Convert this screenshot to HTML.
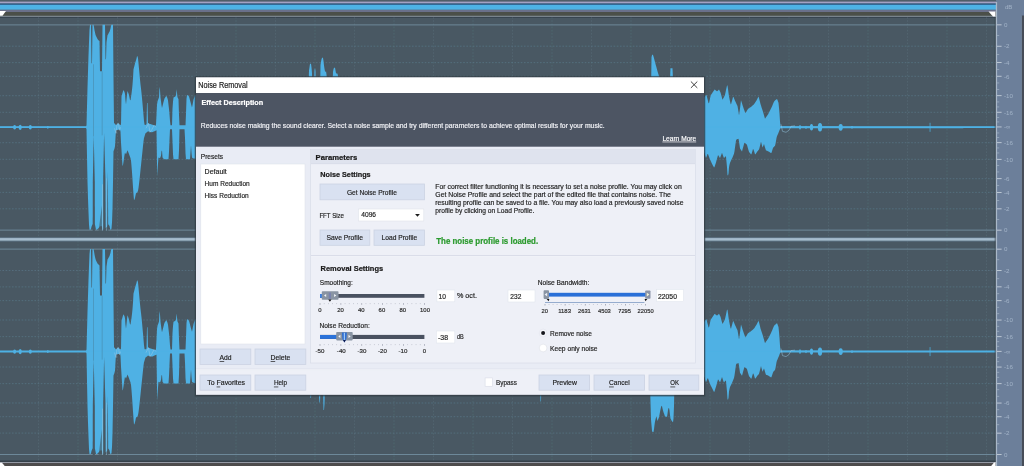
<!DOCTYPE html>
<html lang="en"><head><meta charset="utf-8"><title>Noise Removal</title>
<style>html,body{margin:0;padding:0;background:#485963;overflow:hidden}body{width:1024px;height:466px;position:relative;font-family:"Liberation Sans",sans-serif}svg{position:absolute;left:0;top:0;display:block}text{font-family:"Liberation Sans",sans-serif}</style>
</head><body>
<svg width="1024" height="466" viewBox="0 0 1024 466">
<defs><filter id="soft" x="-6" y="-6" width="1036" height="478" filterUnits="userSpaceOnUse"><feGaussianBlur stdDeviation="0.4"/></filter></defs>
<g filter="url(#soft)">
<rect x="-4" y="-4" width="1032" height="474" fill="#485963"/>
<rect x="-4" y="-4" width="1032" height="6" fill="#4f5d68"/>
<rect x="-4" y="1.6" width="1000" height="1.9" fill="#a3a1c4"/>
<rect x="-4" y="3.5" width="1000" height="1.5" fill="#30608c"/>
<rect x="-4" y="4.9" width="1000" height="4.9" fill="#4db2e5"/>
<rect x="-4" y="9.8" width="1000" height="2.3" fill="#6a6f8a"/>
<rect x="-4" y="12.0" width="1000" height="3.9" fill="#4b4f49"/>
<rect x="-4" y="15.8" width="1000" height="1.1" fill="#879298"/>
<rect x="-4" y="16.9" width="1000" height="1.0" fill="#36424f"/>
<polygon points="-4,11 6,11 2.5,15.8 -4,15.8" fill="#ffffff"/>
<polygon points="988.5,11.4 995.5,11.4 995.5,16.6 993,16.6" fill="#ffffff"/>
<rect x="-4" y="460.7" width="1000" height="1.2" fill="#29313b"/>
<rect x="-4" y="461.9" width="1000" height="1.2" fill="#9499a4"/>
<rect x="-4" y="463.1" width="1000" height="8" fill="#4e4b4b"/>
<polygon points="-4,462.8 2,462.8 8,470 -4,470" fill="#ffffff"/>
<polygon points="994,462.4 995.6,462.4 995.6,470 988,470" fill="#ffffff"/>
<g stroke="#6a8ea6" stroke-width="0.8" stroke-dasharray="1.6 1.6" opacity="0.46" fill="none">
<path d="M-4 46.2 H996"/>
<path d="M-4 208.8 H996"/>
<path d="M-4 62.6 H996"/>
<path d="M-4 192.4 H996"/>
<path d="M-4 76.3 H996"/>
<path d="M-4 178.7 H996"/>
<path d="M-4 95.7 H996"/>
<path d="M-4 159.3 H996"/>
<path d="M-4 112.3 H996"/>
<path d="M-4 142.7 H996"/>
<path d="M-4 270.5 H996"/>
<path d="M-4 433.1 H996"/>
<path d="M-4 286.9 H996"/>
<path d="M-4 416.7 H996"/>
<path d="M-4 300.6 H996"/>
<path d="M-4 403.0 H996"/>
<path d="M-4 320.0 H996"/>
<path d="M-4 383.6 H996"/>
<path d="M-4 336.6 H996"/>
<path d="M-4 367.0 H996"/>
</g>
<g stroke="#6d8593" stroke-width="0.8" stroke-dasharray="1.6 1.6" opacity="0.3" fill="none">
<path d="M38.5 17 V461"/>
<path d="M78.0 17 V461"/>
<path d="M117.5 17 V461"/>
<path d="M157.0 17 V461"/>
<path d="M196.5 17 V461"/>
<path d="M236.0 17 V461"/>
<path d="M275.5 17 V461"/>
<path d="M315.0 17 V461"/>
<path d="M354.5 17 V461"/>
<path d="M394.0 17 V461"/>
<path d="M433.5 17 V461"/>
<path d="M473.0 17 V461"/>
<path d="M512.5 17 V461"/>
<path d="M552.0 17 V461"/>
<path d="M591.5 17 V461"/>
<path d="M631.0 17 V461"/>
<path d="M670.5 17 V461"/>
<path d="M710.0 17 V461"/>
<path d="M749.5 17 V461"/>
<path d="M789.0 17 V461"/>
<path d="M828.5 17 V461"/>
<path d="M868.0 17 V461"/>
<path d="M907.5 17 V461"/>
<path d="M947.0 17 V461"/>
<path d="M986.5 17 V461"/>
</g>
<rect x="-4" y="24.4" width="1000" height="1" fill="#7490a2" opacity="0.85"/>
<rect x="-4" y="229.6" width="1000" height="1" fill="#7490a2" opacity="0.85"/>
<rect x="-4" y="248.6" width="1000" height="1" fill="#7490a2" opacity="0.85"/>
<rect x="-4" y="454.0" width="1000" height="1" fill="#7490a2" opacity="0.85"/>
<rect x="-4" y="237.9" width="1000" height="3" fill="#a5bccd"/>
<rect x="-4" y="237.3" width="1000" height="0.8" fill="#5f7486"/>
<rect x="-4" y="240.7" width="1000" height="0.8" fill="#5f7486"/>
<path d="M0.0 126.5 L0.5 126.5 L1.0 126.5 L1.5 126.5 L2.0 126.5 L2.5 126.5 L3.0 126.5 L3.5 126.5 L4.0 126.5 L4.5 126.5 L5.0 126.5 L5.5 126.5 L6.0 126.5 L6.5 126.5 L7.0 126.5 L7.5 126.5 L8.0 126.5 L8.5 126.5 L9.0 126.5 L9.5 126.5 L10.0 126.5 L10.5 126.5 L11.0 126.5 L11.5 126.5 L12.0 126.5 L12.5 126.5 L13.0 126.5 L13.5 126.5 L14.0 126.5 L14.5 126.5 L15.0 126.5 L15.5 126.5 L16.0 126.5 L16.5 126.5 L17.0 126.5 L17.5 126.5 L18.0 126.5 L18.5 126.5 L19.0 126.5 L19.5 126.5 L20.0 126.5 L20.5 126.5 L21.0 126.5 L21.5 126.5 L22.0 126.5 L22.5 126.5 L23.0 126.5 L23.5 126.5 L24.0 126.5 L24.5 126.5 L25.0 126.5 L25.5 126.5 L26.0 126.5 L26.5 126.5 L27.0 126.5 L27.5 126.5 L28.0 126.5 L28.5 126.5 L29.0 126.5 L29.5 126.5 L30.0 126.5 L30.5 126.5 L31.0 126.5 L31.5 126.5 L32.0 126.5 L32.5 126.5 L33.0 126.5 L33.5 126.5 L34.0 126.5 L34.5 126.5 L35.0 126.5 L35.5 126.5 L36.0 126.5 L36.5 126.5 L37.0 126.5 L37.5 126.5 L38.0 126.5 L38.5 126.5 L39.0 126.5 L39.5 126.5 L40.0 126.5 L40.5 126.5 L41.0 126.5 L41.5 126.5 L42.0 126.5 L42.5 126.5 L43.0 126.5 L43.5 126.5 L44.0 126.5 L44.5 126.5 L45.0 126.5 L45.5 126.5 L46.0 126.5 L46.5 126.5 L47.0 126.5 L47.5 126.5 L48.0 126.5 L48.5 126.5 L49.0 126.5 L49.5 126.5 L50.0 126.5 L50.5 126.5 L51.0 126.5 L51.5 126.5 L52.0 126.5 L52.5 126.5 L53.0 126.5 L53.5 126.5 L54.0 126.5 L54.5 126.5 L55.0 126.5 L55.5 126.5 L56.0 126.5 L56.5 126.5 L57.0 126.5 L57.5 126.5 L58.0 126.5 L58.5 126.5 L59.0 126.5 L59.5 126.5 L60.0 126.5 L60.5 126.5 L61.0 126.5 L61.5 126.5 L62.0 126.5 L62.5 126.5 L63.0 126.5 L63.5 126.5 L64.0 126.5 L64.5 126.5 L65.0 126.5 L65.5 126.5 L66.0 126.5 L66.5 126.5 L67.0 126.5 L67.5 126.5 L68.0 126.5 L68.5 126.5 L69.0 126.5 L69.5 126.5 L70.0 126.5 L70.5 126.5 L71.0 126.5 L71.5 126.5 L72.0 126.5 L72.5 126.5 L73.0 126.5 L73.5 126.5 L74.0 126.5 L74.5 126.5 L75.0 126.5 L75.5 126.5 L76.0 126.5 L76.5 126.5 L77.0 126.5 L77.5 126.5 L78.0 126.5 L78.5 126.5 L79.0 126.5 L79.5 126.5 L80.0 126.5 L80.5 126.5 L81.0 126.5 L81.5 126.5 L82.0 126.5 L82.5 126.5 L83.0 126.5 L83.5 126.5 L84.0 126.5 L84.5 126.5 L85.0 126.5 L85.5 126.5 L86.0 126.5 L86.5 125.3 L87.0 106.3 L87.5 87.3 L88.0 71.4 L88.5 55.5 L89.0 42.3 L89.5 29.8 L90.0 24.9 L90.5 24.8 L91.0 24.8 L91.5 63.3 L92.0 63.3 L92.5 24.8 L93.0 24.8 L93.5 24.8 L94.0 27.0 L94.5 30.3 L95.0 32.6 L95.5 34.8 L96.0 36.1 L96.5 37.1 L97.0 38.1 L97.5 39.1 L98.0 39.7 L98.5 40.2 L99.0 40.7 L99.5 41.1 L100.0 71.3 L100.5 71.3 L101.0 71.3 L101.5 71.3 L102.0 71.3 L102.5 24.8 L103.0 24.8 L103.5 24.8 L104.0 24.8 L104.5 24.8 L105.0 24.8 L105.5 59.3 L106.0 59.3 L106.5 42.3 L107.0 38.8 L107.5 35.3 L108.0 34.4 L108.5 33.5 L109.0 32.6 L109.5 31.7 L110.0 30.2 L110.5 28.4 L111.0 25.8 L111.5 24.8 L112.0 24.8 L112.5 24.8 L113.0 24.8 L113.5 78.5 L114.0 123.3 L114.5 123.3 L115.0 123.9 L115.5 124.6 L116.0 125.3 L116.5 124.8 L117.0 124.3 L117.5 123.8 L118.0 123.3 L118.5 123.7 L119.0 124.1 L119.5 124.5 L120.0 124.8 L120.5 125.2 L121.0 124.2 L121.5 96.6 L122.0 94.8 L122.5 93.0 L123.0 91.2 L123.5 89.9 L124.0 90.9 L124.5 91.9 L125.0 94.0 L125.5 100.4 L126.0 104.5 L126.5 99.6 L127.0 94.6 L127.5 91.0 L128.0 92.3 L128.5 93.6 L129.0 95.1 L129.5 97.6 L130.0 100.0 L130.5 100.2 L131.0 96.9 L131.5 93.7 L132.0 89.7 L132.5 84.8 L133.0 78.2 L133.5 69.3 L134.0 67.4 L134.5 65.4 L135.0 63.5 L135.5 61.8 L136.0 60.2 L136.5 58.4 L137.0 56.2 L137.5 56.2 L138.0 58.3 L138.5 63.3 L139.0 68.7 L139.5 74.1 L140.0 79.6 L140.5 84.4 L141.0 88.6 L141.5 92.9 L142.0 98.0 L142.5 103.6 L143.0 109.2 L143.5 115.0 L144.0 120.9 L144.5 124.5 L145.0 125.1 L145.5 124.9 L146.0 124.6 L146.5 124.3 L147.0 103.0 L147.5 103.0 L148.0 123.4 L148.5 123.5 L149.0 123.7 L149.5 123.8 L150.0 124.0 L150.5 124.1 L151.0 124.3 L151.5 124.5 L152.0 124.6 L152.5 124.8 L153.0 125.0 L153.5 125.1 L154.0 125.3 L154.5 125.5 L155.0 125.6 L155.5 125.8 L156.0 124.4 L156.5 115.3 L157.0 104.7 L157.5 101.5 L158.0 100.1 L158.5 98.7 L159.0 97.3 L159.5 86.7 L160.0 90.0 L160.5 97.4 L161.0 101.3 L161.5 105.3 L162.0 108.0 L162.5 106.0 L163.0 104.1 L163.5 102.1 L164.0 100.2 L164.5 98.5 L165.0 97.7 L165.5 97.0 L166.0 96.2 L166.5 95.9 L167.0 97.2 L167.5 98.5 L168.0 100.4 L168.5 104.7 L169.0 108.9 L169.5 114.2 L170.0 121.1 L170.5 125.3 L171.0 125.3 L171.5 125.3 L172.0 125.3 L172.5 108.6 L173.0 101.7 L173.5 97.5 L174.0 97.2 L174.5 97.0 L175.0 96.8 L175.5 96.3 L176.0 95.5 L176.5 89.2 L177.0 92.9 L177.5 97.2 L178.0 98.2 L178.5 99.2 L179.0 115.0 L179.5 125.3 L180.0 125.3 L180.5 125.3 L181.0 125.3 L181.5 125.3 L182.0 125.3 L182.5 125.3 L183.0 125.3 L183.5 125.3 L184.0 125.3 L184.5 125.3 L185.0 125.3 L185.5 125.3 L186.0 113.4 L186.5 98.7 L187.0 95.3 L187.5 95.0 L188.0 95.5 L188.5 96.0 L189.0 96.5 L189.5 98.2 L190.0 100.2 L190.5 102.1 L191.0 104.1 L191.5 105.8 L192.0 107.5 L192.5 104.9 L193.0 102.2 L193.5 99.6 L194.0 98.3 L194.5 96.9 L195.0 95.6 L195.5 95.1 L196.0 94.6 L196.5 95.3 L197.0 95.9 L197.5 96.6 L198.0 97.3 L198.5 98.8 L199.0 100.3 L199.5 102.3 L200.0 102.7 L200.5 102.0 L201.0 104.8 L201.5 104.1 L202.0 98.3 L202.5 97.5 L203.0 101.1 L203.5 100.4 L204.0 99.4 L204.5 101.5 L205.0 102.8 L205.5 105.0 L206.0 107.3 L206.5 109.5 L207.0 110.4 L207.5 112.7 L208.0 114.4 L208.5 112.3 L209.0 114.4 L209.5 112.8 L210.0 111.0 L210.5 109.4 L211.0 108.0 L211.5 106.4 L212.0 101.6 L212.5 100.9 L213.0 102.6 L213.5 102.0 L214.0 99.8 L214.5 99.1 L215.0 94.5 L215.5 93.8 L216.0 93.8 L216.5 95.8 L217.0 97.8 L217.5 99.8 L218.0 99.2 L218.5 101.4 L219.0 106.8 L219.5 108.7 L220.0 108.3 L220.5 107.2 L221.0 106.3 L221.5 105.3 L222.0 103.4 L222.5 102.3 L223.0 102.1 L223.5 101.0 L224.0 102.8 L224.5 101.9 L225.0 98.9 L225.5 97.8 L226.0 97.9 L226.5 99.7 L227.0 101.0 L227.5 102.8 L228.0 107.4 L228.5 109.0 L229.0 107.5 L229.5 109.4 L230.0 112.7 L230.5 114.5 L231.0 115.4 L231.5 117.3 L232.0 119.4 L232.5 119.9 L233.0 120.7 L233.5 121.1 L234.0 121.0 L234.5 121.8 L235.0 122.3 L235.5 122.8 L236.0 123.3 L236.5 123.8 L237.0 124.3 L237.5 124.8 L238.0 125.3 L238.5 125.3 L239.0 125.3 L239.5 125.3 L240.0 125.3 L240.5 125.3 L241.0 125.3 L241.5 125.3 L242.0 125.3 L242.5 125.3 L243.0 125.3 L243.5 125.3 L244.0 125.3 L244.5 125.3 L245.0 125.3 L245.5 125.3 L246.0 125.3 L246.5 123.0 L247.0 120.5 L247.5 118.2 L248.0 116.8 L248.5 114.7 L249.0 114.5 L249.5 112.7 L250.0 108.2 L250.5 107.0 L251.0 106.7 L251.5 105.6 L252.0 102.6 L252.5 101.4 L253.0 101.7 L253.5 100.6 L254.0 98.1 L254.5 97.0 L255.0 96.1 L255.5 95.0 L256.0 96.3 L256.5 96.8 L257.0 95.1 L257.5 95.6 L258.0 92.5 L258.5 93.1 L259.0 95.9 L259.5 96.4 L260.0 98.9 L260.5 99.4 L261.0 98.6 L261.5 99.1 L262.0 98.3 L262.5 97.3 L263.0 97.8 L263.5 96.8 L264.0 97.3 L264.5 96.4 L265.0 91.8 L265.5 90.8 L266.0 90.6 L266.5 89.6 L267.0 90.8 L267.5 89.9 L268.0 87.1 L268.5 88.6 L269.0 91.5 L269.5 93.0 L270.0 93.7 L270.5 95.2 L271.0 102.0 L271.5 103.2 L272.0 101.4 L272.5 102.8 L273.0 103.3 L273.5 104.7 L274.0 106.2 L274.5 105.1 L275.0 103.0 L275.5 101.9 L276.0 99.3 L276.5 98.0 L277.0 100.0 L277.5 98.9 L278.0 98.6 L278.5 97.5 L279.0 93.2 L279.5 92.0 L280.0 90.5 L280.5 92.4 L281.0 92.1 L281.5 94.1 L282.0 98.9 L282.5 100.7 L283.0 104.2 L283.5 105.9 L284.0 108.3 L284.5 109.9 L285.0 110.8 L285.5 112.5 L286.0 112.3 L286.5 110.8 L287.0 110.4 L287.5 109.0 L288.0 108.7 L288.5 107.4 L289.0 106.0 L289.5 104.7 L290.0 102.0 L290.5 100.6 L291.0 98.1 L291.5 96.7 L292.0 96.8 L292.5 97.6 L293.0 100.4 L293.5 101.1 L294.0 101.9 L294.5 102.7 L295.0 102.5 L295.5 103.3 L296.0 103.8 L296.5 104.7 L297.0 109.2 L297.5 109.9 L298.0 108.9 L298.5 107.8 L299.0 106.1 L299.5 105.0 L300.0 102.4 L300.5 101.2 L301.0 101.4 L301.5 100.3 L302.0 96.8 L302.5 95.6 L303.0 95.4 L303.5 94.3 L304.0 97.8 L304.5 98.2 L305.0 92.2 L305.5 92.7 L306.0 94.1 L306.5 94.6 L307.0 98.4 L307.5 98.8 L308.0 94.6 L308.5 85.5 L309.0 70.6 L309.5 67.2 L310.0 63.8 L310.5 63.8 L311.0 63.8 L311.5 67.4 L312.0 73.3 L312.5 95.2 L313.0 95.6 L313.5 95.6 L314.0 86.3 L314.5 70.0 L315.0 67.9 L315.5 70.7 L316.0 90.5 L316.5 94.7 L317.0 94.3 L317.5 94.3 L318.0 91.5 L318.5 91.5 L319.0 90.6 L319.5 90.6 L320.0 95.2 L320.5 64.8 L321.0 62.0 L321.5 59.3 L322.0 57.9 L322.5 57.6 L323.0 58.1 L323.5 61.0 L324.0 65.5 L324.5 68.8 L325.0 71.3 L325.5 71.9 L326.0 71.3 L326.5 74.6 L327.0 81.8 L327.5 92.8 L328.0 93.7 L328.5 93.7 L329.0 92.6 L329.5 92.6 L330.0 96.7 L330.5 96.7 L331.0 94.3 L331.5 94.3 L332.0 95.5 L332.5 87.9 L333.0 71.8 L333.5 69.2 L334.0 67.7 L334.5 67.7 L335.0 67.7 L335.5 70.5 L336.0 73.3 L336.5 73.5 L337.0 73.6 L337.5 73.8 L338.0 76.1 L338.5 97.5 L339.0 100.2 L339.5 100.8 L340.0 98.5 L340.5 99.2 L341.0 99.4 L341.5 100.2 L342.0 103.3 L342.5 104.0 L343.0 102.1 L343.5 102.9 L344.0 106.1 L344.5 105.4 L345.0 105.4 L345.5 104.8 L346.0 103.5 L346.5 102.8 L347.0 102.8 L347.5 102.2 L348.0 101.7 L348.5 101.1 L349.0 101.0 L349.5 100.4 L350.0 96.8 L350.5 98.5 L351.0 99.8 L351.5 101.5 L352.0 104.0 L352.5 105.7 L353.0 106.4 L353.5 108.1 L354.0 109.8 L354.5 111.6 L355.0 114.3 L355.5 115.9 L356.0 117.6 L356.5 118.2 L357.0 119.1 L357.5 119.7 L358.0 120.0 L358.5 120.7 L359.0 122.2 L359.5 122.0 L360.0 122.6 L360.5 123.3 L361.0 124.0 L361.5 124.6 L362.0 125.3 L362.5 125.3 L363.0 125.3 L363.5 125.3 L364.0 125.3 L364.5 125.3 L365.0 125.3 L365.5 125.3 L366.0 125.3 L366.5 125.3 L367.0 125.3 L367.5 125.3 L368.0 125.3 L368.5 125.3 L369.0 125.3 L369.5 125.3 L370.0 125.3 L370.5 125.3 L371.0 125.3 L371.5 125.3 L372.0 125.3 L372.5 125.3 L373.0 125.3 L373.5 125.3 L374.0 125.3 L374.5 125.3 L375.0 125.3 L375.5 125.3 L376.0 125.3 L376.5 125.3 L377.0 125.3 L377.5 125.3 L378.0 125.3 L378.5 125.3 L379.0 125.3 L379.5 125.3 L380.0 125.3 L380.5 123.8 L381.0 122.3 L381.5 121.0 L382.0 119.5 L382.5 118.0 L383.0 115.7 L383.5 114.2 L384.0 112.9 L384.5 111.4 L385.0 112.6 L385.5 111.3 L386.0 106.1 L386.5 105.0 L387.0 106.7 L387.5 105.8 L388.0 107.0 L388.5 106.2 L389.0 101.7 L389.5 100.7 L390.0 100.6 L390.5 99.7 L391.0 99.1 L391.5 98.2 L392.0 94.3 L392.5 95.5 L393.0 101.0 L393.5 102.1 L394.0 97.7 L394.5 98.9 L395.0 103.6 L395.5 104.7 L396.0 103.7 L396.5 104.9 L397.0 106.4 L397.5 107.6 L398.0 108.7 L398.5 107.6 L399.0 109.9 L399.5 109.0 L400.0 104.5 L400.5 103.4 L401.0 106.7 L401.5 105.8 L402.0 100.2 L402.5 99.2 L403.0 100.3 L403.5 99.4 L404.0 99.7 L404.5 101.4 L405.0 102.6 L405.5 104.3 L406.0 102.7 L406.5 104.7 L407.0 108.1 L407.5 109.9 L408.0 112.4 L408.5 114.2 L409.0 115.0 L409.5 117.0 L410.0 119.5 L410.5 119.8 L411.0 119.5 L411.5 119.8 L412.0 121.0 L412.5 121.3 L413.0 120.7 L413.5 121.4 L414.0 121.7 L414.5 122.0 L415.0 122.3 L415.5 122.6 L416.0 122.9 L416.5 123.2 L417.0 123.5 L417.5 123.8 L418.0 124.1 L418.5 124.4 L419.0 124.7 L419.5 125.0 L420.0 125.3 L420.5 125.3 L421.0 125.3 L421.5 125.3 L422.0 125.3 L422.5 125.3 L423.0 125.3 L423.5 125.3 L424.0 125.3 L424.5 125.3 L425.0 125.3 L425.5 125.3 L426.0 125.3 L426.5 125.3 L427.0 125.3 L427.5 125.3 L428.0 125.3 L428.5 125.3 L429.0 125.3 L429.5 125.3 L430.0 125.3 L430.5 125.3 L431.0 125.3 L431.5 125.3 L432.0 125.3 L432.5 125.3 L433.0 125.3 L433.5 125.3 L434.0 125.3 L434.5 125.3 L435.0 125.3 L435.5 125.3 L436.0 125.3 L436.5 125.3 L437.0 125.3 L437.5 125.3 L438.0 125.3 L438.5 125.3 L439.0 125.3 L439.5 125.3 L440.0 125.3 L440.5 123.5 L441.0 121.6 L441.5 120.4 L442.0 117.3 L442.5 115.3 L443.0 113.4 L443.5 111.4 L444.0 111.6 L444.5 109.9 L445.0 109.7 L445.5 108.1 L446.0 106.6 L446.5 105.9 L447.0 101.6 L447.5 100.7 L448.0 98.1 L448.5 97.3 L449.0 97.7 L449.5 96.9 L450.0 95.9 L450.5 95.1 L451.0 96.6 L451.5 95.8 L452.0 95.3 L452.5 96.4 L453.0 95.1 L453.5 96.3 L454.0 98.2 L454.5 99.4 L455.0 101.9 L455.5 103.0 L456.0 103.1 L456.5 104.2 L457.0 105.8 L457.5 106.9 L458.0 107.8 L458.5 106.5 L459.0 105.7 L459.5 104.4 L460.0 102.6 L460.5 101.3 L461.0 101.4 L461.5 100.2 L462.0 95.9 L462.5 94.5 L463.0 96.2 L463.5 95.0 L464.0 93.7 L464.5 95.3 L465.0 96.9 L465.5 98.4 L466.0 100.3 L466.5 101.8 L467.0 99.0 L467.5 100.8 L468.0 102.9 L468.5 104.7 L469.0 111.0 L469.5 112.4 L470.0 112.6 L470.5 111.7 L471.0 109.1 L471.5 108.1 L472.0 105.9 L472.5 104.8 L473.0 105.6 L473.5 104.6 L474.0 104.7 L474.5 103.7 L475.0 101.3 L475.5 100.3 L476.0 100.8 L476.5 102.5 L477.0 103.7 L477.5 105.5 L478.0 106.3 L478.5 108.2 L479.0 109.0 L479.5 110.9 L480.0 115.3 L480.5 116.9 L481.0 118.5 L481.5 120.1 L482.0 120.8 L482.5 121.5 L483.0 121.8 L483.5 122.0 L484.0 122.3 L484.5 122.5 L485.0 122.8 L485.5 123.0 L486.0 123.3 L486.5 123.5 L487.0 123.8 L487.5 124.0 L488.0 124.3 L488.5 124.5 L489.0 124.8 L489.5 125.0 L490.0 125.3 L490.5 125.3 L491.0 125.3 L491.5 125.3 L492.0 125.3 L492.5 125.3 L493.0 125.3 L493.5 125.3 L494.0 125.3 L494.5 125.3 L495.0 125.3 L495.5 125.3 L496.0 125.3 L496.5 125.3 L497.0 125.3 L497.5 125.3 L498.0 125.3 L498.5 125.3 L499.0 125.3 L499.5 125.3 L500.0 125.3 L500.5 125.3 L501.0 125.3 L501.5 125.3 L502.0 125.3 L502.5 125.3 L503.0 125.3 L503.5 125.3 L504.0 125.3 L504.5 125.3 L505.0 125.3 L505.5 125.3 L506.0 125.3 L506.5 125.3 L507.0 125.3 L507.5 125.3 L508.0 125.3 L508.5 125.3 L509.0 125.3 L509.5 125.3 L510.0 125.3 L510.5 125.3 L511.0 125.3 L511.5 125.3 L512.0 125.3 L512.5 125.3 L513.0 125.3 L513.5 125.3 L514.0 125.3 L514.5 125.3 L515.0 125.3 L515.5 125.3 L516.0 125.3 L516.5 125.3 L517.0 125.3 L517.5 125.3 L518.0 125.3 L518.5 125.3 L519.0 125.3 L519.5 125.3 L520.0 125.3 L520.5 123.8 L521.0 122.3 L521.5 121.0 L522.0 118.8 L522.5 117.2 L523.0 116.1 L523.5 114.6 L524.0 113.6 L524.5 112.1 L525.0 110.6 L525.5 109.2 L526.0 108.4 L526.5 107.6 L527.0 105.7 L527.5 104.8 L528.0 108.7 L528.5 108.1 L529.0 103.8 L529.5 103.0 L530.0 105.0 L530.5 104.3 L531.0 98.1 L531.5 97.2 L532.0 99.5 L532.5 99.1 L533.0 94.0 L533.5 93.5 L534.0 95.9 L534.5 95.4 L535.0 91.3 L535.5 90.8 L536.0 93.8 L536.5 93.3 L537.0 95.4 L537.5 95.0 L538.0 93.7 L538.5 94.9 L539.0 91.7 L539.5 93.1 L540.0 95.8 L540.5 97.2 L541.0 100.6 L541.5 101.9 L542.0 106.2 L542.5 107.3 L543.0 106.4 L543.5 107.6 L544.0 106.2 L544.5 105.3 L545.0 108.1 L545.5 107.3 L546.0 104.0 L546.5 103.2 L547.0 106.8 L547.5 106.1 L548.0 98.5 L548.5 97.6 L549.0 102.2 L549.5 101.5 L550.0 96.8 L550.5 98.7 L551.0 99.9 L551.5 101.8 L552.0 108.5 L552.5 110.0 L553.0 109.3 L553.5 111.1 L554.0 111.5 L554.5 113.4 L555.0 115.8 L555.5 117.6 L556.0 120.7 L556.5 121.1 L557.0 120.6 L557.5 121.0 L558.0 120.8 L558.5 121.8 L559.0 122.3 L559.5 122.8 L560.0 123.3 L560.5 123.8 L561.0 124.3 L561.5 124.8 L562.0 125.3 L562.5 125.3 L563.0 125.3 L563.5 125.3 L564.0 125.3 L564.5 125.3 L565.0 125.3 L565.5 125.3 L566.0 125.3 L566.5 125.3 L567.0 125.3 L567.5 125.3 L568.0 125.3 L568.5 125.3 L569.0 125.3 L569.5 125.3 L570.0 125.3 L570.5 125.3 L571.0 125.3 L571.5 125.3 L572.0 125.3 L572.5 125.3 L573.0 125.3 L573.5 125.3 L574.0 125.3 L574.5 125.3 L575.0 125.3 L575.5 125.3 L576.0 125.3 L576.5 125.3 L577.0 125.3 L577.5 125.3 L578.0 125.3 L578.5 125.3 L579.0 125.3 L579.5 125.3 L580.0 125.3 L580.5 125.3 L581.0 125.3 L581.5 125.3 L582.0 125.3 L582.5 125.3 L583.0 125.3 L583.5 125.3 L584.0 125.3 L584.5 125.3 L585.0 125.3 L585.5 125.3 L586.0 125.3 L586.5 125.3 L587.0 125.3 L587.5 125.3 L588.0 125.3 L588.5 125.3 L589.0 125.3 L589.5 125.3 L590.0 125.3 L590.5 125.3 L591.0 125.3 L591.5 125.3 L592.0 125.3 L592.5 125.3 L593.0 125.3 L593.5 125.3 L594.0 125.3 L594.5 125.3 L595.0 125.3 L595.5 125.3 L596.0 125.3 L596.5 125.3 L597.0 125.3 L597.5 125.3 L598.0 125.3 L598.5 125.3 L599.0 125.3 L599.5 125.3 L600.0 125.3 L600.5 124.0 L601.0 122.6 L601.5 121.1 L602.0 119.5 L602.5 118.1 L603.0 117.7 L603.5 116.5 L604.0 113.5 L604.5 112.1 L605.0 113.2 L605.5 111.9 L606.0 107.9 L606.5 106.8 L607.0 108.9 L607.5 107.9 L608.0 106.6 L608.5 105.7 L609.0 102.3 L609.5 101.3 L610.0 102.0 L610.5 101.0 L611.0 99.9 L611.5 98.9 L612.0 99.2 L612.5 100.6 L613.0 101.7 L613.5 103.1 L614.0 106.1 L614.5 107.4 L615.0 107.4 L615.5 108.8 L616.0 110.9 L616.5 112.3 L617.0 112.2 L617.5 113.7 L618.0 114.5 L618.5 113.1 L619.0 113.7 L619.5 112.5 L620.0 110.5 L620.5 109.2 L621.0 108.1 L621.5 106.8 L622.0 107.3 L622.5 106.2 L623.0 103.5 L623.5 102.3 L624.0 97.4 L624.5 96.9 L625.0 100.7 L625.5 100.2 L626.0 96.5 L626.5 96.0 L627.0 94.6 L627.5 94.1 L628.0 95.4 L628.5 94.9 L629.0 96.3 L629.5 95.9 L630.0 91.2 L630.5 92.4 L631.0 97.9 L631.5 99.0 L632.0 98.7 L632.5 99.8 L633.0 98.0 L633.5 99.2 L634.0 104.6 L634.5 105.7 L635.0 106.0 L635.5 107.1 L636.0 110.8 L636.5 110.0 L637.0 103.7 L637.5 102.6 L638.0 105.4 L638.5 104.4 L639.0 99.1 L639.5 98.1 L640.0 101.6 L640.5 100.7 L641.0 99.1 L641.5 98.1 L642.0 94.9 L642.5 95.1 L643.0 95.7 L643.5 95.9 L644.0 94.1 L644.5 94.3 L645.0 96.5 L645.5 96.7 L646.0 97.7 L646.5 97.9 L647.0 99.1 L647.5 99.2 L648.0 96.7 L648.5 96.1 L649.0 97.1 L649.5 96.4 L650.0 92.8 L650.5 92.1 L651.0 93.6 L651.5 57.3 L652.0 55.2 L652.5 54.6 L653.0 55.1 L653.5 56.4 L654.0 58.3 L654.5 60.2 L655.0 62.0 L655.5 63.9 L656.0 65.8 L656.5 67.6 L657.0 69.5 L657.5 71.3 L658.0 73.0 L658.5 74.6 L659.0 76.3 L659.5 78.0 L660.0 79.9 L660.5 81.7 L661.0 86.3 L661.5 88.0 L662.0 92.1 L662.5 92.5 L663.0 89.6 L663.5 90.1 L664.0 91.8 L664.5 92.3 L665.0 93.2 L665.5 93.6 L666.0 89.2 L666.5 89.2 L667.0 92.8 L667.5 92.8 L668.0 90.9 L668.5 90.9 L669.0 96.1 L669.5 96.1 L670.0 79.8 L670.5 68.3 L671.0 68.3 L671.5 68.3 L672.0 68.3 L672.5 68.3 L673.0 79.8 L673.5 89.0 L674.0 95.4 L674.5 96.4 L675.0 98.4 L675.5 99.4 L676.0 95.8 L676.5 95.3 L677.0 96.0 L677.5 95.5 L678.0 96.4 L678.5 95.9 L679.0 93.4 L679.5 92.9 L680.0 90.8 L680.5 91.5 L681.0 96.8 L681.5 97.4 L682.0 95.1 L682.5 95.8 L683.0 103.4 L683.5 104.0 L684.0 99.9 L684.5 100.5 L685.0 102.0 L685.5 102.6 L686.0 99.8 L686.5 99.1 L687.0 98.0 L687.5 97.2 L688.0 97.1 L688.5 96.4 L689.0 99.4 L689.5 98.7 L690.0 98.5 L690.5 97.9 L691.0 96.1 L691.5 95.5 L692.0 98.5 L692.5 98.9 L693.0 94.2 L693.5 94.7 L694.0 96.7 L694.5 97.2 L695.0 97.9 L695.5 98.4 L696.0 95.9 L696.5 96.4 L697.0 97.0 L697.5 97.6 L698.0 97.4 L698.5 97.3 L699.0 97.4 L699.5 97.2 L700.0 96.3 L700.5 96.1 L701.0 96.0 L701.5 95.8 L702.0 98.2 L702.5 98.0 L703.0 97.7 L703.5 97.6 L704.0 97.4 L704.5 97.1 L705.0 96.4 L705.5 95.6 L706.0 94.9 L706.5 95.2 L707.0 97.1 L707.5 99.1 L708.0 101.0 L708.5 102.9 L709.0 103.2 L709.5 100.9 L710.0 98.5 L710.5 96.2 L711.0 94.9 L711.5 94.1 L712.0 93.4 L712.5 92.6 L713.0 91.9 L713.5 91.1 L714.0 90.4 L714.5 89.6 L715.0 89.8 L715.5 90.2 L716.0 90.6 L716.5 90.9 L717.0 91.3 L717.5 91.0 L718.0 90.5 L718.5 90.0 L719.0 89.5 L719.5 90.5 L720.0 91.4 L720.5 92.4 L721.0 94.2 L721.5 96.0 L722.0 97.9 L722.5 99.7 L723.0 98.8 L723.5 97.9 L724.0 96.9 L724.5 96.0 L725.0 94.8 L725.5 92.5 L726.0 90.1 L726.5 87.7 L727.0 85.4 L727.5 85.4 L728.0 88.9 L728.5 92.9 L729.0 96.3 L729.5 98.7 L730.0 101.2 L730.5 103.6 L731.0 104.4 L731.5 102.5 L732.0 100.7 L732.5 98.9 L733.0 97.0 L733.5 97.0 L734.0 98.3 L734.5 99.5 L735.0 100.7 L735.5 101.8 L736.0 102.8 L736.5 103.9 L737.0 104.9 L737.5 105.9 L738.0 108.7 L738.5 111.9 L739.0 115.2 L739.5 112.5 L740.0 108.4 L740.5 104.3 L741.0 100.2 L741.5 101.8 L742.0 103.3 L742.5 104.9 L743.0 106.4 L743.5 108.0 L744.0 109.4 L744.5 110.8 L745.0 112.3 L745.5 113.2 L746.0 112.3 L746.5 111.5 L747.0 110.6 L747.5 109.7 L748.0 108.9 L748.5 108.6 L749.0 108.3 L749.5 108.0 L750.0 107.6 L750.5 107.3 L751.0 106.9 L751.5 106.5 L752.0 106.0 L752.5 105.6 L753.0 105.2 L753.5 104.7 L754.0 104.3 L754.5 103.6 L755.0 102.8 L755.5 102.0 L756.0 101.2 L756.5 100.4 L757.0 99.4 L757.5 98.4 L758.0 97.5 L758.5 96.5 L759.0 97.9 L759.5 100.0 L760.0 102.0 L760.5 104.1 L761.0 105.6 L761.5 107.2 L762.0 108.7 L762.5 110.3 L763.0 111.8 L763.5 113.5 L764.0 115.3 L764.5 117.0 L765.0 118.8 L765.5 118.1 L766.0 117.3 L766.5 116.6 L767.0 115.9 L767.5 115.1 L768.0 114.4 L768.5 113.6 L769.0 112.6 L769.5 111.6 L770.0 110.6 L770.5 109.6 L771.0 108.6 L771.5 107.5 L772.0 106.4 L772.5 105.2 L773.0 104.0 L773.5 102.8 L774.0 101.7 L774.5 101.0 L775.0 100.5 L775.5 100.1 L776.0 99.7 L776.5 99.3 L777.0 98.9 L777.5 99.9 L778.0 101.4 L778.5 102.8 L779.0 107.8 L779.5 113.6 L780.0 121.4 L780.5 126.3 L781.0 126.3 L781.5 126.3 L782.0 126.3 L782.5 126.3 L783.0 126.3 L783.5 126.3 L784.0 126.3 L784.5 126.3 L785.0 126.3 L785.5 126.3 L786.0 126.3 L786.5 126.3 L787.0 126.3 L787.5 126.3 L788.0 126.3 L788.5 126.3 L789.0 126.3 L789.5 126.3 L790.0 126.3 L790.5 126.3 L791.0 126.3 L791.5 126.3 L792.0 126.3 L792.5 126.3 L793.0 126.3 L793.5 126.3 L794.0 126.3 L794.5 126.3 L795.0 126.3 L795.5 126.3 L796.0 126.3 L796.5 126.3 L797.0 126.3 L797.5 126.3 L798.0 126.3 L798.5 126.3 L799.0 126.3 L799.5 126.3 L800.0 126.3 L800.5 126.3 L801.0 126.3 L801.5 126.3 L802.0 126.3 L802.5 126.3 L803.0 126.3 L803.5 126.3 L804.0 126.3 L804.5 126.3 L805.0 126.3 L805.5 126.3 L806.0 126.3 L806.5 126.3 L807.0 126.3 L807.5 126.3 L808.0 126.3 L808.5 126.3 L809.0 126.3 L809.5 126.3 L810.0 126.3 L810.5 126.3 L811.0 126.3 L811.5 126.3 L812.0 126.3 L812.5 126.3 L813.0 126.3 L813.5 126.3 L814.0 126.3 L814.5 126.3 L815.0 126.3 L815.5 126.3 L816.0 126.3 L816.5 126.3 L817.0 126.3 L817.5 126.3 L818.0 126.3 L818.5 126.3 L819.0 126.3 L819.5 126.3 L820.0 126.3 L820.5 126.3 L821.0 126.3 L821.5 126.3 L822.0 126.3 L822.5 126.3 L823.0 126.3 L823.5 126.3 L824.0 126.3 L824.5 126.3 L825.0 126.3 L825.5 126.3 L826.0 126.3 L826.5 126.3 L827.0 126.3 L827.5 126.3 L828.0 126.3 L828.5 126.3 L829.0 126.3 L829.5 126.3 L830.0 126.3 L830.5 126.3 L831.0 126.3 L831.5 126.3 L832.0 126.3 L832.5 126.3 L833.0 126.3 L833.5 126.3 L834.0 126.3 L834.5 126.3 L835.0 126.3 L835.5 126.3 L836.0 126.3 L836.5 126.3 L837.0 126.3 L837.5 126.3 L838.0 126.3 L838.5 126.3 L839.0 126.3 L839.5 126.3 L840.0 126.3 L840.5 126.3 L841.0 126.3 L841.5 126.4 L842.0 126.4 L842.5 126.4 L843.0 126.4 L843.5 126.4 L844.0 126.4 L844.5 126.4 L845.0 126.4 L845.5 126.4 L846.0 126.4 L846.5 126.4 L847.0 126.4 L847.5 126.4 L848.0 126.4 L848.5 126.4 L849.0 126.4 L849.5 126.4 L850.0 126.4 L850.5 126.4 L851.0 126.4 L851.5 126.4 L852.0 126.4 L852.5 126.4 L853.0 126.4 L853.5 126.4 L854.0 126.4 L854.5 126.4 L855.0 126.4 L855.5 126.4 L856.0 126.4 L856.5 126.4 L857.0 126.4 L857.5 126.4 L858.0 126.4 L858.5 126.4 L859.0 126.4 L859.5 126.4 L860.0 126.4 L860.5 126.4 L861.0 126.4 L861.5 126.4 L862.0 126.4 L862.5 126.4 L863.0 126.4 L863.5 126.4 L864.0 126.4 L864.5 126.4 L865.0 126.4 L865.5 126.4 L866.0 126.4 L866.5 126.4 L867.0 126.4 L867.5 126.4 L868.0 126.4 L868.5 126.4 L869.0 126.4 L869.5 126.4 L870.0 126.4 L870.5 126.4 L871.0 126.4 L871.5 126.4 L872.0 126.4 L872.5 126.4 L873.0 126.4 L873.5 126.4 L874.0 126.4 L874.5 126.4 L875.0 126.4 L875.5 126.4 L876.0 126.4 L876.5 126.4 L877.0 126.4 L877.5 126.4 L878.0 126.4 L878.5 126.4 L879.0 126.4 L879.5 126.4 L880.0 126.4 L880.5 126.4 L881.0 126.4 L881.5 126.4 L882.0 126.4 L882.5 126.4 L883.0 126.4 L883.5 126.4 L884.0 126.4 L884.5 126.4 L885.0 126.4 L885.5 126.4 L886.0 126.4 L886.5 126.4 L887.0 126.4 L887.5 126.4 L888.0 126.4 L888.5 126.4 L889.0 126.4 L889.5 126.4 L890.0 126.4 L890.5 126.4 L891.0 126.4 L891.5 126.4 L892.0 126.4 L892.5 126.4 L893.0 126.4 L893.5 126.4 L894.0 126.4 L894.5 126.4 L895.0 126.4 L895.5 126.4 L896.0 126.4 L896.5 126.4 L897.0 126.4 L897.5 126.4 L898.0 126.4 L898.5 126.4 L899.0 126.4 L899.5 126.4 L900.0 126.4 L900.5 126.4 L901.0 126.4 L901.5 126.4 L902.0 126.4 L902.5 126.4 L903.0 126.4 L903.5 126.4 L904.0 126.4 L904.5 126.4 L905.0 126.4 L905.5 126.4 L906.0 126.4 L906.5 126.4 L907.0 126.4 L907.5 126.4 L908.0 126.4 L908.5 126.4 L909.0 126.4 L909.5 126.4 L910.0 126.4 L910.5 126.4 L911.0 126.4 L911.5 126.4 L912.0 126.4 L912.5 126.4 L913.0 126.4 L913.5 126.4 L914.0 126.4 L914.5 126.4 L915.0 126.4 L915.5 126.4 L916.0 126.4 L916.5 126.4 L917.0 126.4 L917.5 126.4 L918.0 126.4 L918.5 126.4 L919.0 126.4 L919.5 126.4 L920.0 126.4 L920.5 126.4 L921.0 126.4 L921.5 126.4 L922.0 126.4 L922.5 126.4 L923.0 126.4 L923.5 126.4 L924.0 126.4 L924.5 126.4 L925.0 126.4 L925.5 126.4 L926.0 126.4 L926.5 126.4 L927.0 126.4 L927.5 126.4 L928.0 126.4 L928.5 126.4 L929.0 126.4 L929.5 126.4 L930.0 126.4 L930.5 126.4 L931.0 126.4 L931.5 126.4 L932.0 126.4 L932.5 126.4 L933.0 126.4 L933.5 126.4 L934.0 126.4 L934.5 126.4 L935.0 126.4 L935.5 126.4 L936.0 126.4 L936.5 126.4 L937.0 126.4 L937.5 126.4 L938.0 126.4 L938.5 126.4 L939.0 126.4 L939.5 126.4 L940.0 126.4 L940.5 126.4 L941.0 126.4 L941.5 126.4 L942.0 126.4 L942.5 126.4 L943.0 126.4 L943.5 126.4 L944.0 126.4 L944.5 126.4 L945.0 126.4 L945.5 126.4 L946.0 126.4 L946.5 126.4 L947.0 126.4 L947.5 126.4 L948.0 126.4 L948.5 126.4 L949.0 126.4 L949.5 126.4 L950.0 126.4 L950.5 126.4 L951.0 126.4 L951.5 126.4 L952.0 126.4 L952.5 126.4 L953.0 126.4 L953.5 126.4 L954.0 126.4 L954.5 126.4 L955.0 126.4 L955.5 126.4 L956.0 126.4 L956.5 126.4 L957.0 126.4 L957.5 126.4 L958.0 126.4 L958.5 126.4 L959.0 126.4 L959.5 126.4 L960.0 126.4 L960.5 126.4 L961.0 126.4 L961.5 126.4 L962.0 126.4 L962.5 126.4 L963.0 126.4 L963.5 126.5 L964.0 126.5 L964.5 126.5 L965.0 126.5 L965.5 126.5 L966.0 126.5 L966.5 126.5 L967.0 126.5 L967.5 126.5 L968.0 126.5 L968.5 126.5 L969.0 126.5 L969.5 126.5 L970.0 126.5 L970.5 126.5 L971.0 126.5 L971.5 126.5 L972.0 126.5 L972.5 126.5 L973.0 126.5 L973.5 126.5 L974.0 126.5 L974.5 126.5 L975.0 126.5 L975.5 126.5 L976.0 126.5 L976.5 126.5 L977.0 126.5 L977.5 126.5 L978.0 126.5 L978.5 126.5 L979.0 126.5 L979.5 126.5 L980.0 126.5 L980.5 126.5 L981.0 126.5 L981.5 126.5 L982.0 126.5 L982.5 126.5 L983.0 126.5 L983.5 126.5 L984.0 126.5 L984.5 126.5 L985.0 126.5 L985.5 126.5 L986.0 126.5 L986.5 126.5 L987.0 126.5 L987.5 126.5 L988.0 126.5 L988.5 126.5 L989.0 126.5 L989.5 126.5 L990.0 126.5 L990.5 126.5 L991.0 126.5 L991.5 126.5 L992.0 126.5 L992.5 126.5 L993.0 126.5 L993.5 126.5 L994.0 126.5 L994.5 126.5 L995.0 126.5 L995.5 126.5 L996.0 126.5 L996.5 126.5 L997.0 126.5 L997.5 126.5 L998.0 126.5 L998.5 126.5 L999.0 126.5 L999.5 126.5 L1000.0 126.5 L1000.5 126.5 L1001.0 126.5 L1001.5 126.5 L1002.0 126.5 L1002.5 126.5 L1003.0 126.5 L1003.5 126.5 L1004.0 126.5 L1004.5 126.5 L1005.0 126.5 L1005.5 126.5 L1006.0 126.5 L1006.5 126.5 L1007.0 126.5 L1007.5 126.5 L1008.0 126.5 L1008.5 126.5 L1009.0 126.5 L1009.5 126.5 L1010.0 126.5 L1010.5 126.5 L1011.0 126.5 L1011.5 126.5 L1012.0 126.5 L1012.5 126.5 L1013.0 126.5 L1013.5 126.5 L1014.0 126.5 L1014.5 126.5 L1015.0 126.5 L1015.5 126.5 L1016.0 126.5 L1016.5 126.5 L1017.0 126.5 L1017.5 126.5 L1018.0 126.5 L1018.5 126.5 L1019.0 126.5 L1019.5 126.5 L1020.0 126.5 L1020.5 126.5 L1021.0 126.5 L1021.5 126.5 L1022.0 126.5 L1022.5 126.5 L1023.0 126.5 L1023.5 126.5 L1024.0 126.5 L1024.0 128.1 L1023.5 128.1 L1023.0 128.1 L1022.5 128.1 L1022.0 128.1 L1021.5 128.1 L1021.0 128.1 L1020.5 128.1 L1020.0 128.1 L1019.5 128.1 L1019.0 128.1 L1018.5 128.1 L1018.0 128.1 L1017.5 128.1 L1017.0 128.1 L1016.5 128.1 L1016.0 128.1 L1015.5 128.1 L1015.0 128.1 L1014.5 128.1 L1014.0 128.1 L1013.5 128.1 L1013.0 128.1 L1012.5 128.1 L1012.0 128.1 L1011.5 128.1 L1011.0 128.1 L1010.5 128.1 L1010.0 128.1 L1009.5 128.1 L1009.0 128.1 L1008.5 128.1 L1008.0 128.1 L1007.5 128.1 L1007.0 128.1 L1006.5 128.1 L1006.0 128.1 L1005.5 128.1 L1005.0 128.1 L1004.5 128.1 L1004.0 128.1 L1003.5 128.1 L1003.0 128.1 L1002.5 128.1 L1002.0 128.1 L1001.5 128.1 L1001.0 128.1 L1000.5 128.1 L1000.0 128.1 L999.5 128.1 L999.0 128.1 L998.5 128.1 L998.0 128.1 L997.5 128.1 L997.0 128.1 L996.5 128.1 L996.0 128.1 L995.5 128.1 L995.0 128.1 L994.5 128.1 L994.0 128.1 L993.5 128.1 L993.0 128.1 L992.5 128.1 L992.0 128.1 L991.5 128.1 L991.0 128.1 L990.5 128.1 L990.0 128.1 L989.5 128.1 L989.0 128.1 L988.5 128.1 L988.0 128.1 L987.5 128.1 L987.0 128.1 L986.5 128.1 L986.0 128.1 L985.5 128.1 L985.0 128.1 L984.5 128.1 L984.0 128.1 L983.5 128.1 L983.0 128.1 L982.5 128.1 L982.0 128.1 L981.5 128.1 L981.0 128.1 L980.5 128.1 L980.0 128.1 L979.5 128.1 L979.0 128.1 L978.5 128.1 L978.0 128.1 L977.5 128.1 L977.0 128.1 L976.5 128.1 L976.0 128.1 L975.5 128.1 L975.0 128.1 L974.5 128.1 L974.0 128.1 L973.5 128.1 L973.0 128.1 L972.5 128.1 L972.0 128.1 L971.5 128.1 L971.0 128.1 L970.5 128.1 L970.0 128.1 L969.5 128.1 L969.0 128.1 L968.5 128.1 L968.0 128.1 L967.5 128.1 L967.0 128.1 L966.5 128.1 L966.0 128.1 L965.5 128.1 L965.0 128.1 L964.5 128.1 L964.0 128.1 L963.5 128.1 L963.0 128.2 L962.5 128.2 L962.0 128.2 L961.5 128.2 L961.0 128.2 L960.5 128.2 L960.0 128.2 L959.5 128.2 L959.0 128.2 L958.5 128.2 L958.0 128.2 L957.5 128.2 L957.0 128.2 L956.5 128.2 L956.0 128.2 L955.5 128.2 L955.0 128.2 L954.5 128.2 L954.0 128.2 L953.5 128.2 L953.0 128.2 L952.5 128.2 L952.0 128.2 L951.5 128.2 L951.0 128.2 L950.5 128.2 L950.0 128.2 L949.5 128.2 L949.0 128.2 L948.5 128.2 L948.0 128.2 L947.5 128.2 L947.0 128.2 L946.5 128.2 L946.0 128.2 L945.5 128.2 L945.0 128.2 L944.5 128.2 L944.0 128.2 L943.5 128.2 L943.0 128.2 L942.5 128.2 L942.0 128.2 L941.5 128.2 L941.0 128.2 L940.5 128.2 L940.0 128.2 L939.5 128.2 L939.0 128.2 L938.5 128.2 L938.0 128.2 L937.5 128.2 L937.0 128.2 L936.5 128.2 L936.0 128.2 L935.5 128.2 L935.0 128.2 L934.5 128.2 L934.0 128.2 L933.5 128.2 L933.0 128.2 L932.5 128.2 L932.0 128.2 L931.5 128.2 L931.0 128.2 L930.5 128.2 L930.0 128.2 L929.5 128.2 L929.0 128.2 L928.5 128.2 L928.0 128.2 L927.5 128.2 L927.0 128.2 L926.5 128.2 L926.0 128.2 L925.5 128.2 L925.0 128.2 L924.5 128.2 L924.0 128.2 L923.5 128.2 L923.0 128.2 L922.5 128.2 L922.0 128.2 L921.5 128.2 L921.0 128.2 L920.5 128.2 L920.0 128.2 L919.5 128.2 L919.0 128.2 L918.5 128.2 L918.0 128.2 L917.5 128.2 L917.0 128.2 L916.5 128.2 L916.0 128.2 L915.5 128.2 L915.0 128.2 L914.5 128.2 L914.0 128.2 L913.5 128.2 L913.0 128.2 L912.5 128.2 L912.0 128.2 L911.5 128.2 L911.0 128.2 L910.5 128.2 L910.0 128.2 L909.5 128.2 L909.0 128.2 L908.5 128.2 L908.0 128.2 L907.5 128.2 L907.0 128.2 L906.5 128.2 L906.0 128.2 L905.5 128.2 L905.0 128.2 L904.5 128.2 L904.0 128.2 L903.5 128.2 L903.0 128.2 L902.5 128.2 L902.0 128.2 L901.5 128.2 L901.0 128.2 L900.5 128.2 L900.0 128.2 L899.5 128.2 L899.0 128.2 L898.5 128.2 L898.0 128.2 L897.5 128.2 L897.0 128.2 L896.5 128.2 L896.0 128.2 L895.5 128.2 L895.0 128.2 L894.5 128.2 L894.0 128.2 L893.5 128.2 L893.0 128.2 L892.5 128.2 L892.0 128.2 L891.5 128.2 L891.0 128.2 L890.5 128.2 L890.0 128.2 L889.5 128.2 L889.0 128.2 L888.5 128.2 L888.0 128.2 L887.5 128.2 L887.0 128.2 L886.5 128.2 L886.0 128.2 L885.5 128.2 L885.0 128.2 L884.5 128.2 L884.0 128.2 L883.5 128.2 L883.0 128.2 L882.5 128.2 L882.0 128.2 L881.5 128.2 L881.0 128.2 L880.5 128.2 L880.0 128.2 L879.5 128.2 L879.0 128.2 L878.5 128.2 L878.0 128.2 L877.5 128.2 L877.0 128.2 L876.5 128.2 L876.0 128.2 L875.5 128.2 L875.0 128.2 L874.5 128.2 L874.0 128.2 L873.5 128.2 L873.0 128.2 L872.5 128.2 L872.0 128.2 L871.5 128.2 L871.0 128.2 L870.5 128.2 L870.0 128.2 L869.5 128.2 L869.0 128.2 L868.5 128.2 L868.0 128.2 L867.5 128.2 L867.0 128.2 L866.5 128.2 L866.0 128.2 L865.5 128.2 L865.0 128.2 L864.5 128.2 L864.0 128.2 L863.5 128.2 L863.0 128.2 L862.5 128.2 L862.0 128.2 L861.5 128.2 L861.0 128.2 L860.5 128.2 L860.0 128.2 L859.5 128.2 L859.0 128.2 L858.5 128.2 L858.0 128.2 L857.5 128.2 L857.0 128.2 L856.5 128.2 L856.0 128.2 L855.5 128.2 L855.0 128.2 L854.5 128.2 L854.0 128.2 L853.5 128.2 L853.0 128.2 L852.5 128.2 L852.0 128.2 L851.5 128.2 L851.0 128.2 L850.5 128.2 L850.0 128.2 L849.5 128.2 L849.0 128.2 L848.5 128.2 L848.0 128.2 L847.5 128.2 L847.0 128.2 L846.5 128.2 L846.0 128.2 L845.5 128.2 L845.0 128.2 L844.5 128.2 L844.0 128.2 L843.5 128.2 L843.0 128.2 L842.5 128.2 L842.0 128.2 L841.5 128.2 L841.0 128.3 L840.5 128.3 L840.0 128.3 L839.5 128.3 L839.0 128.3 L838.5 128.3 L838.0 128.3 L837.5 128.3 L837.0 128.3 L836.5 128.3 L836.0 128.3 L835.5 128.3 L835.0 128.3 L834.5 128.3 L834.0 128.3 L833.5 128.3 L833.0 128.3 L832.5 128.3 L832.0 128.3 L831.5 128.3 L831.0 128.3 L830.5 128.3 L830.0 128.3 L829.5 128.3 L829.0 128.3 L828.5 128.3 L828.0 128.3 L827.5 128.3 L827.0 128.3 L826.5 128.3 L826.0 128.3 L825.5 128.3 L825.0 128.3 L824.5 128.3 L824.0 128.3 L823.5 128.3 L823.0 128.3 L822.5 128.3 L822.0 128.3 L821.5 128.3 L821.0 128.3 L820.5 128.3 L820.0 128.3 L819.5 128.3 L819.0 128.3 L818.5 128.3 L818.0 128.3 L817.5 128.3 L817.0 128.3 L816.5 128.3 L816.0 128.3 L815.5 128.3 L815.0 128.3 L814.5 128.3 L814.0 128.3 L813.5 128.3 L813.0 128.3 L812.5 128.3 L812.0 128.3 L811.5 128.3 L811.0 128.3 L810.5 128.3 L810.0 128.3 L809.5 128.3 L809.0 128.3 L808.5 128.3 L808.0 128.3 L807.5 128.3 L807.0 128.3 L806.5 128.3 L806.0 128.3 L805.5 128.3 L805.0 128.3 L804.5 128.3 L804.0 128.3 L803.5 128.3 L803.0 128.3 L802.5 128.3 L802.0 128.3 L801.5 128.3 L801.0 128.3 L800.5 128.3 L800.0 128.3 L799.5 128.3 L799.0 128.3 L798.5 128.3 L798.0 128.3 L797.5 128.3 L797.0 128.3 L796.5 128.3 L796.0 128.3 L795.5 128.3 L795.0 128.3 L794.5 128.3 L794.0 128.3 L793.5 128.3 L793.0 128.3 L792.5 128.3 L792.0 128.3 L791.5 128.3 L791.0 128.3 L790.5 128.3 L790.0 128.3 L789.5 128.3 L789.0 128.3 L788.5 128.3 L788.0 128.3 L787.5 128.3 L787.0 128.3 L786.5 128.3 L786.0 128.3 L785.5 128.3 L785.0 128.3 L784.5 128.3 L784.0 128.3 L783.5 128.3 L783.0 128.3 L782.5 128.3 L782.0 128.3 L781.5 128.3 L781.0 128.3 L780.5 128.3 L780.0 129.0 L779.5 130.3 L779.0 131.5 L778.5 132.8 L778.0 134.0 L777.5 135.1 L777.0 136.2 L776.5 138.0 L776.0 140.9 L775.5 143.8 L775.0 145.7 L774.5 146.2 L774.0 146.7 L773.5 147.2 L773.0 148.1 L772.5 149.6 L772.0 151.2 L771.5 152.7 L771.0 153.1 L770.5 152.8 L770.0 152.4 L769.5 152.1 L769.0 151.8 L768.5 151.5 L768.0 151.2 L767.5 151.0 L767.0 150.8 L766.5 150.6 L766.0 150.4 L765.5 149.1 L765.0 147.4 L764.5 145.8 L764.0 144.1 L763.5 145.2 L763.0 146.4 L762.5 147.5 L762.0 145.5 L761.5 143.6 L761.0 141.6 L760.5 143.7 L760.0 145.7 L759.5 147.8 L759.0 149.5 L758.5 150.1 L758.0 150.7 L757.5 151.3 L757.0 152.0 L756.5 152.7 L756.0 153.5 L755.5 154.3 L755.0 154.2 L754.5 152.6 L754.0 151.0 L753.5 149.4 L753.0 149.1 L752.5 150.8 L752.0 152.4 L751.5 154.1 L751.0 154.4 L750.5 153.7 L750.0 153.0 L749.5 152.4 L749.0 151.7 L748.5 150.3 L748.0 148.5 L747.5 146.7 L747.0 144.9 L746.5 144.2 L746.0 143.8 L745.5 143.4 L745.0 143.1 L744.5 142.7 L744.0 144.1 L743.5 145.9 L743.0 147.7 L742.5 149.6 L742.0 151.4 L741.5 150.7 L741.0 149.9 L740.5 149.2 L740.0 148.4 L739.5 144.9 L739.0 141.5 L738.5 138.7 L738.0 138.9 L737.5 139.1 L737.0 139.3 L736.5 139.5 L736.0 140.4 L735.5 144.0 L735.0 147.6 L734.5 151.2 L734.0 153.8 L733.5 155.0 L733.0 156.2 L732.5 157.5 L732.0 158.6 L731.5 159.6 L731.0 160.6 L730.5 161.7 L730.0 162.7 L729.5 164.7 L729.0 167.3 L728.5 173.4 L728.0 175.5 L727.5 175.0 L727.0 167.3 L726.5 162.1 L726.0 156.8 L725.5 156.3 L725.0 156.9 L724.5 157.5 L724.0 158.1 L723.5 157.1 L723.0 155.6 L722.5 154.2 L722.0 152.8 L721.5 154.2 L721.0 155.5 L720.5 156.8 L720.0 158.2 L719.5 157.3 L719.0 156.4 L718.5 155.5 L718.0 155.2 L717.5 157.0 L717.0 158.8 L716.5 160.6 L716.0 162.4 L715.5 164.0 L715.0 165.5 L714.5 167.1 L714.0 167.6 L713.5 166.6 L713.0 165.7 L712.5 164.7 L712.0 163.7 L711.5 162.7 L711.0 161.6 L710.5 160.6 L710.0 159.6 L709.5 158.3 L709.0 156.8 L708.5 155.4 L708.0 153.9 L707.5 154.1 L707.0 155.4 L706.5 156.7 L706.0 157.9 L705.5 156.7 L705.0 154.7 L704.5 152.8 L704.0 152.6 L703.5 152.8 L703.0 153.0 L702.5 150.6 L702.0 150.8 L701.5 148.7 L701.0 148.9 L700.5 152.3 L700.0 152.5 L699.5 152.2 L699.0 152.4 L698.5 154.0 L698.0 154.3 L697.5 157.7 L697.0 158.2 L696.5 156.4 L696.0 156.9 L695.5 156.6 L695.0 157.1 L694.5 156.4 L694.0 156.9 L693.5 159.8 L693.0 160.3 L692.5 157.9 L692.0 158.4 L691.5 153.7 L691.0 153.1 L690.5 160.9 L690.0 160.2 L689.5 156.5 L689.0 155.8 L688.5 156.1 L688.0 155.4 L687.5 157.5 L687.0 156.8 L686.5 154.6 L686.0 153.9 L685.5 153.1 L685.0 153.7 L684.5 154.8 L684.0 155.5 L683.5 151.7 L683.0 152.2 L682.5 157.3 L682.0 157.9 L681.5 159.6 L681.0 160.3 L680.5 158.0 L680.0 158.6 L679.5 158.6 L679.0 158.1 L678.5 161.0 L678.0 160.5 L677.5 157.6 L677.0 157.1 L676.5 155.8 L676.0 155.3 L675.5 160.4 L675.0 162.1 L674.5 155.1 L674.0 182.0 L673.5 194.3 L673.0 198.0 L672.5 197.5 L672.0 197.0 L671.5 196.1 L671.0 195.1 L670.5 194.1 L670.0 190.9 L669.5 186.3 L669.0 183.6 L668.5 183.9 L668.0 185.6 L667.5 189.5 L667.0 192.6 L666.5 192.5 L666.0 192.3 L665.5 192.2 L665.0 192.1 L664.5 190.7 L664.0 189.3 L663.5 187.9 L663.0 186.1 L662.5 184.1 L662.0 182.0 L661.5 181.4 L661.0 183.0 L660.5 185.1 L660.0 187.8 L659.5 190.5 L659.0 192.9 L658.5 194.1 L658.0 195.4 L657.5 196.6 L657.0 194.7 L656.5 192.0 L656.0 193.1 L655.5 195.2 L655.0 197.2 L654.5 200.6 L654.0 205.0 L653.5 207.6 L653.0 207.6 L652.5 207.6 L652.0 206.5 L651.5 200.9 L651.0 195.3 L650.5 178.6 L650.0 160.8 L649.5 157.9 L649.0 157.0 L648.5 158.9 L648.0 158.0 L647.5 156.5 L647.0 156.7 L646.5 159.1 L646.0 159.3 L645.5 155.6 L645.0 155.7 L644.5 155.7 L644.0 155.8 L643.5 156.7 L643.0 156.8 L642.5 154.4 L642.0 154.5 L641.5 157.9 L641.0 156.9 L640.5 157.8 L640.0 156.7 L639.5 155.5 L639.0 154.5 L638.5 149.6 L638.0 148.8 L637.5 150.7 L637.0 149.6 L636.5 149.9 L636.0 148.9 L635.5 149.7 L635.0 150.9 L634.5 151.9 L634.0 153.1 L633.5 151.9 L633.0 153.0 L632.5 155.1 L632.0 156.2 L631.5 156.4 L631.0 157.5 L630.5 157.5 L630.0 158.5 L629.5 160.7 L629.0 160.2 L628.5 159.3 L628.0 158.8 L627.5 159.9 L627.0 159.3 L626.5 160.2 L626.0 159.7 L625.5 157.8 L625.0 157.3 L624.5 157.8 L624.0 157.3 L623.5 154.3 L623.0 153.0 L622.5 151.8 L622.0 150.5 L621.5 147.4 L621.0 146.1 L620.5 144.7 L620.0 143.4 L619.5 142.7 L619.0 141.4 L618.5 141.2 L618.0 139.8 L617.5 139.7 L617.0 141.1 L616.5 144.3 L616.0 145.9 L615.5 148.2 L615.0 149.8 L614.5 151.7 L614.0 153.4 L613.5 155.1 L613.0 156.7 L612.5 155.7 L612.0 157.2 L611.5 155.3 L611.0 154.3 L610.5 156.6 L610.0 155.5 L609.5 150.7 L609.0 149.8 L608.5 150.5 L608.0 149.5 L607.5 147.7 L607.0 146.7 L606.5 145.2 L606.0 144.2 L605.5 141.3 L605.0 140.1 L604.5 142.0 L604.0 140.6 L603.5 137.9 L603.0 136.6 L602.5 135.7 L602.0 134.4 L601.5 133.0 L601.0 132.0 L600.5 130.6 L600.0 129.3 L599.5 129.3 L599.0 129.3 L598.5 129.3 L598.0 129.3 L597.5 129.3 L597.0 129.3 L596.5 129.3 L596.0 129.3 L595.5 129.3 L595.0 129.3 L594.5 129.3 L594.0 129.3 L593.5 129.3 L593.0 129.3 L592.5 129.3 L592.0 129.3 L591.5 129.3 L591.0 129.3 L590.5 129.3 L590.0 129.3 L589.5 129.3 L589.0 129.3 L588.5 129.3 L588.0 129.3 L587.5 129.3 L587.0 129.3 L586.5 129.3 L586.0 129.3 L585.5 129.3 L585.0 129.3 L584.5 129.3 L584.0 129.3 L583.5 129.3 L583.0 129.3 L582.5 129.3 L582.0 129.3 L581.5 129.3 L581.0 129.3 L580.5 129.3 L580.0 129.3 L579.5 129.3 L579.0 129.3 L578.5 129.3 L578.0 129.3 L577.5 129.3 L577.0 129.3 L576.5 129.3 L576.0 129.3 L575.5 129.3 L575.0 129.3 L574.5 129.3 L574.0 129.3 L573.5 129.3 L573.0 129.3 L572.5 129.3 L572.0 129.3 L571.5 129.3 L571.0 129.3 L570.5 129.3 L570.0 129.3 L569.5 129.3 L569.0 129.3 L568.5 129.3 L568.0 129.3 L567.5 129.3 L567.0 129.3 L566.5 129.3 L566.0 129.3 L565.5 129.3 L565.0 129.3 L564.5 129.3 L564.0 129.3 L563.5 129.3 L563.0 129.3 L562.5 129.3 L562.0 129.3 L561.5 129.8 L561.0 130.3 L560.5 130.8 L560.0 131.3 L559.5 131.8 L559.0 132.3 L558.5 132.8 L558.0 132.7 L557.5 133.5 L557.0 134.0 L556.5 134.4 L556.0 134.9 L555.5 137.3 L555.0 139.2 L554.5 139.7 L554.0 141.4 L553.5 145.0 L553.0 146.9 L552.5 146.8 L552.0 148.5 L551.5 151.2 L551.0 153.0 L550.5 153.9 L550.0 155.6 L549.5 158.4 L549.0 157.6 L548.5 153.9 L548.0 153.1 L547.5 150.1 L547.0 149.4 L546.5 149.8 L546.0 149.0 L545.5 149.6 L545.0 148.7 L544.5 145.7 L544.0 144.9 L543.5 150.1 L543.0 152.2 L542.5 153.4 L542.0 155.4 L541.5 156.4 L541.0 177.3 L540.5 177.3 L540.0 164.9 L539.5 161.3 L539.0 161.3 L538.5 163.0 L538.0 163.0 L537.5 160.2 L537.0 159.7 L536.5 162.3 L536.0 161.8 L535.5 155.1 L535.0 154.6 L534.5 157.5 L534.0 157.0 L533.5 158.8 L533.0 158.3 L532.5 156.8 L532.0 156.3 L531.5 155.8 L531.0 155.0 L530.5 156.5 L530.0 155.6 L529.5 153.7 L529.0 152.9 L528.5 147.1 L528.0 146.5 L527.5 151.5 L527.0 150.6 L526.5 146.6 L526.0 145.8 L525.5 146.2 L525.0 144.7 L524.5 141.9 L524.0 140.5 L523.5 139.0 L523.0 137.6 L522.5 136.8 L522.0 135.3 L521.5 132.9 L521.0 132.3 L520.5 130.8 L520.0 129.3 L519.5 129.3 L519.0 129.3 L518.5 129.3 L518.0 129.3 L517.5 129.3 L517.0 129.3 L516.5 129.3 L516.0 129.3 L515.5 129.3 L515.0 129.3 L514.5 129.3 L514.0 129.3 L513.5 129.3 L513.0 129.3 L512.5 129.3 L512.0 129.3 L511.5 129.3 L511.0 129.3 L510.5 129.3 L510.0 129.3 L509.5 129.3 L509.0 129.3 L508.5 129.3 L508.0 129.3 L507.5 129.3 L507.0 129.3 L506.5 129.3 L506.0 129.3 L505.5 129.3 L505.0 129.3 L504.5 129.3 L504.0 129.3 L503.5 129.3 L503.0 129.3 L502.5 129.3 L502.0 129.3 L501.5 129.3 L501.0 129.3 L500.5 129.3 L500.0 129.3 L499.5 129.3 L499.0 129.3 L498.5 129.3 L498.0 129.3 L497.5 129.3 L497.0 129.3 L496.5 129.3 L496.0 129.3 L495.5 129.3 L495.0 129.3 L494.5 129.3 L494.0 129.3 L493.5 129.3 L493.0 129.3 L492.5 129.3 L492.0 129.3 L491.5 129.3 L491.0 129.3 L490.5 129.3 L490.0 129.3 L489.5 129.6 L489.0 129.8 L488.5 130.1 L488.0 130.3 L487.5 130.6 L487.0 130.8 L486.5 131.1 L486.0 131.3 L485.5 131.6 L485.0 131.8 L484.5 132.1 L484.0 132.3 L483.5 132.6 L483.0 132.8 L482.5 133.1 L482.0 133.1 L481.5 135.2 L481.0 137.1 L480.5 138.9 L480.0 140.7 L479.5 142.3 L479.0 144.2 L478.5 146.8 L478.0 148.7 L477.5 145.8 L477.0 147.3 L476.5 154.2 L476.0 156.1 L475.5 155.6 L475.0 154.6 L474.5 151.7 L474.0 150.7 L473.5 151.1 L473.0 150.1 L472.5 149.7 L472.0 148.6 L471.5 145.3 L471.0 144.4 L470.5 140.9 L470.0 140.1 L469.5 144.0 L469.0 145.5 L468.5 148.9 L468.0 150.7 L467.5 150.7 L467.0 152.3 L466.5 153.8 L466.0 155.4 L465.5 160.5 L465.0 162.3 L464.5 162.3 L464.0 164.0 L463.5 163.7 L463.0 162.3 L462.5 157.1 L462.0 155.8 L461.5 155.8 L461.0 154.6 L460.5 152.3 L460.0 151.0 L459.5 150.9 L459.0 149.5 L458.5 148.7 L458.0 147.4 L457.5 149.4 L457.0 150.6 L456.5 149.9 L456.0 151.1 L455.5 151.1 L455.0 152.1 L454.5 156.7 L454.0 158.0 L453.5 157.5 L453.0 158.7 L452.5 157.9 L452.0 159.0 L451.5 162.6 L451.0 161.7 L450.5 157.5 L450.0 156.7 L449.5 151.6 L449.0 150.9 L448.5 156.3 L448.0 155.4 L447.5 152.4 L447.0 151.6 L446.5 153.5 L446.0 152.6 L445.5 147.7 L445.0 146.0 L444.5 147.4 L444.0 145.5 L443.5 143.2 L443.0 141.3 L442.5 138.3 L442.0 136.5 L441.5 134.4 L441.0 133.0 L440.5 131.1 L440.0 129.3 L439.5 129.3 L439.0 129.3 L438.5 129.3 L438.0 129.3 L437.5 129.3 L437.0 129.3 L436.5 129.3 L436.0 129.3 L435.5 129.3 L435.0 129.3 L434.5 129.3 L434.0 129.3 L433.5 129.3 L433.0 129.3 L432.5 129.3 L432.0 129.3 L431.5 129.3 L431.0 129.3 L430.5 129.3 L430.0 129.3 L429.5 129.3 L429.0 129.3 L428.5 129.3 L428.0 129.3 L427.5 129.3 L427.0 129.3 L426.5 129.3 L426.0 129.3 L425.5 129.3 L425.0 129.3 L424.5 129.3 L424.0 129.3 L423.5 129.3 L423.0 129.3 L422.5 129.3 L422.0 129.3 L421.5 129.3 L421.0 129.3 L420.5 129.3 L420.0 129.3 L419.5 129.6 L419.0 129.9 L418.5 130.2 L418.0 130.5 L417.5 130.8 L417.0 131.1 L416.5 131.4 L416.0 131.7 L415.5 132.0 L415.0 132.3 L414.5 132.6 L414.0 132.9 L413.5 133.2 L413.0 133.7 L412.5 133.6 L412.0 133.9 L411.5 134.8 L411.0 135.2 L410.5 135.6 L410.0 135.9 L409.5 136.3 L409.0 138.0 L408.5 141.8 L408.0 143.8 L407.5 142.2 L407.0 143.8 L406.5 149.5 L406.0 151.5 L405.5 150.4 L405.0 152.1 L404.5 157.2 L404.0 159.1 L403.5 157.3 L403.0 156.2 L402.5 153.8 L402.0 152.8 L401.5 150.5 L401.0 149.5 L400.5 149.2 L400.0 148.2 L399.5 147.9 L399.0 146.9 L398.5 143.0 L398.0 142.2 L397.5 146.2 L397.0 147.4 L396.5 148.1 L396.0 149.2 L395.5 152.1 L395.0 153.3 L394.5 149.6 L394.0 150.6 L393.5 153.6 L393.0 154.7 L392.5 155.5 L392.0 156.5 L391.5 158.1 L391.0 157.2 L390.5 156.8 L390.0 155.8 L389.5 154.7 L389.0 153.7 L388.5 153.6 L388.0 152.5 L387.5 150.9 L387.0 149.9 L386.5 145.6 L386.0 144.7 L385.5 146.1 L385.0 144.5 L384.5 141.7 L384.0 140.3 L383.5 139.0 L383.0 137.6 L382.5 136.2 L382.0 134.8 L381.5 133.2 L381.0 132.3 L380.5 130.8 L380.0 129.3 L379.5 129.3 L379.0 129.3 L378.5 129.3 L378.0 129.3 L377.5 129.3 L377.0 129.3 L376.5 129.3 L376.0 129.3 L375.5 129.3 L375.0 129.3 L374.5 129.3 L374.0 129.3 L373.5 129.3 L373.0 129.3 L372.5 129.3 L372.0 129.3 L371.5 129.3 L371.0 129.3 L370.5 129.3 L370.0 129.3 L369.5 129.3 L369.0 129.3 L368.5 129.3 L368.0 129.3 L367.5 129.3 L367.0 129.3 L366.5 129.3 L366.0 129.3 L365.5 129.3 L365.0 129.3 L364.5 129.3 L364.0 129.3 L363.5 129.3 L363.0 129.3 L362.5 129.3 L362.0 129.3 L361.5 130.0 L361.0 130.6 L360.5 131.3 L360.0 132.0 L359.5 132.6 L359.0 132.6 L358.5 133.9 L358.0 134.6 L357.5 135.4 L357.0 136.1 L356.5 136.4 L356.0 137.0 L355.5 138.0 L355.0 139.5 L354.5 143.5 L354.0 145.3 L353.5 145.1 L353.0 146.7 L352.5 148.4 L352.0 150.0 L351.5 152.9 L351.0 154.6 L350.5 153.7 L350.0 155.3 L349.5 158.6 L349.0 157.9 L348.5 152.9 L348.0 152.3 L347.5 148.9 L347.0 148.4 L346.5 153.8 L346.0 153.1 L345.5 149.6 L345.0 148.9 L344.5 150.2 L344.0 149.5 L343.5 152.4 L343.0 153.7 L342.5 153.4 L342.0 154.6 L341.5 153.6 L341.0 154.7 L340.5 156.1 L340.0 157.3 L339.5 159.6 L339.0 160.7 L338.5 154.9 L338.0 155.9 L337.5 162.2 L337.0 161.7 L336.5 159.9 L336.0 159.4 L335.5 161.9 L335.0 161.4 L334.5 161.3 L334.0 160.8 L333.5 161.6 L333.0 161.1 L332.5 155.3 L332.0 154.8 L331.5 159.2 L331.0 159.5 L330.5 155.6 L330.0 155.8 L329.5 156.2 L329.0 156.4 L328.5 157.8 L328.0 158.0 L327.5 160.5 L327.0 160.8 L326.5 159.6 L326.0 159.9 L325.5 160.2 L325.0 160.4 L324.5 179.7 L324.0 185.8 L323.5 185.8 L323.0 162.2 L322.5 162.4 L322.0 162.4 L321.5 162.8 L321.0 162.8 L320.5 163.4 L320.0 178.3 L319.5 178.3 L319.0 172.6 L318.5 160.5 L318.0 160.5 L317.5 159.8 L317.0 159.8 L316.5 163.5 L316.0 163.5 L315.5 163.7 L315.0 163.7 L314.5 159.8 L314.0 159.8 L313.5 159.1 L313.0 159.1 L312.5 162.2 L312.0 162.2 L311.5 167.1 L311.0 173.8 L310.5 173.8 L310.0 168.6 L309.5 160.9 L309.0 160.9 L308.5 162.0 L308.0 162.0 L307.5 162.4 L307.0 162.4 L306.5 165.8 L306.0 165.8 L305.5 161.8 L305.0 161.8 L304.5 162.0 L304.0 162.0 L303.5 164.0 L303.0 162.8 L302.5 162.4 L302.0 161.2 L301.5 160.1 L301.0 158.8 L300.5 156.5 L300.0 155.3 L299.5 154.2 L299.0 152.9 L298.5 150.7 L298.0 149.5 L297.5 149.7 L297.0 150.6 L296.5 152.7 L296.0 153.5 L295.5 155.1 L295.0 156.0 L294.5 152.7 L294.0 153.4 L293.5 158.3 L293.0 159.2 L292.5 157.5 L292.0 158.3 L291.5 160.0 L291.0 158.6 L290.5 151.5 L290.0 150.3 L289.5 152.5 L289.0 151.2 L288.5 151.3 L288.0 149.9 L287.5 146.5 L287.0 145.2 L286.5 143.3 L286.0 142.1 L285.5 145.2 L285.0 147.1 L284.5 149.5 L284.0 151.4 L283.5 148.9 L283.0 150.5 L282.5 151.2 L282.0 152.7 L281.5 158.8 L281.0 160.6 L280.5 164.7 L280.0 166.6 L279.5 166.3 L279.0 165.1 L278.5 163.9 L278.0 162.7 L277.5 154.7 L277.0 153.7 L276.5 157.7 L276.0 156.5 L275.5 155.7 L275.0 154.5 L274.5 152.8 L274.0 151.6 L273.5 154.2 L273.0 155.8 L272.5 154.9 L272.0 156.3 L271.5 157.6 L271.0 159.1 L270.5 158.6 L270.0 159.9 L269.5 158.3 L269.0 159.6 L268.5 167.8 L268.0 169.3 L267.5 168.3 L267.0 167.3 L266.5 166.9 L266.0 165.9 L265.5 163.8 L265.0 162.8 L264.5 155.7 L264.0 154.9 L263.5 156.0 L263.0 155.2 L262.5 155.5 L262.0 154.6 L261.5 156.0 L261.0 156.5 L260.5 160.7 L260.0 161.2 L259.5 162.2 L259.0 162.7 L258.5 153.8 L258.0 154.2 L257.5 159.5 L257.0 159.9 L256.5 157.0 L256.0 157.4 L255.5 156.0 L255.0 155.1 L254.5 162.4 L254.0 161.1 L253.5 156.2 L253.0 155.1 L252.5 156.5 L252.0 155.3 L251.5 152.6 L251.0 151.4 L250.5 150.3 L250.0 149.1 L249.5 144.5 L249.0 142.3 L248.5 141.0 L248.0 138.6 L247.5 136.3 L247.0 133.9 L246.5 131.8 L246.0 129.3 L245.5 129.3 L245.0 129.3 L244.5 129.3 L244.0 129.3 L243.5 129.3 L243.0 129.3 L242.5 129.3 L242.0 129.3 L241.5 129.3 L241.0 129.3 L240.5 129.3 L240.0 129.3 L239.5 129.3 L239.0 129.3 L238.5 129.3 L238.0 129.3 L237.5 130.0 L237.0 130.6 L236.5 131.3 L236.0 132.0 L235.5 132.6 L235.0 133.1 L234.5 134.2 L234.0 134.9 L233.5 135.0 L233.0 135.6 L232.5 135.9 L232.0 136.6 L231.5 138.7 L231.0 140.4 L230.5 144.0 L230.0 145.9 L229.5 148.1 L229.0 150.1 L228.5 150.4 L228.0 152.2 L227.5 154.0 L227.0 155.8 L226.5 158.9 L226.0 160.8 L225.5 158.7 L225.0 157.7 L224.5 150.7 L224.0 149.9 L223.5 152.9 L223.0 151.9 L222.5 151.8 L222.0 150.8 L221.5 151.3 L221.0 150.3 L220.5 148.0 L220.0 147.0 L219.5 149.7 L219.0 151.7 L218.5 155.6 L218.0 157.8 L217.5 156.3 L217.0 158.2 L216.5 159.7 L216.0 161.6 L215.5 160.0 L215.0 159.3 L214.5 163.9 L214.0 163.1 L213.5 162.4 L213.0 161.6 L212.5 154.8 L212.0 154.1 L211.5 153.8 L211.0 151.9 L210.5 146.6 L210.0 145.0 L209.5 146.4 L209.0 144.5 L208.5 143.5 L208.0 141.4 L207.5 144.2 L207.0 146.8 L206.5 150.1 L206.0 152.8 L205.5 153.5 L205.0 156.0 L204.5 157.0 L204.0 159.4 L203.5 157.9 L203.0 157.2 L202.5 157.4 L202.0 156.7 L201.5 160.2 L201.0 159.3 L200.5 157.4 L200.0 156.6 L199.5 158.0 L199.0 157.3 L198.5 158.3 L198.0 159.3 L197.5 159.2 L197.0 159.1 L196.5 159.0 L196.0 158.9 L195.5 158.8 L195.0 158.7 L194.5 158.6 L194.0 158.5 L193.5 158.4 L193.0 158.3 L192.5 157.9 L192.0 157.5 L191.5 152.8 L191.0 145.3 L190.5 152.3 L190.0 159.3 L189.5 159.3 L189.0 159.3 L188.5 159.3 L188.0 159.3 L187.5 159.3 L187.0 159.3 L186.5 159.3 L186.0 159.3 L185.5 153.6 L185.0 138.1 L184.5 129.3 L184.0 129.3 L183.5 129.3 L183.0 129.3 L182.5 129.3 L182.0 129.3 L181.5 129.3 L181.0 129.3 L180.5 129.3 L180.0 129.3 L179.5 129.3 L179.0 150.7 L178.5 159.3 L178.0 159.3 L177.5 159.3 L177.0 159.3 L176.5 159.3 L176.0 159.3 L175.5 159.3 L175.0 159.3 L174.5 159.3 L174.0 159.3 L173.5 159.3 L173.0 154.3 L172.5 141.3 L172.0 129.3 L171.5 129.3 L171.0 129.3 L170.5 129.3 L170.0 129.3 L169.5 140.1 L169.0 151.8 L168.5 159.3 L168.0 159.3 L167.5 159.3 L167.0 159.3 L166.5 159.3 L166.0 159.3 L165.5 159.3 L165.0 159.3 L164.5 159.3 L164.0 159.3 L163.5 158.7 L163.0 158.0 L162.5 157.4 L162.0 150.6 L161.5 151.3 L161.0 155.8 L160.5 157.0 L160.0 158.3 L159.5 158.0 L159.0 157.8 L158.5 157.5 L158.0 163.6 L157.5 176.3 L157.0 163.6 L156.5 130.3 L156.0 130.6 L155.5 130.8 L155.0 131.0 L154.5 131.2 L154.0 131.4 L153.5 131.6 L153.0 131.9 L152.5 132.1 L152.0 132.3 L151.5 132.2 L151.0 132.1 L150.5 131.9 L150.0 131.8 L149.5 131.7 L149.0 131.6 L148.5 131.4 L148.0 131.3 L147.5 131.7 L147.0 132.1 L146.5 132.5 L146.0 132.9 L145.5 133.3 L145.0 134.8 L144.5 136.4 L144.0 137.9 L143.5 141.4 L143.0 146.1 L142.5 150.9 L142.0 155.7 L141.5 160.5 L141.0 165.3 L140.5 170.1 L140.0 174.9 L139.5 179.7 L139.0 183.9 L138.5 187.9 L138.0 190.7 L137.5 192.1 L137.0 192.5 L136.5 192.9 L136.0 193.3 L135.5 195.6 L135.0 197.9 L134.5 199.6 L134.0 200.3 L133.5 194.5 L133.0 187.3 L132.5 179.8 L132.0 172.3 L131.5 166.0 L131.0 160.4 L130.5 158.2 L130.0 156.8 L129.5 155.4 L129.0 154.0 L128.5 152.8 L128.0 151.5 L127.5 150.3 L127.0 151.6 L126.5 153.0 L126.0 154.3 L125.5 153.4 L125.0 152.5 L124.5 155.1 L124.0 158.5 L123.5 161.9 L123.0 165.1 L122.5 166.1 L122.0 158.2 L121.5 150.3 L121.0 142.5 L120.5 131.8 L120.0 129.4 L119.5 129.5 L119.0 129.6 L118.5 129.7 L118.0 129.8 L117.5 129.9 L117.0 130.0 L116.5 130.1 L116.0 130.3 L115.5 137.8 L115.0 146.2 L114.5 148.4 L114.0 149.9 L113.5 151.3 L113.0 182.3 L112.5 208.7 L112.0 222.8 L111.5 228.6 L111.0 229.8 L110.5 229.8 L110.0 228.6 L109.5 226.1 L109.0 225.2 L108.5 224.3 L108.0 225.3 L107.5 226.3 L107.0 226.8 L106.5 227.2 L106.0 227.6 L105.5 228.0 L105.0 228.3 L104.5 228.7 L104.0 229.1 L103.5 229.4 L103.0 229.8 L102.5 229.2 L102.0 226.3 L101.5 226.3 L101.0 226.3 L100.5 226.3 L100.0 226.3 L99.5 226.9 L99.0 227.6 L98.5 228.2 L98.0 228.7 L97.5 229.1 L97.0 229.6 L96.5 229.8 L96.0 229.8 L95.5 227.3 L95.0 224.8 L94.5 224.3 L94.0 224.3 L93.5 224.3 L93.0 224.3 L92.5 224.5 L92.0 225.5 L91.5 226.7 L91.0 228.9 L90.5 229.8 L90.0 229.8 L89.5 229.8 L89.0 224.8 L88.5 212.3 L88.0 198.4 L87.5 182.3 L87.0 157.3 L86.5 129.3 L86.0 128.1 L85.5 128.1 L85.0 128.1 L84.5 128.1 L84.0 128.1 L83.5 128.1 L83.0 128.1 L82.5 128.1 L82.0 128.1 L81.5 128.1 L81.0 128.1 L80.5 128.1 L80.0 128.1 L79.5 128.1 L79.0 128.1 L78.5 128.1 L78.0 128.1 L77.5 128.1 L77.0 128.1 L76.5 128.1 L76.0 128.1 L75.5 128.1 L75.0 128.1 L74.5 128.1 L74.0 128.1 L73.5 128.1 L73.0 128.1 L72.5 128.1 L72.0 128.1 L71.5 128.1 L71.0 128.1 L70.5 128.1 L70.0 128.1 L69.5 128.1 L69.0 128.1 L68.5 128.1 L68.0 128.1 L67.5 128.1 L67.0 128.1 L66.5 128.1 L66.0 128.1 L65.5 128.1 L65.0 128.1 L64.5 128.1 L64.0 128.1 L63.5 128.1 L63.0 128.1 L62.5 128.1 L62.0 128.1 L61.5 128.1 L61.0 128.1 L60.5 128.1 L60.0 128.1 L59.5 128.1 L59.0 128.1 L58.5 128.1 L58.0 128.1 L57.5 128.1 L57.0 128.1 L56.5 128.1 L56.0 128.1 L55.5 128.1 L55.0 128.1 L54.5 128.1 L54.0 128.1 L53.5 128.1 L53.0 128.1 L52.5 128.1 L52.0 128.1 L51.5 128.1 L51.0 128.1 L50.5 128.1 L50.0 128.1 L49.5 128.1 L49.0 128.1 L48.5 128.1 L48.0 128.1 L47.5 128.1 L47.0 128.1 L46.5 128.1 L46.0 128.1 L45.5 128.1 L45.0 128.1 L44.5 128.1 L44.0 128.1 L43.5 128.1 L43.0 128.1 L42.5 128.1 L42.0 128.1 L41.5 128.1 L41.0 128.1 L40.5 128.1 L40.0 128.1 L39.5 128.1 L39.0 128.1 L38.5 128.1 L38.0 128.1 L37.5 128.1 L37.0 128.1 L36.5 128.1 L36.0 128.1 L35.5 128.1 L35.0 128.1 L34.5 128.1 L34.0 128.1 L33.5 128.1 L33.0 128.1 L32.5 128.1 L32.0 128.1 L31.5 128.1 L31.0 128.1 L30.5 128.1 L30.0 128.1 L29.5 128.1 L29.0 128.1 L28.5 128.1 L28.0 128.1 L27.5 128.1 L27.0 128.1 L26.5 128.1 L26.0 128.1 L25.5 128.1 L25.0 128.1 L24.5 128.1 L24.0 128.1 L23.5 128.1 L23.0 128.1 L22.5 128.1 L22.0 128.1 L21.5 128.1 L21.0 128.1 L20.5 128.1 L20.0 128.1 L19.5 128.1 L19.0 128.1 L18.5 128.1 L18.0 128.1 L17.5 128.1 L17.0 128.1 L16.5 128.1 L16.0 128.1 L15.5 128.1 L15.0 128.1 L14.5 128.1 L14.0 128.1 L13.5 128.1 L13.0 128.1 L12.5 128.1 L12.0 128.1 L11.5 128.1 L11.0 128.1 L10.5 128.1 L10.0 128.1 L9.5 128.1 L9.0 128.1 L8.5 128.1 L8.0 128.1 L7.5 128.1 L7.0 128.1 L6.5 128.1 L6.0 128.1 L5.5 128.1 L5.0 128.1 L4.5 128.1 L4.0 128.1 L3.5 128.1 L3.0 128.1 L2.5 128.1 L2.0 128.1 L1.5 128.1 L1.0 128.1 L0.5 128.1 L0.0 128.1 Z" fill="#4fb1e4"/>
<rect x="-4" y="126.35" width="1000" height="1.2" fill="#4fb1e4"/>
<ellipse cx="14.6" cy="127.3" rx="1.5" ry="2.2" fill="#4fb1e4"/>
<ellipse cx="20.2" cy="127.3" rx="1.6" ry="2.6" fill="#4fb1e4"/>
<ellipse cx="30.3" cy="127.3" rx="1.5" ry="2.2" fill="#4fb1e4"/>
<ellipse cx="47.8" cy="127.3" rx="1.0" ry="1.4" fill="#4fb1e4"/>
<ellipse cx="800.0" cy="127.3" rx="0.9" ry="2.4" fill="#4fb1e4"/>
<ellipse cx="806.0" cy="127.3" rx="0.8" ry="1.6" fill="#4fb1e4"/>
<ellipse cx="811.5" cy="127.3" rx="1.6" ry="3.2" fill="#4fb1e4"/>
<ellipse cx="820.0" cy="127.3" rx="2.2" ry="4.2" fill="#4fb1e4"/>
<ellipse cx="840.7" cy="127.3" rx="2.1" ry="3.4" fill="#4fb1e4"/>
<ellipse cx="852.0" cy="127.3" rx="1.2" ry="1.2" fill="#4fb1e4"/>
<rect x="929.6" y="122.8" width="0.9" height="9" fill="#4fb1e4" opacity="0.8"/>
<polygon points="93.7,135.3 92.8,182.3 92.7,231.3 94.9,231.3 94.8,182.3" fill="#485963"/>
<polygon points="104.1,133.3 103.2,177.3 103.2,231.3 105.7,231.3 105.4,177.3" fill="#485963"/>
<polygon points="101.9,205.3 98.6,231.3 101.9,231.3" fill="#485963" opacity="0.65"/>
<polygon points="107.4,172.3 107,231.3 108.3,231.3 107.9,187.3" fill="#485963" opacity="0.8"/>
<rect x="102.2" y="184.3" width="0.8" height="46" fill="#8cc0de" opacity="0.8"/>
<rect x="106.1" y="178.3" width="0.6" height="52" fill="#8cc0de" opacity="0.7"/>
<rect x="93.2" y="64.3" width="0.6" height="72" fill="#485963" opacity="0.45"/>
<rect x="101.8" y="71.3" width="0.6" height="64" fill="#485963" opacity="0.45"/>
<path d="M781 124.3 L782.5 131.3 L786 132.3 L789 130.3 L791 126.3 L795 125.8" stroke="#9ccbe8" stroke-width="0.6" opacity="0.8" fill="none"/>
<path d="M114.5 128.3 L116 133.3 L117 124.3 L118.5 123.3 L119.5 130.3 L120.5 127.3" stroke="#9ccbe8" stroke-width="0.6" opacity="0.8" fill="none"/>
<path d="M146 128.3 L148.5 123.3 L150 132.3 L152 129.3 L154 125.3 L156 127.3" stroke="#9ccbe8" stroke-width="0.6" opacity="0.8" fill="none"/>
<path d="M0.0 350.8 L0.5 350.8 L1.0 350.8 L1.5 350.8 L2.0 350.8 L2.5 350.8 L3.0 350.8 L3.5 350.8 L4.0 350.8 L4.5 350.8 L5.0 350.8 L5.5 350.8 L6.0 350.8 L6.5 350.8 L7.0 350.8 L7.5 350.8 L8.0 350.8 L8.5 350.8 L9.0 350.8 L9.5 350.8 L10.0 350.8 L10.5 350.8 L11.0 350.8 L11.5 350.8 L12.0 350.8 L12.5 350.8 L13.0 350.8 L13.5 350.8 L14.0 350.8 L14.5 350.8 L15.0 350.8 L15.5 350.8 L16.0 350.8 L16.5 350.8 L17.0 350.8 L17.5 350.8 L18.0 350.8 L18.5 350.8 L19.0 350.8 L19.5 350.8 L20.0 350.8 L20.5 350.8 L21.0 350.8 L21.5 350.8 L22.0 350.8 L22.5 350.8 L23.0 350.8 L23.5 350.8 L24.0 350.8 L24.5 350.8 L25.0 350.8 L25.5 350.8 L26.0 350.8 L26.5 350.8 L27.0 350.8 L27.5 350.8 L28.0 350.8 L28.5 350.8 L29.0 350.8 L29.5 350.8 L30.0 350.8 L30.5 350.8 L31.0 350.8 L31.5 350.8 L32.0 350.8 L32.5 350.8 L33.0 350.8 L33.5 350.8 L34.0 350.8 L34.5 350.8 L35.0 350.8 L35.5 350.8 L36.0 350.8 L36.5 350.8 L37.0 350.8 L37.5 350.8 L38.0 350.8 L38.5 350.8 L39.0 350.8 L39.5 350.8 L40.0 350.8 L40.5 350.8 L41.0 350.8 L41.5 350.8 L42.0 350.8 L42.5 350.8 L43.0 350.8 L43.5 350.8 L44.0 350.8 L44.5 350.8 L45.0 350.8 L45.5 350.8 L46.0 350.8 L46.5 350.8 L47.0 350.8 L47.5 350.8 L48.0 350.8 L48.5 350.8 L49.0 350.8 L49.5 350.8 L50.0 350.8 L50.5 350.8 L51.0 350.8 L51.5 350.8 L52.0 350.8 L52.5 350.8 L53.0 350.8 L53.5 350.8 L54.0 350.8 L54.5 350.8 L55.0 350.8 L55.5 350.8 L56.0 350.8 L56.5 350.8 L57.0 350.8 L57.5 350.8 L58.0 350.8 L58.5 350.8 L59.0 350.8 L59.5 350.8 L60.0 350.8 L60.5 350.8 L61.0 350.8 L61.5 350.8 L62.0 350.8 L62.5 350.8 L63.0 350.8 L63.5 350.8 L64.0 350.8 L64.5 350.8 L65.0 350.8 L65.5 350.8 L66.0 350.8 L66.5 350.8 L67.0 350.8 L67.5 350.8 L68.0 350.8 L68.5 350.8 L69.0 350.8 L69.5 350.8 L70.0 350.8 L70.5 350.8 L71.0 350.8 L71.5 350.8 L72.0 350.8 L72.5 350.8 L73.0 350.8 L73.5 350.8 L74.0 350.8 L74.5 350.8 L75.0 350.8 L75.5 350.8 L76.0 350.8 L76.5 350.8 L77.0 350.8 L77.5 350.8 L78.0 350.8 L78.5 350.8 L79.0 350.8 L79.5 350.8 L80.0 350.8 L80.5 350.8 L81.0 350.8 L81.5 350.8 L82.0 350.8 L82.5 350.8 L83.0 350.8 L83.5 350.8 L84.0 350.8 L84.5 350.8 L85.0 350.8 L85.5 350.8 L86.0 350.8 L86.5 349.6 L87.0 330.6 L87.5 311.6 L88.0 295.7 L88.5 279.8 L89.0 266.6 L89.5 254.1 L90.0 249.2 L90.5 249.1 L91.0 249.1 L91.5 287.6 L92.0 287.6 L92.5 249.1 L93.0 249.1 L93.5 249.1 L94.0 251.3 L94.5 254.6 L95.0 256.9 L95.5 259.1 L96.0 260.4 L96.5 261.4 L97.0 262.4 L97.5 263.4 L98.0 264.0 L98.5 264.5 L99.0 265.0 L99.5 265.4 L100.0 295.6 L100.5 295.6 L101.0 295.6 L101.5 295.6 L102.0 295.6 L102.5 249.1 L103.0 249.1 L103.5 249.1 L104.0 249.1 L104.5 249.1 L105.0 249.1 L105.5 283.6 L106.0 283.6 L106.5 266.6 L107.0 263.1 L107.5 259.6 L108.0 258.7 L108.5 257.8 L109.0 256.9 L109.5 256.0 L110.0 254.5 L110.5 252.7 L111.0 250.1 L111.5 249.1 L112.0 249.1 L112.5 249.1 L113.0 249.1 L113.5 302.8 L114.0 347.6 L114.5 347.6 L115.0 348.2 L115.5 348.9 L116.0 349.6 L116.5 349.1 L117.0 348.6 L117.5 348.1 L118.0 347.6 L118.5 348.0 L119.0 348.4 L119.5 348.8 L120.0 349.1 L120.5 349.5 L121.0 348.5 L121.5 320.9 L122.0 319.1 L122.5 317.3 L123.0 315.5 L123.5 314.2 L124.0 315.2 L124.5 316.2 L125.0 318.3 L125.5 324.7 L126.0 328.8 L126.5 323.9 L127.0 318.9 L127.5 315.3 L128.0 316.6 L128.5 317.9 L129.0 319.4 L129.5 321.9 L130.0 324.3 L130.5 324.5 L131.0 321.2 L131.5 318.0 L132.0 314.0 L132.5 309.1 L133.0 302.5 L133.5 293.6 L134.0 291.7 L134.5 289.7 L135.0 287.8 L135.5 286.1 L136.0 284.5 L136.5 282.7 L137.0 280.5 L137.5 280.5 L138.0 282.6 L138.5 287.6 L139.0 293.0 L139.5 298.4 L140.0 303.9 L140.5 308.7 L141.0 312.9 L141.5 317.2 L142.0 322.3 L142.5 327.9 L143.0 333.5 L143.5 339.3 L144.0 345.2 L144.5 348.8 L145.0 349.4 L145.5 349.2 L146.0 348.9 L146.5 348.6 L147.0 327.3 L147.5 327.3 L148.0 347.7 L148.5 347.8 L149.0 348.0 L149.5 348.1 L150.0 348.3 L150.5 348.4 L151.0 348.6 L151.5 348.8 L152.0 348.9 L152.5 349.1 L153.0 349.3 L153.5 349.4 L154.0 349.6 L154.5 349.8 L155.0 349.9 L155.5 350.1 L156.0 348.7 L156.5 339.6 L157.0 329.0 L157.5 325.8 L158.0 324.4 L158.5 323.0 L159.0 321.6 L159.5 311.0 L160.0 314.3 L160.5 321.7 L161.0 325.6 L161.5 329.6 L162.0 332.3 L162.5 330.3 L163.0 328.4 L163.5 326.4 L164.0 324.5 L164.5 322.8 L165.0 322.0 L165.5 321.3 L166.0 320.5 L166.5 320.2 L167.0 321.5 L167.5 322.8 L168.0 324.7 L168.5 329.0 L169.0 333.2 L169.5 338.5 L170.0 345.4 L170.5 349.6 L171.0 349.6 L171.5 349.6 L172.0 349.6 L172.5 332.9 L173.0 326.0 L173.5 321.8 L174.0 321.6 L174.5 321.3 L175.0 321.1 L175.5 320.6 L176.0 319.8 L176.5 313.5 L177.0 317.2 L177.5 321.5 L178.0 322.5 L178.5 323.5 L179.0 339.3 L179.5 349.6 L180.0 349.6 L180.5 349.6 L181.0 349.6 L181.5 349.6 L182.0 349.6 L182.5 349.6 L183.0 349.6 L183.5 349.6 L184.0 349.6 L184.5 349.6 L185.0 349.6 L185.5 349.6 L186.0 337.7 L186.5 323.0 L187.0 319.6 L187.5 319.3 L188.0 319.8 L188.5 320.3 L189.0 320.8 L189.5 322.5 L190.0 324.5 L190.5 326.4 L191.0 328.4 L191.5 330.1 L192.0 331.8 L192.5 329.2 L193.0 326.5 L193.5 323.9 L194.0 322.6 L194.5 321.2 L195.0 319.9 L195.5 319.4 L196.0 318.9 L196.5 319.6 L197.0 320.2 L197.5 320.9 L198.0 321.6 L198.5 323.1 L199.0 324.6 L199.5 326.6 L200.0 327.0 L200.5 326.3 L201.0 329.1 L201.5 328.4 L202.0 322.6 L202.5 321.8 L203.0 325.4 L203.5 324.7 L204.0 323.7 L204.5 325.8 L205.0 327.1 L205.5 329.3 L206.0 331.6 L206.5 333.8 L207.0 334.7 L207.5 337.0 L208.0 338.7 L208.5 336.6 L209.0 338.7 L209.5 337.1 L210.0 335.3 L210.5 333.7 L211.0 332.3 L211.5 330.7 L212.0 325.9 L212.5 325.2 L213.0 326.9 L213.5 326.3 L214.0 324.1 L214.5 323.4 L215.0 318.8 L215.5 318.1 L216.0 318.1 L216.5 320.1 L217.0 322.1 L217.5 324.1 L218.0 323.5 L218.5 325.7 L219.0 331.1 L219.5 333.0 L220.0 332.6 L220.5 331.5 L221.0 330.6 L221.5 329.6 L222.0 327.7 L222.5 326.6 L223.0 326.4 L223.5 325.3 L224.0 327.1 L224.5 326.2 L225.0 323.2 L225.5 322.1 L226.0 322.2 L226.5 324.0 L227.0 325.3 L227.5 327.1 L228.0 331.7 L228.5 333.3 L229.0 331.8 L229.5 333.7 L230.0 337.0 L230.5 338.8 L231.0 339.7 L231.5 341.6 L232.0 343.7 L232.5 344.2 L233.0 345.0 L233.5 345.4 L234.0 345.3 L234.5 346.1 L235.0 346.6 L235.5 347.1 L236.0 347.6 L236.5 348.1 L237.0 348.6 L237.5 349.1 L238.0 349.6 L238.5 349.6 L239.0 349.6 L239.5 349.6 L240.0 349.6 L240.5 349.6 L241.0 349.6 L241.5 349.6 L242.0 349.6 L242.5 349.6 L243.0 349.6 L243.5 349.6 L244.0 349.6 L244.5 349.6 L245.0 349.6 L245.5 349.6 L246.0 349.6 L246.5 347.4 L247.0 344.8 L247.5 342.5 L248.0 341.1 L248.5 339.0 L249.0 338.8 L249.5 337.0 L250.0 332.5 L250.5 331.3 L251.0 331.0 L251.5 329.9 L252.0 326.9 L252.5 325.7 L253.0 326.0 L253.5 324.9 L254.0 322.4 L254.5 321.3 L255.0 320.4 L255.5 319.3 L256.0 320.6 L256.5 321.1 L257.0 319.4 L257.5 319.9 L258.0 316.8 L258.5 317.4 L259.0 320.2 L259.5 320.7 L260.0 323.2 L260.5 323.7 L261.0 322.9 L261.5 323.4 L262.0 322.6 L262.5 321.6 L263.0 322.1 L263.5 321.1 L264.0 321.6 L264.5 320.7 L265.0 316.1 L265.5 315.1 L266.0 314.9 L266.5 313.9 L267.0 315.1 L267.5 314.2 L268.0 311.4 L268.5 312.9 L269.0 315.8 L269.5 317.3 L270.0 318.0 L270.5 319.5 L271.0 326.3 L271.5 327.5 L272.0 325.7 L272.5 327.1 L273.0 327.6 L273.5 329.0 L274.0 330.5 L274.5 329.4 L275.0 327.3 L275.5 326.2 L276.0 323.6 L276.5 322.3 L277.0 324.3 L277.5 323.2 L278.0 322.9 L278.5 321.8 L279.0 317.5 L279.5 316.3 L280.0 314.8 L280.5 316.7 L281.0 316.4 L281.5 318.4 L282.0 323.2 L282.5 325.0 L283.0 328.5 L283.5 330.2 L284.0 332.6 L284.5 334.2 L285.0 335.1 L285.5 336.8 L286.0 336.6 L286.5 335.1 L287.0 334.7 L287.5 333.3 L288.0 333.0 L288.5 331.7 L289.0 330.3 L289.5 329.0 L290.0 326.3 L290.5 324.9 L291.0 322.4 L291.5 321.0 L292.0 321.1 L292.5 321.9 L293.0 324.7 L293.5 325.4 L294.0 326.2 L294.5 327.0 L295.0 326.8 L295.5 327.6 L296.0 328.1 L296.5 329.0 L297.0 333.5 L297.5 334.2 L298.0 333.2 L298.5 332.1 L299.0 330.4 L299.5 329.3 L300.0 326.7 L300.5 325.5 L301.0 325.7 L301.5 324.6 L302.0 321.1 L302.5 319.9 L303.0 319.7 L303.5 318.6 L304.0 322.1 L304.5 322.5 L305.0 316.5 L305.5 317.0 L306.0 318.4 L306.5 318.9 L307.0 322.7 L307.5 323.1 L308.0 318.9 L308.5 309.8 L309.0 294.9 L309.5 291.5 L310.0 288.1 L310.5 288.1 L311.0 288.1 L311.5 291.7 L312.0 297.6 L312.5 319.5 L313.0 319.9 L313.5 319.9 L314.0 310.6 L314.5 294.3 L315.0 292.2 L315.5 295.0 L316.0 314.8 L316.5 319.0 L317.0 318.6 L317.5 318.6 L318.0 315.8 L318.5 315.8 L319.0 314.9 L319.5 314.9 L320.0 319.5 L320.5 289.1 L321.0 286.3 L321.5 283.6 L322.0 282.2 L322.5 281.9 L323.0 282.4 L323.5 285.3 L324.0 289.8 L324.5 293.1 L325.0 295.6 L325.5 296.2 L326.0 295.6 L326.5 298.9 L327.0 306.1 L327.5 317.1 L328.0 318.0 L328.5 318.0 L329.0 316.9 L329.5 316.9 L330.0 321.0 L330.5 321.0 L331.0 318.6 L331.5 318.6 L332.0 319.8 L332.5 312.2 L333.0 296.1 L333.5 293.5 L334.0 292.0 L334.5 292.0 L335.0 292.0 L335.5 294.8 L336.0 297.6 L336.5 297.8 L337.0 297.9 L337.5 298.1 L338.0 300.4 L338.5 321.8 L339.0 324.5 L339.5 325.1 L340.0 322.8 L340.5 323.5 L341.0 323.7 L341.5 324.5 L342.0 327.6 L342.5 328.3 L343.0 326.4 L343.5 327.2 L344.0 330.4 L344.5 329.7 L345.0 329.7 L345.5 329.1 L346.0 327.8 L346.5 327.1 L347.0 327.1 L347.5 326.5 L348.0 326.0 L348.5 325.4 L349.0 325.3 L349.5 324.7 L350.0 321.1 L350.5 322.8 L351.0 324.1 L351.5 325.8 L352.0 328.3 L352.5 330.0 L353.0 330.7 L353.5 332.4 L354.0 334.1 L354.5 335.9 L355.0 338.6 L355.5 340.2 L356.0 341.9 L356.5 342.5 L357.0 343.4 L357.5 344.0 L358.0 344.3 L358.5 345.0 L359.0 346.5 L359.5 346.3 L360.0 346.9 L360.5 347.6 L361.0 348.3 L361.5 348.9 L362.0 349.6 L362.5 349.6 L363.0 349.6 L363.5 349.6 L364.0 349.6 L364.5 349.6 L365.0 349.6 L365.5 349.6 L366.0 349.6 L366.5 349.6 L367.0 349.6 L367.5 349.6 L368.0 349.6 L368.5 349.6 L369.0 349.6 L369.5 349.6 L370.0 349.6 L370.5 349.6 L371.0 349.6 L371.5 349.6 L372.0 349.6 L372.5 349.6 L373.0 349.6 L373.5 349.6 L374.0 349.6 L374.5 349.6 L375.0 349.6 L375.5 349.6 L376.0 349.6 L376.5 349.6 L377.0 349.6 L377.5 349.6 L378.0 349.6 L378.5 349.6 L379.0 349.6 L379.5 349.6 L380.0 349.6 L380.5 348.1 L381.0 346.6 L381.5 345.3 L382.0 343.8 L382.5 342.3 L383.0 340.0 L383.5 338.5 L384.0 337.2 L384.5 335.7 L385.0 336.9 L385.5 335.6 L386.0 330.4 L386.5 329.3 L387.0 331.0 L387.5 330.1 L388.0 331.3 L388.5 330.5 L389.0 326.0 L389.5 325.0 L390.0 324.9 L390.5 324.0 L391.0 323.4 L391.5 322.5 L392.0 318.6 L392.5 319.8 L393.0 325.3 L393.5 326.4 L394.0 322.0 L394.5 323.2 L395.0 327.9 L395.5 329.0 L396.0 328.0 L396.5 329.2 L397.0 330.7 L397.5 331.9 L398.0 333.0 L398.5 331.9 L399.0 334.2 L399.5 333.3 L400.0 328.8 L400.5 327.7 L401.0 331.0 L401.5 330.1 L402.0 324.5 L402.5 323.5 L403.0 324.6 L403.5 323.7 L404.0 324.0 L404.5 325.7 L405.0 326.9 L405.5 328.6 L406.0 327.0 L406.5 329.0 L407.0 332.4 L407.5 334.2 L408.0 336.7 L408.5 338.5 L409.0 339.3 L409.5 341.3 L410.0 343.8 L410.5 344.1 L411.0 343.8 L411.5 344.1 L412.0 345.3 L412.5 345.6 L413.0 345.0 L413.5 345.7 L414.0 346.0 L414.5 346.3 L415.0 346.6 L415.5 346.9 L416.0 347.2 L416.5 347.5 L417.0 347.8 L417.5 348.1 L418.0 348.4 L418.5 348.7 L419.0 349.0 L419.5 349.3 L420.0 349.6 L420.5 349.6 L421.0 349.6 L421.5 349.6 L422.0 349.6 L422.5 349.6 L423.0 349.6 L423.5 349.6 L424.0 349.6 L424.5 349.6 L425.0 349.6 L425.5 349.6 L426.0 349.6 L426.5 349.6 L427.0 349.6 L427.5 349.6 L428.0 349.6 L428.5 349.6 L429.0 349.6 L429.5 349.6 L430.0 349.6 L430.5 349.6 L431.0 349.6 L431.5 349.6 L432.0 349.6 L432.5 349.6 L433.0 349.6 L433.5 349.6 L434.0 349.6 L434.5 349.6 L435.0 349.6 L435.5 349.6 L436.0 349.6 L436.5 349.6 L437.0 349.6 L437.5 349.6 L438.0 349.6 L438.5 349.6 L439.0 349.6 L439.5 349.6 L440.0 349.6 L440.5 347.8 L441.0 345.9 L441.5 344.7 L442.0 341.6 L442.5 339.6 L443.0 337.7 L443.5 335.7 L444.0 335.9 L444.5 334.2 L445.0 334.0 L445.5 332.4 L446.0 330.9 L446.5 330.2 L447.0 325.9 L447.5 325.0 L448.0 322.4 L448.5 321.6 L449.0 322.0 L449.5 321.2 L450.0 320.2 L450.5 319.4 L451.0 320.9 L451.5 320.1 L452.0 319.6 L452.5 320.7 L453.0 319.4 L453.5 320.6 L454.0 322.5 L454.5 323.7 L455.0 326.2 L455.5 327.3 L456.0 327.4 L456.5 328.5 L457.0 330.1 L457.5 331.2 L458.0 332.1 L458.5 330.8 L459.0 330.0 L459.5 328.7 L460.0 326.9 L460.5 325.6 L461.0 325.7 L461.5 324.5 L462.0 320.2 L462.5 318.8 L463.0 320.5 L463.5 319.3 L464.0 318.0 L464.5 319.6 L465.0 321.2 L465.5 322.7 L466.0 324.6 L466.5 326.1 L467.0 323.3 L467.5 325.1 L468.0 327.2 L468.5 329.0 L469.0 335.3 L469.5 336.7 L470.0 336.9 L470.5 336.0 L471.0 333.4 L471.5 332.4 L472.0 330.2 L472.5 329.1 L473.0 329.9 L473.5 328.9 L474.0 329.0 L474.5 328.0 L475.0 325.6 L475.5 324.6 L476.0 325.1 L476.5 326.8 L477.0 328.0 L477.5 329.8 L478.0 330.6 L478.5 332.5 L479.0 333.3 L479.5 335.2 L480.0 339.6 L480.5 341.2 L481.0 342.8 L481.5 344.4 L482.0 345.1 L482.5 345.9 L483.0 346.1 L483.5 346.4 L484.0 346.6 L484.5 346.9 L485.0 347.1 L485.5 347.4 L486.0 347.6 L486.5 347.9 L487.0 348.1 L487.5 348.4 L488.0 348.6 L488.5 348.9 L489.0 349.1 L489.5 349.4 L490.0 349.6 L490.5 349.6 L491.0 349.6 L491.5 349.6 L492.0 349.6 L492.5 349.6 L493.0 349.6 L493.5 349.6 L494.0 349.6 L494.5 349.6 L495.0 349.6 L495.5 349.6 L496.0 349.6 L496.5 349.6 L497.0 349.6 L497.5 349.6 L498.0 349.6 L498.5 349.6 L499.0 349.6 L499.5 349.6 L500.0 349.6 L500.5 349.6 L501.0 349.6 L501.5 349.6 L502.0 349.6 L502.5 349.6 L503.0 349.6 L503.5 349.6 L504.0 349.6 L504.5 349.6 L505.0 349.6 L505.5 349.6 L506.0 349.6 L506.5 349.6 L507.0 349.6 L507.5 349.6 L508.0 349.6 L508.5 349.6 L509.0 349.6 L509.5 349.6 L510.0 349.6 L510.5 349.6 L511.0 349.6 L511.5 349.6 L512.0 349.6 L512.5 349.6 L513.0 349.6 L513.5 349.6 L514.0 349.6 L514.5 349.6 L515.0 349.6 L515.5 349.6 L516.0 349.6 L516.5 349.6 L517.0 349.6 L517.5 349.6 L518.0 349.6 L518.5 349.6 L519.0 349.6 L519.5 349.6 L520.0 349.6 L520.5 348.1 L521.0 346.6 L521.5 345.3 L522.0 343.1 L522.5 341.5 L523.0 340.4 L523.5 338.9 L524.0 337.9 L524.5 336.4 L525.0 334.9 L525.5 333.5 L526.0 332.7 L526.5 331.9 L527.0 330.0 L527.5 329.1 L528.0 333.0 L528.5 332.4 L529.0 328.1 L529.5 327.3 L530.0 329.3 L530.5 328.6 L531.0 322.4 L531.5 321.5 L532.0 323.8 L532.5 323.4 L533.0 318.3 L533.5 317.8 L534.0 320.2 L534.5 319.7 L535.0 315.6 L535.5 315.1 L536.0 318.1 L536.5 317.6 L537.0 319.7 L537.5 319.3 L538.0 318.0 L538.5 319.2 L539.0 316.0 L539.5 317.4 L540.0 320.1 L540.5 321.5 L541.0 324.9 L541.5 326.2 L542.0 330.5 L542.5 331.6 L543.0 330.7 L543.5 331.9 L544.0 330.5 L544.5 329.6 L545.0 332.4 L545.5 331.6 L546.0 328.3 L546.5 327.5 L547.0 331.1 L547.5 330.4 L548.0 322.8 L548.5 321.9 L549.0 326.5 L549.5 325.8 L550.0 321.1 L550.5 323.0 L551.0 324.2 L551.5 326.1 L552.0 332.8 L552.5 334.3 L553.0 333.6 L553.5 335.4 L554.0 335.8 L554.5 337.7 L555.0 340.1 L555.5 341.9 L556.0 345.0 L556.5 345.4 L557.0 344.9 L557.5 345.3 L558.0 345.1 L558.5 346.1 L559.0 346.6 L559.5 347.1 L560.0 347.6 L560.5 348.1 L561.0 348.6 L561.5 349.1 L562.0 349.6 L562.5 349.6 L563.0 349.6 L563.5 349.6 L564.0 349.6 L564.5 349.6 L565.0 349.6 L565.5 349.6 L566.0 349.6 L566.5 349.6 L567.0 349.6 L567.5 349.6 L568.0 349.6 L568.5 349.6 L569.0 349.6 L569.5 349.6 L570.0 349.6 L570.5 349.6 L571.0 349.6 L571.5 349.6 L572.0 349.6 L572.5 349.6 L573.0 349.6 L573.5 349.6 L574.0 349.6 L574.5 349.6 L575.0 349.6 L575.5 349.6 L576.0 349.6 L576.5 349.6 L577.0 349.6 L577.5 349.6 L578.0 349.6 L578.5 349.6 L579.0 349.6 L579.5 349.6 L580.0 349.6 L580.5 349.6 L581.0 349.6 L581.5 349.6 L582.0 349.6 L582.5 349.6 L583.0 349.6 L583.5 349.6 L584.0 349.6 L584.5 349.6 L585.0 349.6 L585.5 349.6 L586.0 349.6 L586.5 349.6 L587.0 349.6 L587.5 349.6 L588.0 349.6 L588.5 349.6 L589.0 349.6 L589.5 349.6 L590.0 349.6 L590.5 349.6 L591.0 349.6 L591.5 349.6 L592.0 349.6 L592.5 349.6 L593.0 349.6 L593.5 349.6 L594.0 349.6 L594.5 349.6 L595.0 349.6 L595.5 349.6 L596.0 349.6 L596.5 349.6 L597.0 349.6 L597.5 349.6 L598.0 349.6 L598.5 349.6 L599.0 349.6 L599.5 349.6 L600.0 349.6 L600.5 348.3 L601.0 346.9 L601.5 345.4 L602.0 343.8 L602.5 342.4 L603.0 342.0 L603.5 340.8 L604.0 337.8 L604.5 336.4 L605.0 337.5 L605.5 336.2 L606.0 332.2 L606.5 331.1 L607.0 333.2 L607.5 332.2 L608.0 330.9 L608.5 330.0 L609.0 326.6 L609.5 325.6 L610.0 326.3 L610.5 325.3 L611.0 324.2 L611.5 323.2 L612.0 323.5 L612.5 324.9 L613.0 326.0 L613.5 327.4 L614.0 330.4 L614.5 331.7 L615.0 331.7 L615.5 333.1 L616.0 335.2 L616.5 336.6 L617.0 336.5 L617.5 338.0 L618.0 338.8 L618.5 337.4 L619.0 338.0 L619.5 336.8 L620.0 334.8 L620.5 333.5 L621.0 332.4 L621.5 331.1 L622.0 331.6 L622.5 330.5 L623.0 327.8 L623.5 326.6 L624.0 321.7 L624.5 321.2 L625.0 325.0 L625.5 324.5 L626.0 320.8 L626.5 320.3 L627.0 318.9 L627.5 318.4 L628.0 319.7 L628.5 319.2 L629.0 320.6 L629.5 320.2 L630.0 315.5 L630.5 316.7 L631.0 322.2 L631.5 323.3 L632.0 323.0 L632.5 324.1 L633.0 322.3 L633.5 323.5 L634.0 328.9 L634.5 330.0 L635.0 330.3 L635.5 331.4 L636.0 335.1 L636.5 334.3 L637.0 328.0 L637.5 326.9 L638.0 329.7 L638.5 328.7 L639.0 323.4 L639.5 322.4 L640.0 325.9 L640.5 325.0 L641.0 323.4 L641.5 322.4 L642.0 319.2 L642.5 319.4 L643.0 320.0 L643.5 320.2 L644.0 318.4 L644.5 318.6 L645.0 320.8 L645.5 321.0 L646.0 322.0 L646.5 322.2 L647.0 323.4 L647.5 323.5 L648.0 321.0 L648.5 320.4 L649.0 321.4 L649.5 320.7 L650.0 317.1 L650.5 316.4 L651.0 317.9 L651.5 281.6 L652.0 279.5 L652.5 278.9 L653.0 279.4 L653.5 280.7 L654.0 282.6 L654.5 284.5 L655.0 286.3 L655.5 288.2 L656.0 290.1 L656.5 291.9 L657.0 293.8 L657.5 295.6 L658.0 297.3 L658.5 298.9 L659.0 300.6 L659.5 302.3 L660.0 304.2 L660.5 306.0 L661.0 310.6 L661.5 312.3 L662.0 316.4 L662.5 316.8 L663.0 313.9 L663.5 314.4 L664.0 316.1 L664.5 316.6 L665.0 317.5 L665.5 317.9 L666.0 313.5 L666.5 313.5 L667.0 317.1 L667.5 317.1 L668.0 315.2 L668.5 315.2 L669.0 320.4 L669.5 320.4 L670.0 304.1 L670.5 292.6 L671.0 292.6 L671.5 292.6 L672.0 292.6 L672.5 292.6 L673.0 304.1 L673.5 313.3 L674.0 319.7 L674.5 320.7 L675.0 322.7 L675.5 323.7 L676.0 320.1 L676.5 319.6 L677.0 320.3 L677.5 319.8 L678.0 320.7 L678.5 320.2 L679.0 317.7 L679.5 317.2 L680.0 315.1 L680.5 315.8 L681.0 321.1 L681.5 321.7 L682.0 319.4 L682.5 320.1 L683.0 327.7 L683.5 328.3 L684.0 324.2 L684.5 324.8 L685.0 326.3 L685.5 326.9 L686.0 324.1 L686.5 323.4 L687.0 322.3 L687.5 321.5 L688.0 321.4 L688.5 320.7 L689.0 323.7 L689.5 323.0 L690.0 322.8 L690.5 322.2 L691.0 320.4 L691.5 319.8 L692.0 322.8 L692.5 323.2 L693.0 318.5 L693.5 319.0 L694.0 321.0 L694.5 321.5 L695.0 322.2 L695.5 322.7 L696.0 320.2 L696.5 320.7 L697.0 321.3 L697.5 321.9 L698.0 321.7 L698.5 321.6 L699.0 321.7 L699.5 321.5 L700.0 320.6 L700.5 320.4 L701.0 320.3 L701.5 320.1 L702.0 322.5 L702.5 322.3 L703.0 322.0 L703.5 321.9 L704.0 321.7 L704.5 321.4 L705.0 320.7 L705.5 319.9 L706.0 319.2 L706.5 319.5 L707.0 321.4 L707.5 323.4 L708.0 325.3 L708.5 327.2 L709.0 327.5 L709.5 325.2 L710.0 322.8 L710.5 320.5 L711.0 319.2 L711.5 318.4 L712.0 317.7 L712.5 316.9 L713.0 316.2 L713.5 315.4 L714.0 314.7 L714.5 313.9 L715.0 314.1 L715.5 314.5 L716.0 314.9 L716.5 315.2 L717.0 315.6 L717.5 315.3 L718.0 314.8 L718.5 314.3 L719.0 313.8 L719.5 314.8 L720.0 315.7 L720.5 316.7 L721.0 318.5 L721.5 320.4 L722.0 322.2 L722.5 324.0 L723.0 323.1 L723.5 322.2 L724.0 321.2 L724.5 320.3 L725.0 319.1 L725.5 316.8 L726.0 314.4 L726.5 312.0 L727.0 309.7 L727.5 309.7 L728.0 313.2 L728.5 317.2 L729.0 320.6 L729.5 323.0 L730.0 325.5 L730.5 327.9 L731.0 328.7 L731.5 326.8 L732.0 325.0 L732.5 323.2 L733.0 321.3 L733.5 321.3 L734.0 322.6 L734.5 323.8 L735.0 325.0 L735.5 326.1 L736.0 327.1 L736.5 328.2 L737.0 329.2 L737.5 330.2 L738.0 333.0 L738.5 336.2 L739.0 339.5 L739.5 336.8 L740.0 332.7 L740.5 328.6 L741.0 324.5 L741.5 326.1 L742.0 327.6 L742.5 329.2 L743.0 330.7 L743.5 332.3 L744.0 333.7 L744.5 335.1 L745.0 336.6 L745.5 337.5 L746.0 336.6 L746.5 335.8 L747.0 334.9 L747.5 334.0 L748.0 333.2 L748.5 332.9 L749.0 332.6 L749.5 332.3 L750.0 331.9 L750.5 331.6 L751.0 331.2 L751.5 330.8 L752.0 330.3 L752.5 329.9 L753.0 329.5 L753.5 329.0 L754.0 328.6 L754.5 327.9 L755.0 327.1 L755.5 326.3 L756.0 325.5 L756.5 324.7 L757.0 323.7 L757.5 322.7 L758.0 321.8 L758.5 320.8 L759.0 322.2 L759.5 324.3 L760.0 326.3 L760.5 328.4 L761.0 329.9 L761.5 331.5 L762.0 333.0 L762.5 334.6 L763.0 336.1 L763.5 337.9 L764.0 339.6 L764.5 341.4 L765.0 343.1 L765.5 342.4 L766.0 341.6 L766.5 340.9 L767.0 340.2 L767.5 339.4 L768.0 338.7 L768.5 337.9 L769.0 336.9 L769.5 335.9 L770.0 334.9 L770.5 333.9 L771.0 332.9 L771.5 331.8 L772.0 330.7 L772.5 329.5 L773.0 328.3 L773.5 327.1 L774.0 326.0 L774.5 325.3 L775.0 324.8 L775.5 324.4 L776.0 324.0 L776.5 323.6 L777.0 323.2 L777.5 324.2 L778.0 325.7 L778.5 327.1 L779.0 332.1 L779.5 337.9 L780.0 345.7 L780.5 350.6 L781.0 350.6 L781.5 350.6 L782.0 350.6 L782.5 350.6 L783.0 350.6 L783.5 350.6 L784.0 350.6 L784.5 350.6 L785.0 350.6 L785.5 350.6 L786.0 350.6 L786.5 350.6 L787.0 350.6 L787.5 350.6 L788.0 350.6 L788.5 350.6 L789.0 350.6 L789.5 350.6 L790.0 350.6 L790.5 350.6 L791.0 350.6 L791.5 350.6 L792.0 350.6 L792.5 350.6 L793.0 350.6 L793.5 350.6 L794.0 350.6 L794.5 350.6 L795.0 350.6 L795.5 350.6 L796.0 350.6 L796.5 350.6 L797.0 350.6 L797.5 350.6 L798.0 350.6 L798.5 350.6 L799.0 350.6 L799.5 350.6 L800.0 350.6 L800.5 350.6 L801.0 350.6 L801.5 350.6 L802.0 350.6 L802.5 350.6 L803.0 350.6 L803.5 350.6 L804.0 350.6 L804.5 350.6 L805.0 350.6 L805.5 350.6 L806.0 350.6 L806.5 350.6 L807.0 350.6 L807.5 350.6 L808.0 350.6 L808.5 350.6 L809.0 350.6 L809.5 350.6 L810.0 350.6 L810.5 350.6 L811.0 350.6 L811.5 350.6 L812.0 350.6 L812.5 350.6 L813.0 350.6 L813.5 350.6 L814.0 350.6 L814.5 350.6 L815.0 350.6 L815.5 350.6 L816.0 350.6 L816.5 350.6 L817.0 350.6 L817.5 350.6 L818.0 350.6 L818.5 350.6 L819.0 350.6 L819.5 350.6 L820.0 350.6 L820.5 350.6 L821.0 350.6 L821.5 350.6 L822.0 350.6 L822.5 350.6 L823.0 350.6 L823.5 350.6 L824.0 350.6 L824.5 350.6 L825.0 350.6 L825.5 350.6 L826.0 350.6 L826.5 350.6 L827.0 350.6 L827.5 350.6 L828.0 350.6 L828.5 350.6 L829.0 350.6 L829.5 350.6 L830.0 350.6 L830.5 350.6 L831.0 350.6 L831.5 350.6 L832.0 350.6 L832.5 350.6 L833.0 350.6 L833.5 350.6 L834.0 350.6 L834.5 350.6 L835.0 350.6 L835.5 350.6 L836.0 350.6 L836.5 350.6 L837.0 350.6 L837.5 350.6 L838.0 350.6 L838.5 350.6 L839.0 350.6 L839.5 350.6 L840.0 350.6 L840.5 350.6 L841.0 350.6 L841.5 350.7 L842.0 350.7 L842.5 350.7 L843.0 350.7 L843.5 350.7 L844.0 350.7 L844.5 350.7 L845.0 350.7 L845.5 350.7 L846.0 350.7 L846.5 350.7 L847.0 350.7 L847.5 350.7 L848.0 350.7 L848.5 350.7 L849.0 350.7 L849.5 350.7 L850.0 350.7 L850.5 350.7 L851.0 350.7 L851.5 350.7 L852.0 350.7 L852.5 350.7 L853.0 350.7 L853.5 350.7 L854.0 350.7 L854.5 350.7 L855.0 350.7 L855.5 350.7 L856.0 350.7 L856.5 350.7 L857.0 350.7 L857.5 350.7 L858.0 350.7 L858.5 350.7 L859.0 350.7 L859.5 350.7 L860.0 350.7 L860.5 350.7 L861.0 350.7 L861.5 350.7 L862.0 350.7 L862.5 350.7 L863.0 350.7 L863.5 350.7 L864.0 350.7 L864.5 350.7 L865.0 350.7 L865.5 350.7 L866.0 350.7 L866.5 350.7 L867.0 350.7 L867.5 350.7 L868.0 350.7 L868.5 350.7 L869.0 350.7 L869.5 350.7 L870.0 350.7 L870.5 350.7 L871.0 350.7 L871.5 350.7 L872.0 350.7 L872.5 350.7 L873.0 350.7 L873.5 350.7 L874.0 350.7 L874.5 350.7 L875.0 350.7 L875.5 350.7 L876.0 350.7 L876.5 350.7 L877.0 350.7 L877.5 350.7 L878.0 350.7 L878.5 350.7 L879.0 350.7 L879.5 350.7 L880.0 350.7 L880.5 350.7 L881.0 350.7 L881.5 350.7 L882.0 350.7 L882.5 350.7 L883.0 350.7 L883.5 350.7 L884.0 350.7 L884.5 350.7 L885.0 350.7 L885.5 350.7 L886.0 350.7 L886.5 350.7 L887.0 350.7 L887.5 350.7 L888.0 350.7 L888.5 350.7 L889.0 350.7 L889.5 350.7 L890.0 350.7 L890.5 350.7 L891.0 350.7 L891.5 350.7 L892.0 350.7 L892.5 350.7 L893.0 350.7 L893.5 350.7 L894.0 350.7 L894.5 350.7 L895.0 350.7 L895.5 350.7 L896.0 350.7 L896.5 350.7 L897.0 350.7 L897.5 350.7 L898.0 350.7 L898.5 350.7 L899.0 350.7 L899.5 350.7 L900.0 350.7 L900.5 350.7 L901.0 350.7 L901.5 350.7 L902.0 350.7 L902.5 350.7 L903.0 350.7 L903.5 350.7 L904.0 350.7 L904.5 350.7 L905.0 350.7 L905.5 350.7 L906.0 350.7 L906.5 350.7 L907.0 350.7 L907.5 350.7 L908.0 350.7 L908.5 350.7 L909.0 350.7 L909.5 350.7 L910.0 350.7 L910.5 350.7 L911.0 350.7 L911.5 350.7 L912.0 350.7 L912.5 350.7 L913.0 350.7 L913.5 350.7 L914.0 350.7 L914.5 350.7 L915.0 350.7 L915.5 350.7 L916.0 350.7 L916.5 350.7 L917.0 350.7 L917.5 350.7 L918.0 350.7 L918.5 350.7 L919.0 350.7 L919.5 350.7 L920.0 350.7 L920.5 350.7 L921.0 350.7 L921.5 350.7 L922.0 350.7 L922.5 350.7 L923.0 350.7 L923.5 350.7 L924.0 350.7 L924.5 350.7 L925.0 350.7 L925.5 350.7 L926.0 350.7 L926.5 350.7 L927.0 350.7 L927.5 350.7 L928.0 350.7 L928.5 350.7 L929.0 350.7 L929.5 350.7 L930.0 350.7 L930.5 350.7 L931.0 350.7 L931.5 350.7 L932.0 350.7 L932.5 350.7 L933.0 350.7 L933.5 350.7 L934.0 350.7 L934.5 350.7 L935.0 350.7 L935.5 350.7 L936.0 350.7 L936.5 350.7 L937.0 350.7 L937.5 350.7 L938.0 350.7 L938.5 350.7 L939.0 350.7 L939.5 350.7 L940.0 350.7 L940.5 350.7 L941.0 350.7 L941.5 350.7 L942.0 350.7 L942.5 350.7 L943.0 350.7 L943.5 350.7 L944.0 350.7 L944.5 350.7 L945.0 350.7 L945.5 350.7 L946.0 350.7 L946.5 350.7 L947.0 350.7 L947.5 350.7 L948.0 350.7 L948.5 350.7 L949.0 350.7 L949.5 350.7 L950.0 350.7 L950.5 350.7 L951.0 350.7 L951.5 350.7 L952.0 350.7 L952.5 350.7 L953.0 350.7 L953.5 350.7 L954.0 350.7 L954.5 350.7 L955.0 350.7 L955.5 350.7 L956.0 350.7 L956.5 350.7 L957.0 350.7 L957.5 350.7 L958.0 350.7 L958.5 350.7 L959.0 350.7 L959.5 350.7 L960.0 350.7 L960.5 350.7 L961.0 350.7 L961.5 350.7 L962.0 350.7 L962.5 350.7 L963.0 350.7 L963.5 350.8 L964.0 350.8 L964.5 350.8 L965.0 350.8 L965.5 350.8 L966.0 350.8 L966.5 350.8 L967.0 350.8 L967.5 350.8 L968.0 350.8 L968.5 350.8 L969.0 350.8 L969.5 350.8 L970.0 350.8 L970.5 350.8 L971.0 350.8 L971.5 350.8 L972.0 350.8 L972.5 350.8 L973.0 350.8 L973.5 350.8 L974.0 350.8 L974.5 350.8 L975.0 350.8 L975.5 350.8 L976.0 350.8 L976.5 350.8 L977.0 350.8 L977.5 350.8 L978.0 350.8 L978.5 350.8 L979.0 350.8 L979.5 350.8 L980.0 350.8 L980.5 350.8 L981.0 350.8 L981.5 350.8 L982.0 350.8 L982.5 350.8 L983.0 350.8 L983.5 350.8 L984.0 350.8 L984.5 350.8 L985.0 350.8 L985.5 350.8 L986.0 350.8 L986.5 350.8 L987.0 350.8 L987.5 350.8 L988.0 350.8 L988.5 350.8 L989.0 350.8 L989.5 350.8 L990.0 350.8 L990.5 350.8 L991.0 350.8 L991.5 350.8 L992.0 350.8 L992.5 350.8 L993.0 350.8 L993.5 350.8 L994.0 350.8 L994.5 350.8 L995.0 350.8 L995.5 350.8 L996.0 350.8 L996.5 350.8 L997.0 350.8 L997.5 350.8 L998.0 350.8 L998.5 350.8 L999.0 350.8 L999.5 350.8 L1000.0 350.8 L1000.5 350.8 L1001.0 350.8 L1001.5 350.8 L1002.0 350.8 L1002.5 350.8 L1003.0 350.8 L1003.5 350.8 L1004.0 350.8 L1004.5 350.8 L1005.0 350.8 L1005.5 350.8 L1006.0 350.8 L1006.5 350.8 L1007.0 350.8 L1007.5 350.8 L1008.0 350.8 L1008.5 350.8 L1009.0 350.8 L1009.5 350.8 L1010.0 350.8 L1010.5 350.8 L1011.0 350.8 L1011.5 350.8 L1012.0 350.8 L1012.5 350.8 L1013.0 350.8 L1013.5 350.8 L1014.0 350.8 L1014.5 350.8 L1015.0 350.8 L1015.5 350.8 L1016.0 350.8 L1016.5 350.8 L1017.0 350.8 L1017.5 350.8 L1018.0 350.8 L1018.5 350.8 L1019.0 350.8 L1019.5 350.8 L1020.0 350.8 L1020.5 350.8 L1021.0 350.8 L1021.5 350.8 L1022.0 350.8 L1022.5 350.8 L1023.0 350.8 L1023.5 350.8 L1024.0 350.8 L1024.0 352.4 L1023.5 352.4 L1023.0 352.4 L1022.5 352.4 L1022.0 352.4 L1021.5 352.4 L1021.0 352.4 L1020.5 352.4 L1020.0 352.4 L1019.5 352.4 L1019.0 352.4 L1018.5 352.4 L1018.0 352.4 L1017.5 352.4 L1017.0 352.4 L1016.5 352.4 L1016.0 352.4 L1015.5 352.4 L1015.0 352.4 L1014.5 352.4 L1014.0 352.4 L1013.5 352.4 L1013.0 352.4 L1012.5 352.4 L1012.0 352.4 L1011.5 352.4 L1011.0 352.4 L1010.5 352.4 L1010.0 352.4 L1009.5 352.4 L1009.0 352.4 L1008.5 352.4 L1008.0 352.4 L1007.5 352.4 L1007.0 352.4 L1006.5 352.4 L1006.0 352.4 L1005.5 352.4 L1005.0 352.4 L1004.5 352.4 L1004.0 352.4 L1003.5 352.4 L1003.0 352.4 L1002.5 352.4 L1002.0 352.4 L1001.5 352.4 L1001.0 352.4 L1000.5 352.4 L1000.0 352.4 L999.5 352.4 L999.0 352.4 L998.5 352.4 L998.0 352.4 L997.5 352.4 L997.0 352.4 L996.5 352.4 L996.0 352.4 L995.5 352.4 L995.0 352.4 L994.5 352.4 L994.0 352.4 L993.5 352.4 L993.0 352.4 L992.5 352.4 L992.0 352.4 L991.5 352.4 L991.0 352.4 L990.5 352.4 L990.0 352.4 L989.5 352.4 L989.0 352.4 L988.5 352.4 L988.0 352.4 L987.5 352.4 L987.0 352.4 L986.5 352.4 L986.0 352.4 L985.5 352.4 L985.0 352.4 L984.5 352.4 L984.0 352.4 L983.5 352.4 L983.0 352.4 L982.5 352.4 L982.0 352.4 L981.5 352.4 L981.0 352.4 L980.5 352.4 L980.0 352.4 L979.5 352.4 L979.0 352.4 L978.5 352.4 L978.0 352.4 L977.5 352.4 L977.0 352.4 L976.5 352.4 L976.0 352.4 L975.5 352.4 L975.0 352.4 L974.5 352.4 L974.0 352.4 L973.5 352.4 L973.0 352.4 L972.5 352.4 L972.0 352.4 L971.5 352.4 L971.0 352.4 L970.5 352.4 L970.0 352.4 L969.5 352.4 L969.0 352.4 L968.5 352.4 L968.0 352.4 L967.5 352.4 L967.0 352.4 L966.5 352.4 L966.0 352.4 L965.5 352.4 L965.0 352.4 L964.5 352.4 L964.0 352.4 L963.5 352.4 L963.0 352.5 L962.5 352.5 L962.0 352.5 L961.5 352.5 L961.0 352.5 L960.5 352.5 L960.0 352.5 L959.5 352.5 L959.0 352.5 L958.5 352.5 L958.0 352.5 L957.5 352.5 L957.0 352.5 L956.5 352.5 L956.0 352.5 L955.5 352.5 L955.0 352.5 L954.5 352.5 L954.0 352.5 L953.5 352.5 L953.0 352.5 L952.5 352.5 L952.0 352.5 L951.5 352.5 L951.0 352.5 L950.5 352.5 L950.0 352.5 L949.5 352.5 L949.0 352.5 L948.5 352.5 L948.0 352.5 L947.5 352.5 L947.0 352.5 L946.5 352.5 L946.0 352.5 L945.5 352.5 L945.0 352.5 L944.5 352.5 L944.0 352.5 L943.5 352.5 L943.0 352.5 L942.5 352.5 L942.0 352.5 L941.5 352.5 L941.0 352.5 L940.5 352.5 L940.0 352.5 L939.5 352.5 L939.0 352.5 L938.5 352.5 L938.0 352.5 L937.5 352.5 L937.0 352.5 L936.5 352.5 L936.0 352.5 L935.5 352.5 L935.0 352.5 L934.5 352.5 L934.0 352.5 L933.5 352.5 L933.0 352.5 L932.5 352.5 L932.0 352.5 L931.5 352.5 L931.0 352.5 L930.5 352.5 L930.0 352.5 L929.5 352.5 L929.0 352.5 L928.5 352.5 L928.0 352.5 L927.5 352.5 L927.0 352.5 L926.5 352.5 L926.0 352.5 L925.5 352.5 L925.0 352.5 L924.5 352.5 L924.0 352.5 L923.5 352.5 L923.0 352.5 L922.5 352.5 L922.0 352.5 L921.5 352.5 L921.0 352.5 L920.5 352.5 L920.0 352.5 L919.5 352.5 L919.0 352.5 L918.5 352.5 L918.0 352.5 L917.5 352.5 L917.0 352.5 L916.5 352.5 L916.0 352.5 L915.5 352.5 L915.0 352.5 L914.5 352.5 L914.0 352.5 L913.5 352.5 L913.0 352.5 L912.5 352.5 L912.0 352.5 L911.5 352.5 L911.0 352.5 L910.5 352.5 L910.0 352.5 L909.5 352.5 L909.0 352.5 L908.5 352.5 L908.0 352.5 L907.5 352.5 L907.0 352.5 L906.5 352.5 L906.0 352.5 L905.5 352.5 L905.0 352.5 L904.5 352.5 L904.0 352.5 L903.5 352.5 L903.0 352.5 L902.5 352.5 L902.0 352.5 L901.5 352.5 L901.0 352.5 L900.5 352.5 L900.0 352.5 L899.5 352.5 L899.0 352.5 L898.5 352.5 L898.0 352.5 L897.5 352.5 L897.0 352.5 L896.5 352.5 L896.0 352.5 L895.5 352.5 L895.0 352.5 L894.5 352.5 L894.0 352.5 L893.5 352.5 L893.0 352.5 L892.5 352.5 L892.0 352.5 L891.5 352.5 L891.0 352.5 L890.5 352.5 L890.0 352.5 L889.5 352.5 L889.0 352.5 L888.5 352.5 L888.0 352.5 L887.5 352.5 L887.0 352.5 L886.5 352.5 L886.0 352.5 L885.5 352.5 L885.0 352.5 L884.5 352.5 L884.0 352.5 L883.5 352.5 L883.0 352.5 L882.5 352.5 L882.0 352.5 L881.5 352.5 L881.0 352.5 L880.5 352.5 L880.0 352.5 L879.5 352.5 L879.0 352.5 L878.5 352.5 L878.0 352.5 L877.5 352.5 L877.0 352.5 L876.5 352.5 L876.0 352.5 L875.5 352.5 L875.0 352.5 L874.5 352.5 L874.0 352.5 L873.5 352.5 L873.0 352.5 L872.5 352.5 L872.0 352.5 L871.5 352.5 L871.0 352.5 L870.5 352.5 L870.0 352.5 L869.5 352.5 L869.0 352.5 L868.5 352.5 L868.0 352.5 L867.5 352.5 L867.0 352.5 L866.5 352.5 L866.0 352.5 L865.5 352.5 L865.0 352.5 L864.5 352.5 L864.0 352.5 L863.5 352.5 L863.0 352.5 L862.5 352.5 L862.0 352.5 L861.5 352.5 L861.0 352.5 L860.5 352.5 L860.0 352.5 L859.5 352.5 L859.0 352.5 L858.5 352.5 L858.0 352.5 L857.5 352.5 L857.0 352.5 L856.5 352.5 L856.0 352.5 L855.5 352.5 L855.0 352.5 L854.5 352.5 L854.0 352.5 L853.5 352.5 L853.0 352.5 L852.5 352.5 L852.0 352.5 L851.5 352.5 L851.0 352.5 L850.5 352.5 L850.0 352.5 L849.5 352.5 L849.0 352.5 L848.5 352.5 L848.0 352.5 L847.5 352.5 L847.0 352.5 L846.5 352.5 L846.0 352.5 L845.5 352.5 L845.0 352.5 L844.5 352.5 L844.0 352.5 L843.5 352.5 L843.0 352.5 L842.5 352.5 L842.0 352.5 L841.5 352.5 L841.0 352.6 L840.5 352.6 L840.0 352.6 L839.5 352.6 L839.0 352.6 L838.5 352.6 L838.0 352.6 L837.5 352.6 L837.0 352.6 L836.5 352.6 L836.0 352.6 L835.5 352.6 L835.0 352.6 L834.5 352.6 L834.0 352.6 L833.5 352.6 L833.0 352.6 L832.5 352.6 L832.0 352.6 L831.5 352.6 L831.0 352.6 L830.5 352.6 L830.0 352.6 L829.5 352.6 L829.0 352.6 L828.5 352.6 L828.0 352.6 L827.5 352.6 L827.0 352.6 L826.5 352.6 L826.0 352.6 L825.5 352.6 L825.0 352.6 L824.5 352.6 L824.0 352.6 L823.5 352.6 L823.0 352.6 L822.5 352.6 L822.0 352.6 L821.5 352.6 L821.0 352.6 L820.5 352.6 L820.0 352.6 L819.5 352.6 L819.0 352.6 L818.5 352.6 L818.0 352.6 L817.5 352.6 L817.0 352.6 L816.5 352.6 L816.0 352.6 L815.5 352.6 L815.0 352.6 L814.5 352.6 L814.0 352.6 L813.5 352.6 L813.0 352.6 L812.5 352.6 L812.0 352.6 L811.5 352.6 L811.0 352.6 L810.5 352.6 L810.0 352.6 L809.5 352.6 L809.0 352.6 L808.5 352.6 L808.0 352.6 L807.5 352.6 L807.0 352.6 L806.5 352.6 L806.0 352.6 L805.5 352.6 L805.0 352.6 L804.5 352.6 L804.0 352.6 L803.5 352.6 L803.0 352.6 L802.5 352.6 L802.0 352.6 L801.5 352.6 L801.0 352.6 L800.5 352.6 L800.0 352.6 L799.5 352.6 L799.0 352.6 L798.5 352.6 L798.0 352.6 L797.5 352.6 L797.0 352.6 L796.5 352.6 L796.0 352.6 L795.5 352.6 L795.0 352.6 L794.5 352.6 L794.0 352.6 L793.5 352.6 L793.0 352.6 L792.5 352.6 L792.0 352.6 L791.5 352.6 L791.0 352.6 L790.5 352.6 L790.0 352.6 L789.5 352.6 L789.0 352.6 L788.5 352.6 L788.0 352.6 L787.5 352.6 L787.0 352.6 L786.5 352.6 L786.0 352.6 L785.5 352.6 L785.0 352.6 L784.5 352.6 L784.0 352.6 L783.5 352.6 L783.0 352.6 L782.5 352.6 L782.0 352.6 L781.5 352.6 L781.0 352.6 L780.5 352.6 L780.0 353.3 L779.5 354.6 L779.0 355.9 L778.5 357.1 L778.0 358.3 L777.5 359.4 L777.0 360.5 L776.5 362.3 L776.0 365.2 L775.5 368.1 L775.0 370.0 L774.5 370.5 L774.0 371.0 L773.5 371.5 L773.0 372.4 L772.5 373.9 L772.0 375.5 L771.5 377.0 L771.0 377.4 L770.5 377.1 L770.0 376.7 L769.5 376.4 L769.0 376.1 L768.5 375.8 L768.0 375.5 L767.5 375.3 L767.0 375.1 L766.5 374.9 L766.0 374.7 L765.5 373.4 L765.0 371.7 L764.5 370.1 L764.0 368.4 L763.5 369.5 L763.0 370.7 L762.5 371.8 L762.0 369.8 L761.5 367.9 L761.0 365.9 L760.5 368.0 L760.0 370.0 L759.5 372.1 L759.0 373.8 L758.5 374.4 L758.0 375.0 L757.5 375.6 L757.0 376.3 L756.5 377.0 L756.0 377.8 L755.5 378.6 L755.0 378.5 L754.5 376.9 L754.0 375.3 L753.5 373.7 L753.0 373.4 L752.5 375.1 L752.0 376.7 L751.5 378.4 L751.0 378.7 L750.5 378.0 L750.0 377.3 L749.5 376.7 L749.0 376.0 L748.5 374.6 L748.0 372.8 L747.5 371.0 L747.0 369.2 L746.5 368.5 L746.0 368.1 L745.5 367.7 L745.0 367.4 L744.5 367.0 L744.0 368.4 L743.5 370.2 L743.0 372.0 L742.5 373.9 L742.0 375.7 L741.5 375.0 L741.0 374.2 L740.5 373.5 L740.0 372.7 L739.5 369.2 L739.0 365.8 L738.5 363.0 L738.0 363.2 L737.5 363.4 L737.0 363.6 L736.5 363.8 L736.0 364.7 L735.5 368.3 L735.0 371.9 L734.5 375.5 L734.0 378.1 L733.5 379.3 L733.0 380.5 L732.5 381.8 L732.0 382.9 L731.5 383.9 L731.0 385.0 L730.5 386.0 L730.0 387.0 L729.5 389.0 L729.0 391.6 L728.5 397.7 L728.0 399.8 L727.5 399.3 L727.0 391.6 L726.5 386.4 L726.0 381.1 L725.5 380.6 L725.0 381.2 L724.5 381.8 L724.0 382.4 L723.5 381.4 L723.0 379.9 L722.5 378.5 L722.0 377.1 L721.5 378.5 L721.0 379.8 L720.5 381.2 L720.0 382.5 L719.5 381.6 L719.0 380.7 L718.5 379.8 L718.0 379.5 L717.5 381.3 L717.0 383.1 L716.5 384.9 L716.0 386.7 L715.5 388.3 L715.0 389.8 L714.5 391.4 L714.0 391.9 L713.5 390.9 L713.0 390.0 L712.5 389.0 L712.0 388.0 L711.5 387.0 L711.0 386.0 L710.5 384.9 L710.0 383.9 L709.5 382.6 L709.0 381.1 L708.5 379.7 L708.0 378.2 L707.5 378.4 L707.0 379.7 L706.5 381.0 L706.0 382.2 L705.5 381.0 L705.0 379.0 L704.5 377.1 L704.0 376.9 L703.5 377.1 L703.0 377.3 L702.5 374.9 L702.0 375.1 L701.5 373.0 L701.0 373.2 L700.5 376.6 L700.0 376.8 L699.5 376.5 L699.0 376.7 L698.5 378.3 L698.0 378.6 L697.5 382.0 L697.0 382.5 L696.5 380.7 L696.0 381.2 L695.5 380.9 L695.0 381.4 L694.5 380.7 L694.0 381.2 L693.5 384.1 L693.0 384.6 L692.5 382.2 L692.0 382.7 L691.5 378.0 L691.0 377.4 L690.5 385.2 L690.0 384.5 L689.5 380.8 L689.0 380.1 L688.5 380.4 L688.0 379.7 L687.5 381.8 L687.0 381.1 L686.5 378.9 L686.0 378.2 L685.5 377.4 L685.0 378.0 L684.5 379.1 L684.0 379.8 L683.5 376.0 L683.0 376.5 L682.5 381.6 L682.0 382.2 L681.5 383.9 L681.0 384.6 L680.5 382.3 L680.0 382.9 L679.5 382.9 L679.0 382.4 L678.5 385.3 L678.0 384.8 L677.5 381.9 L677.0 381.4 L676.5 380.1 L676.0 379.6 L675.5 384.7 L675.0 386.4 L674.5 379.4 L674.0 406.3 L673.5 418.6 L673.0 422.3 L672.5 421.8 L672.0 421.3 L671.5 420.4 L671.0 419.4 L670.5 418.4 L670.0 415.2 L669.5 410.6 L669.0 407.9 L668.5 408.2 L668.0 409.9 L667.5 413.8 L667.0 416.9 L666.5 416.8 L666.0 416.6 L665.5 416.5 L665.0 416.4 L664.5 415.0 L664.0 413.6 L663.5 412.2 L663.0 410.4 L662.5 408.4 L662.0 406.3 L661.5 405.7 L661.0 407.3 L660.5 409.4 L660.0 412.1 L659.5 414.8 L659.0 417.2 L658.5 418.4 L658.0 419.7 L657.5 420.9 L657.0 419.0 L656.5 416.3 L656.0 417.4 L655.5 419.5 L655.0 421.5 L654.5 424.9 L654.0 429.3 L653.5 431.9 L653.0 431.9 L652.5 431.9 L652.0 430.8 L651.5 425.2 L651.0 419.6 L650.5 402.9 L650.0 385.1 L649.5 382.2 L649.0 381.3 L648.5 383.2 L648.0 382.3 L647.5 380.8 L647.0 381.0 L646.5 383.4 L646.0 383.6 L645.5 379.9 L645.0 380.0 L644.5 380.0 L644.0 380.1 L643.5 381.0 L643.0 381.1 L642.5 378.7 L642.0 378.8 L641.5 382.2 L641.0 381.2 L640.5 382.1 L640.0 381.0 L639.5 379.8 L639.0 378.8 L638.5 373.9 L638.0 373.1 L637.5 375.0 L637.0 373.9 L636.5 374.2 L636.0 373.2 L635.5 374.0 L635.0 375.2 L634.5 376.2 L634.0 377.4 L633.5 376.2 L633.0 377.3 L632.5 379.4 L632.0 380.5 L631.5 380.7 L631.0 381.8 L630.5 381.8 L630.0 382.8 L629.5 385.0 L629.0 384.5 L628.5 383.6 L628.0 383.1 L627.5 384.2 L627.0 383.6 L626.5 384.5 L626.0 384.0 L625.5 382.1 L625.0 381.6 L624.5 382.1 L624.0 381.6 L623.5 378.6 L623.0 377.3 L622.5 376.1 L622.0 374.8 L621.5 371.7 L621.0 370.4 L620.5 369.0 L620.0 367.7 L619.5 367.0 L619.0 365.7 L618.5 365.5 L618.0 364.1 L617.5 364.0 L617.0 365.4 L616.5 368.6 L616.0 370.2 L615.5 372.5 L615.0 374.1 L614.5 376.0 L614.0 377.7 L613.5 379.4 L613.0 381.0 L612.5 380.0 L612.0 381.5 L611.5 379.6 L611.0 378.6 L610.5 380.9 L610.0 379.8 L609.5 375.0 L609.0 374.1 L608.5 374.8 L608.0 373.8 L607.5 372.0 L607.0 371.0 L606.5 369.5 L606.0 368.5 L605.5 365.6 L605.0 364.4 L604.5 366.3 L604.0 364.9 L603.5 362.2 L603.0 360.9 L602.5 360.0 L602.0 358.7 L601.5 357.3 L601.0 356.3 L600.5 354.9 L600.0 353.6 L599.5 353.6 L599.0 353.6 L598.5 353.6 L598.0 353.6 L597.5 353.6 L597.0 353.6 L596.5 353.6 L596.0 353.6 L595.5 353.6 L595.0 353.6 L594.5 353.6 L594.0 353.6 L593.5 353.6 L593.0 353.6 L592.5 353.6 L592.0 353.6 L591.5 353.6 L591.0 353.6 L590.5 353.6 L590.0 353.6 L589.5 353.6 L589.0 353.6 L588.5 353.6 L588.0 353.6 L587.5 353.6 L587.0 353.6 L586.5 353.6 L586.0 353.6 L585.5 353.6 L585.0 353.6 L584.5 353.6 L584.0 353.6 L583.5 353.6 L583.0 353.6 L582.5 353.6 L582.0 353.6 L581.5 353.6 L581.0 353.6 L580.5 353.6 L580.0 353.6 L579.5 353.6 L579.0 353.6 L578.5 353.6 L578.0 353.6 L577.5 353.6 L577.0 353.6 L576.5 353.6 L576.0 353.6 L575.5 353.6 L575.0 353.6 L574.5 353.6 L574.0 353.6 L573.5 353.6 L573.0 353.6 L572.5 353.6 L572.0 353.6 L571.5 353.6 L571.0 353.6 L570.5 353.6 L570.0 353.6 L569.5 353.6 L569.0 353.6 L568.5 353.6 L568.0 353.6 L567.5 353.6 L567.0 353.6 L566.5 353.6 L566.0 353.6 L565.5 353.6 L565.0 353.6 L564.5 353.6 L564.0 353.6 L563.5 353.6 L563.0 353.6 L562.5 353.6 L562.0 353.6 L561.5 354.1 L561.0 354.6 L560.5 355.1 L560.0 355.6 L559.5 356.1 L559.0 356.6 L558.5 357.1 L558.0 357.0 L557.5 357.8 L557.0 358.3 L556.5 358.7 L556.0 359.2 L555.5 361.6 L555.0 363.5 L554.5 364.0 L554.0 365.7 L553.5 369.3 L553.0 371.2 L552.5 371.1 L552.0 372.8 L551.5 375.5 L551.0 377.3 L550.5 378.2 L550.0 379.9 L549.5 382.7 L549.0 381.9 L548.5 378.2 L548.0 377.4 L547.5 374.4 L547.0 373.7 L546.5 374.1 L546.0 373.3 L545.5 373.9 L545.0 373.0 L544.5 370.0 L544.0 369.2 L543.5 374.4 L543.0 376.5 L542.5 377.7 L542.0 379.7 L541.5 380.7 L541.0 401.6 L540.5 401.6 L540.0 389.2 L539.5 385.6 L539.0 385.6 L538.5 387.3 L538.0 387.3 L537.5 384.5 L537.0 384.0 L536.5 386.6 L536.0 386.1 L535.5 379.4 L535.0 378.9 L534.5 381.8 L534.0 381.3 L533.5 383.1 L533.0 382.6 L532.5 381.1 L532.0 380.6 L531.5 380.1 L531.0 379.3 L530.5 380.8 L530.0 379.9 L529.5 378.0 L529.0 377.2 L528.5 371.4 L528.0 370.8 L527.5 375.8 L527.0 374.9 L526.5 370.9 L526.0 370.1 L525.5 370.5 L525.0 369.0 L524.5 366.2 L524.0 364.8 L523.5 363.3 L523.0 361.9 L522.5 361.1 L522.0 359.6 L521.5 357.2 L521.0 356.6 L520.5 355.1 L520.0 353.6 L519.5 353.6 L519.0 353.6 L518.5 353.6 L518.0 353.6 L517.5 353.6 L517.0 353.6 L516.5 353.6 L516.0 353.6 L515.5 353.6 L515.0 353.6 L514.5 353.6 L514.0 353.6 L513.5 353.6 L513.0 353.6 L512.5 353.6 L512.0 353.6 L511.5 353.6 L511.0 353.6 L510.5 353.6 L510.0 353.6 L509.5 353.6 L509.0 353.6 L508.5 353.6 L508.0 353.6 L507.5 353.6 L507.0 353.6 L506.5 353.6 L506.0 353.6 L505.5 353.6 L505.0 353.6 L504.5 353.6 L504.0 353.6 L503.5 353.6 L503.0 353.6 L502.5 353.6 L502.0 353.6 L501.5 353.6 L501.0 353.6 L500.5 353.6 L500.0 353.6 L499.5 353.6 L499.0 353.6 L498.5 353.6 L498.0 353.6 L497.5 353.6 L497.0 353.6 L496.5 353.6 L496.0 353.6 L495.5 353.6 L495.0 353.6 L494.5 353.6 L494.0 353.6 L493.5 353.6 L493.0 353.6 L492.5 353.6 L492.0 353.6 L491.5 353.6 L491.0 353.6 L490.5 353.6 L490.0 353.6 L489.5 353.9 L489.0 354.1 L488.5 354.4 L488.0 354.6 L487.5 354.9 L487.0 355.1 L486.5 355.4 L486.0 355.6 L485.5 355.9 L485.0 356.1 L484.5 356.4 L484.0 356.6 L483.5 356.9 L483.0 357.1 L482.5 357.4 L482.0 357.4 L481.5 359.5 L481.0 361.4 L480.5 363.2 L480.0 365.0 L479.5 366.6 L479.0 368.5 L478.5 371.1 L478.0 373.0 L477.5 370.1 L477.0 371.6 L476.5 378.5 L476.0 380.4 L475.5 379.9 L475.0 378.9 L474.5 376.0 L474.0 375.0 L473.5 375.4 L473.0 374.4 L472.5 374.0 L472.0 372.9 L471.5 369.6 L471.0 368.7 L470.5 365.2 L470.0 364.4 L469.5 368.3 L469.0 369.8 L468.5 373.2 L468.0 375.0 L467.5 375.0 L467.0 376.6 L466.5 378.1 L466.0 379.7 L465.5 384.8 L465.0 386.6 L464.5 386.6 L464.0 388.3 L463.5 388.0 L463.0 386.6 L462.5 381.4 L462.0 380.1 L461.5 380.1 L461.0 378.9 L460.5 376.6 L460.0 375.3 L459.5 375.2 L459.0 373.8 L458.5 373.0 L458.0 371.7 L457.5 373.7 L457.0 374.9 L456.5 374.2 L456.0 375.4 L455.5 375.4 L455.0 376.4 L454.5 381.0 L454.0 382.3 L453.5 381.8 L453.0 383.0 L452.5 382.2 L452.0 383.3 L451.5 386.9 L451.0 386.0 L450.5 381.8 L450.0 381.0 L449.5 375.9 L449.0 375.2 L448.5 380.6 L448.0 379.7 L447.5 376.7 L447.0 375.9 L446.5 377.8 L446.0 376.9 L445.5 372.0 L445.0 370.3 L444.5 371.7 L444.0 369.8 L443.5 367.5 L443.0 365.6 L442.5 362.6 L442.0 360.8 L441.5 358.7 L441.0 357.3 L440.5 355.4 L440.0 353.6 L439.5 353.6 L439.0 353.6 L438.5 353.6 L438.0 353.6 L437.5 353.6 L437.0 353.6 L436.5 353.6 L436.0 353.6 L435.5 353.6 L435.0 353.6 L434.5 353.6 L434.0 353.6 L433.5 353.6 L433.0 353.6 L432.5 353.6 L432.0 353.6 L431.5 353.6 L431.0 353.6 L430.5 353.6 L430.0 353.6 L429.5 353.6 L429.0 353.6 L428.5 353.6 L428.0 353.6 L427.5 353.6 L427.0 353.6 L426.5 353.6 L426.0 353.6 L425.5 353.6 L425.0 353.6 L424.5 353.6 L424.0 353.6 L423.5 353.6 L423.0 353.6 L422.5 353.6 L422.0 353.6 L421.5 353.6 L421.0 353.6 L420.5 353.6 L420.0 353.6 L419.5 353.9 L419.0 354.2 L418.5 354.5 L418.0 354.8 L417.5 355.1 L417.0 355.4 L416.5 355.7 L416.0 356.0 L415.5 356.3 L415.0 356.6 L414.5 356.9 L414.0 357.2 L413.5 357.5 L413.0 358.0 L412.5 357.9 L412.0 358.2 L411.5 359.1 L411.0 359.5 L410.5 359.9 L410.0 360.2 L409.5 360.6 L409.0 362.3 L408.5 366.1 L408.0 368.1 L407.5 366.5 L407.0 368.1 L406.5 373.8 L406.0 375.8 L405.5 374.7 L405.0 376.4 L404.5 381.5 L404.0 383.4 L403.5 381.6 L403.0 380.5 L402.5 378.1 L402.0 377.1 L401.5 374.8 L401.0 373.8 L400.5 373.5 L400.0 372.5 L399.5 372.2 L399.0 371.2 L398.5 367.3 L398.0 366.5 L397.5 370.5 L397.0 371.7 L396.5 372.4 L396.0 373.5 L395.5 376.4 L395.0 377.6 L394.5 373.9 L394.0 374.9 L393.5 377.9 L393.0 379.0 L392.5 379.8 L392.0 380.8 L391.5 382.4 L391.0 381.5 L390.5 381.1 L390.0 380.1 L389.5 379.0 L389.0 378.0 L388.5 377.9 L388.0 376.8 L387.5 375.2 L387.0 374.2 L386.5 369.9 L386.0 369.0 L385.5 370.4 L385.0 368.8 L384.5 366.0 L384.0 364.6 L383.5 363.3 L383.0 361.9 L382.5 360.5 L382.0 359.1 L381.5 357.5 L381.0 356.6 L380.5 355.1 L380.0 353.6 L379.5 353.6 L379.0 353.6 L378.5 353.6 L378.0 353.6 L377.5 353.6 L377.0 353.6 L376.5 353.6 L376.0 353.6 L375.5 353.6 L375.0 353.6 L374.5 353.6 L374.0 353.6 L373.5 353.6 L373.0 353.6 L372.5 353.6 L372.0 353.6 L371.5 353.6 L371.0 353.6 L370.5 353.6 L370.0 353.6 L369.5 353.6 L369.0 353.6 L368.5 353.6 L368.0 353.6 L367.5 353.6 L367.0 353.6 L366.5 353.6 L366.0 353.6 L365.5 353.6 L365.0 353.6 L364.5 353.6 L364.0 353.6 L363.5 353.6 L363.0 353.6 L362.5 353.6 L362.0 353.6 L361.5 354.3 L361.0 354.9 L360.5 355.6 L360.0 356.3 L359.5 356.9 L359.0 356.9 L358.5 358.2 L358.0 358.9 L357.5 359.7 L357.0 360.4 L356.5 360.7 L356.0 361.3 L355.5 362.3 L355.0 363.8 L354.5 367.8 L354.0 369.6 L353.5 369.4 L353.0 371.0 L352.5 372.7 L352.0 374.3 L351.5 377.2 L351.0 378.9 L350.5 378.0 L350.0 379.6 L349.5 382.9 L349.0 382.2 L348.5 377.2 L348.0 376.6 L347.5 373.2 L347.0 372.7 L346.5 378.1 L346.0 377.4 L345.5 373.9 L345.0 373.2 L344.5 374.5 L344.0 373.8 L343.5 376.7 L343.0 378.0 L342.5 377.7 L342.0 378.9 L341.5 377.9 L341.0 379.0 L340.5 380.4 L340.0 381.6 L339.5 383.9 L339.0 385.0 L338.5 379.2 L338.0 380.2 L337.5 386.5 L337.0 386.0 L336.5 384.2 L336.0 383.7 L335.5 386.2 L335.0 385.7 L334.5 385.6 L334.0 385.1 L333.5 385.9 L333.0 385.4 L332.5 379.6 L332.0 379.1 L331.5 383.5 L331.0 383.8 L330.5 379.9 L330.0 380.1 L329.5 380.5 L329.0 380.7 L328.5 382.1 L328.0 382.3 L327.5 384.8 L327.0 385.1 L326.5 383.9 L326.0 384.2 L325.5 384.5 L325.0 384.7 L324.5 404.0 L324.0 410.1 L323.5 410.1 L323.0 386.5 L322.5 386.7 L322.0 386.7 L321.5 387.1 L321.0 387.1 L320.5 387.7 L320.0 402.6 L319.5 402.6 L319.0 396.9 L318.5 384.8 L318.0 384.8 L317.5 384.1 L317.0 384.1 L316.5 387.8 L316.0 387.8 L315.5 388.0 L315.0 388.0 L314.5 384.1 L314.0 384.1 L313.5 383.4 L313.0 383.4 L312.5 386.5 L312.0 386.5 L311.5 391.4 L311.0 398.1 L310.5 398.1 L310.0 392.9 L309.5 385.2 L309.0 385.2 L308.5 386.3 L308.0 386.3 L307.5 386.7 L307.0 386.7 L306.5 390.1 L306.0 390.1 L305.5 386.1 L305.0 386.1 L304.5 386.3 L304.0 386.3 L303.5 388.3 L303.0 387.1 L302.5 386.7 L302.0 385.5 L301.5 384.4 L301.0 383.1 L300.5 380.8 L300.0 379.6 L299.5 378.5 L299.0 377.2 L298.5 375.0 L298.0 373.8 L297.5 374.0 L297.0 374.9 L296.5 377.0 L296.0 377.8 L295.5 379.4 L295.0 380.3 L294.5 377.0 L294.0 377.7 L293.5 382.6 L293.0 383.5 L292.5 381.8 L292.0 382.6 L291.5 384.3 L291.0 382.9 L290.5 375.8 L290.0 374.6 L289.5 376.8 L289.0 375.5 L288.5 375.6 L288.0 374.2 L287.5 370.8 L287.0 369.5 L286.5 367.6 L286.0 366.4 L285.5 369.5 L285.0 371.4 L284.5 373.8 L284.0 375.7 L283.5 373.2 L283.0 374.8 L282.5 375.5 L282.0 377.0 L281.5 383.1 L281.0 384.9 L280.5 389.0 L280.0 390.9 L279.5 390.6 L279.0 389.4 L278.5 388.2 L278.0 387.0 L277.5 379.0 L277.0 378.0 L276.5 382.0 L276.0 380.8 L275.5 380.0 L275.0 378.8 L274.5 377.1 L274.0 375.9 L273.5 378.5 L273.0 380.1 L272.5 379.2 L272.0 380.6 L271.5 381.9 L271.0 383.4 L270.5 382.9 L270.0 384.2 L269.5 382.6 L269.0 383.9 L268.5 392.1 L268.0 393.6 L267.5 392.6 L267.0 391.6 L266.5 391.2 L266.0 390.2 L265.5 388.1 L265.0 387.1 L264.5 380.0 L264.0 379.2 L263.5 380.3 L263.0 379.5 L262.5 379.8 L262.0 378.9 L261.5 380.3 L261.0 380.8 L260.5 385.0 L260.0 385.5 L259.5 386.5 L259.0 387.0 L258.5 378.1 L258.0 378.5 L257.5 383.8 L257.0 384.2 L256.5 381.3 L256.0 381.7 L255.5 380.3 L255.0 379.4 L254.5 386.7 L254.0 385.4 L253.5 380.5 L253.0 379.4 L252.5 380.8 L252.0 379.6 L251.5 376.9 L251.0 375.7 L250.5 374.6 L250.0 373.4 L249.5 368.8 L249.0 366.6 L248.5 365.3 L248.0 362.9 L247.5 360.6 L247.0 358.2 L246.5 356.1 L246.0 353.6 L245.5 353.6 L245.0 353.6 L244.5 353.6 L244.0 353.6 L243.5 353.6 L243.0 353.6 L242.5 353.6 L242.0 353.6 L241.5 353.6 L241.0 353.6 L240.5 353.6 L240.0 353.6 L239.5 353.6 L239.0 353.6 L238.5 353.6 L238.0 353.6 L237.5 354.3 L237.0 354.9 L236.5 355.6 L236.0 356.3 L235.5 356.9 L235.0 357.4 L234.5 358.5 L234.0 359.2 L233.5 359.3 L233.0 359.9 L232.5 360.2 L232.0 360.9 L231.5 363.0 L231.0 364.7 L230.5 368.3 L230.0 370.2 L229.5 372.4 L229.0 374.4 L228.5 374.7 L228.0 376.5 L227.5 378.3 L227.0 380.1 L226.5 383.2 L226.0 385.1 L225.5 383.0 L225.0 382.0 L224.5 375.0 L224.0 374.2 L223.5 377.2 L223.0 376.2 L222.5 376.1 L222.0 375.1 L221.5 375.6 L221.0 374.6 L220.5 372.3 L220.0 371.3 L219.5 374.0 L219.0 376.0 L218.5 379.9 L218.0 382.1 L217.5 380.6 L217.0 382.5 L216.5 384.0 L216.0 385.9 L215.5 384.3 L215.0 383.6 L214.5 388.2 L214.0 387.4 L213.5 386.7 L213.0 385.9 L212.5 379.1 L212.0 378.4 L211.5 378.1 L211.0 376.2 L210.5 370.9 L210.0 369.3 L209.5 370.7 L209.0 368.8 L208.5 367.8 L208.0 365.7 L207.5 368.5 L207.0 371.1 L206.5 374.4 L206.0 377.1 L205.5 377.8 L205.0 380.3 L204.5 381.3 L204.0 383.7 L203.5 382.2 L203.0 381.5 L202.5 381.7 L202.0 381.0 L201.5 384.5 L201.0 383.6 L200.5 381.7 L200.0 380.9 L199.5 382.3 L199.0 381.6 L198.5 382.6 L198.0 383.6 L197.5 383.5 L197.0 383.4 L196.5 383.3 L196.0 383.2 L195.5 383.1 L195.0 383.0 L194.5 382.9 L194.0 382.8 L193.5 382.7 L193.0 382.6 L192.5 382.2 L192.0 381.8 L191.5 377.1 L191.0 369.6 L190.5 376.6 L190.0 383.6 L189.5 383.6 L189.0 383.6 L188.5 383.6 L188.0 383.6 L187.5 383.6 L187.0 383.6 L186.5 383.6 L186.0 383.6 L185.5 377.9 L185.0 362.4 L184.5 353.6 L184.0 353.6 L183.5 353.6 L183.0 353.6 L182.5 353.6 L182.0 353.6 L181.5 353.6 L181.0 353.6 L180.5 353.6 L180.0 353.6 L179.5 353.6 L179.0 375.0 L178.5 383.6 L178.0 383.6 L177.5 383.6 L177.0 383.6 L176.5 383.6 L176.0 383.6 L175.5 383.6 L175.0 383.6 L174.5 383.6 L174.0 383.6 L173.5 383.6 L173.0 378.6 L172.5 365.6 L172.0 353.6 L171.5 353.6 L171.0 353.6 L170.5 353.6 L170.0 353.6 L169.5 364.4 L169.0 376.1 L168.5 383.6 L168.0 383.6 L167.5 383.6 L167.0 383.6 L166.5 383.6 L166.0 383.6 L165.5 383.6 L165.0 383.6 L164.5 383.6 L164.0 383.6 L163.5 383.0 L163.0 382.4 L162.5 381.7 L162.0 374.9 L161.5 375.6 L161.0 380.1 L160.5 381.4 L160.0 382.6 L159.5 382.3 L159.0 382.1 L158.5 381.8 L158.0 387.9 L157.5 400.6 L157.0 387.9 L156.5 354.6 L156.0 354.9 L155.5 355.1 L155.0 355.3 L154.5 355.5 L154.0 355.7 L153.5 355.9 L153.0 356.2 L152.5 356.4 L152.0 356.6 L151.5 356.5 L151.0 356.4 L150.5 356.2 L150.0 356.1 L149.5 356.0 L149.0 355.9 L148.5 355.7 L148.0 355.6 L147.5 356.0 L147.0 356.4 L146.5 356.8 L146.0 357.2 L145.5 357.6 L145.0 359.1 L144.5 360.7 L144.0 362.2 L143.5 365.7 L143.0 370.4 L142.5 375.2 L142.0 380.0 L141.5 384.8 L141.0 389.6 L140.5 394.4 L140.0 399.2 L139.5 404.0 L139.0 408.2 L138.5 412.2 L138.0 415.0 L137.5 416.4 L137.0 416.8 L136.5 417.2 L136.0 417.6 L135.5 419.9 L135.0 422.2 L134.5 423.9 L134.0 424.6 L133.5 418.8 L133.0 411.6 L132.5 404.1 L132.0 396.6 L131.5 390.3 L131.0 384.7 L130.5 382.5 L130.0 381.1 L129.5 379.7 L129.0 378.3 L128.5 377.1 L128.0 375.8 L127.5 374.6 L127.0 375.9 L126.5 377.3 L126.0 378.6 L125.5 377.7 L125.0 376.8 L124.5 379.4 L124.0 382.8 L123.5 386.2 L123.0 389.4 L122.5 390.4 L122.0 382.5 L121.5 374.6 L121.0 366.8 L120.5 356.1 L120.0 353.7 L119.5 353.8 L119.0 353.9 L118.5 354.0 L118.0 354.1 L117.5 354.2 L117.0 354.3 L116.5 354.4 L116.0 354.6 L115.5 362.1 L115.0 370.5 L114.5 372.7 L114.0 374.2 L113.5 375.6 L113.0 406.6 L112.5 433.0 L112.0 447.1 L111.5 452.9 L111.0 454.1 L110.5 454.1 L110.0 452.9 L109.5 450.4 L109.0 449.5 L108.5 448.6 L108.0 449.6 L107.5 450.6 L107.0 451.1 L106.5 451.5 L106.0 451.9 L105.5 452.3 L105.0 452.6 L104.5 453.0 L104.0 453.4 L103.5 453.7 L103.0 454.1 L102.5 453.5 L102.0 450.6 L101.5 450.6 L101.0 450.6 L100.5 450.6 L100.0 450.6 L99.5 451.2 L99.0 451.9 L98.5 452.5 L98.0 453.0 L97.5 453.4 L97.0 453.9 L96.5 454.1 L96.0 454.1 L95.5 451.6 L95.0 449.1 L94.5 448.6 L94.0 448.6 L93.5 448.6 L93.0 448.6 L92.5 448.8 L92.0 449.8 L91.5 451.0 L91.0 453.2 L90.5 454.1 L90.0 454.1 L89.5 454.1 L89.0 449.1 L88.5 436.6 L88.0 422.7 L87.5 406.6 L87.0 381.6 L86.5 353.6 L86.0 352.4 L85.5 352.4 L85.0 352.4 L84.5 352.4 L84.0 352.4 L83.5 352.4 L83.0 352.4 L82.5 352.4 L82.0 352.4 L81.5 352.4 L81.0 352.4 L80.5 352.4 L80.0 352.4 L79.5 352.4 L79.0 352.4 L78.5 352.4 L78.0 352.4 L77.5 352.4 L77.0 352.4 L76.5 352.4 L76.0 352.4 L75.5 352.4 L75.0 352.4 L74.5 352.4 L74.0 352.4 L73.5 352.4 L73.0 352.4 L72.5 352.4 L72.0 352.4 L71.5 352.4 L71.0 352.4 L70.5 352.4 L70.0 352.4 L69.5 352.4 L69.0 352.4 L68.5 352.4 L68.0 352.4 L67.5 352.4 L67.0 352.4 L66.5 352.4 L66.0 352.4 L65.5 352.4 L65.0 352.4 L64.5 352.4 L64.0 352.4 L63.5 352.4 L63.0 352.4 L62.5 352.4 L62.0 352.4 L61.5 352.4 L61.0 352.4 L60.5 352.4 L60.0 352.4 L59.5 352.4 L59.0 352.4 L58.5 352.4 L58.0 352.4 L57.5 352.4 L57.0 352.4 L56.5 352.4 L56.0 352.4 L55.5 352.4 L55.0 352.4 L54.5 352.4 L54.0 352.4 L53.5 352.4 L53.0 352.4 L52.5 352.4 L52.0 352.4 L51.5 352.4 L51.0 352.4 L50.5 352.4 L50.0 352.4 L49.5 352.4 L49.0 352.4 L48.5 352.4 L48.0 352.4 L47.5 352.4 L47.0 352.4 L46.5 352.4 L46.0 352.4 L45.5 352.4 L45.0 352.4 L44.5 352.4 L44.0 352.4 L43.5 352.4 L43.0 352.4 L42.5 352.4 L42.0 352.4 L41.5 352.4 L41.0 352.4 L40.5 352.4 L40.0 352.4 L39.5 352.4 L39.0 352.4 L38.5 352.4 L38.0 352.4 L37.5 352.4 L37.0 352.4 L36.5 352.4 L36.0 352.4 L35.5 352.4 L35.0 352.4 L34.5 352.4 L34.0 352.4 L33.5 352.4 L33.0 352.4 L32.5 352.4 L32.0 352.4 L31.5 352.4 L31.0 352.4 L30.5 352.4 L30.0 352.4 L29.5 352.4 L29.0 352.4 L28.5 352.4 L28.0 352.4 L27.5 352.4 L27.0 352.4 L26.5 352.4 L26.0 352.4 L25.5 352.4 L25.0 352.4 L24.5 352.4 L24.0 352.4 L23.5 352.4 L23.0 352.4 L22.5 352.4 L22.0 352.4 L21.5 352.4 L21.0 352.4 L20.5 352.4 L20.0 352.4 L19.5 352.4 L19.0 352.4 L18.5 352.4 L18.0 352.4 L17.5 352.4 L17.0 352.4 L16.5 352.4 L16.0 352.4 L15.5 352.4 L15.0 352.4 L14.5 352.4 L14.0 352.4 L13.5 352.4 L13.0 352.4 L12.5 352.4 L12.0 352.4 L11.5 352.4 L11.0 352.4 L10.5 352.4 L10.0 352.4 L9.5 352.4 L9.0 352.4 L8.5 352.4 L8.0 352.4 L7.5 352.4 L7.0 352.4 L6.5 352.4 L6.0 352.4 L5.5 352.4 L5.0 352.4 L4.5 352.4 L4.0 352.4 L3.5 352.4 L3.0 352.4 L2.5 352.4 L2.0 352.4 L1.5 352.4 L1.0 352.4 L0.5 352.4 L0.0 352.4 Z" fill="#4fb1e4"/>
<rect x="-4" y="350.65" width="1000" height="1.2" fill="#4fb1e4"/>
<ellipse cx="14.6" cy="351.6" rx="1.5" ry="2.2" fill="#4fb1e4"/>
<ellipse cx="20.2" cy="351.6" rx="1.6" ry="2.6" fill="#4fb1e4"/>
<ellipse cx="30.3" cy="351.6" rx="1.5" ry="2.2" fill="#4fb1e4"/>
<ellipse cx="47.8" cy="351.6" rx="1.0" ry="1.4" fill="#4fb1e4"/>
<ellipse cx="800.0" cy="351.6" rx="0.9" ry="2.4" fill="#4fb1e4"/>
<ellipse cx="806.0" cy="351.6" rx="0.8" ry="1.6" fill="#4fb1e4"/>
<ellipse cx="811.5" cy="351.6" rx="1.6" ry="3.2" fill="#4fb1e4"/>
<ellipse cx="820.0" cy="351.6" rx="2.2" ry="4.2" fill="#4fb1e4"/>
<ellipse cx="840.7" cy="351.6" rx="2.1" ry="3.4" fill="#4fb1e4"/>
<ellipse cx="852.0" cy="351.6" rx="1.2" ry="1.2" fill="#4fb1e4"/>
<rect x="929.6" y="347.1" width="0.9" height="9" fill="#4fb1e4" opacity="0.8"/>
<polygon points="93.7,359.6 92.8,406.6 92.7,455.6 94.9,455.6 94.8,406.6" fill="#485963"/>
<polygon points="104.1,357.6 103.2,401.6 103.2,455.6 105.7,455.6 105.4,401.6" fill="#485963"/>
<polygon points="101.9,429.6 98.6,455.6 101.9,455.6" fill="#485963" opacity="0.65"/>
<polygon points="107.4,396.6 107,455.6 108.3,455.6 107.9,411.6" fill="#485963" opacity="0.8"/>
<rect x="102.2" y="408.6" width="0.8" height="46" fill="#8cc0de" opacity="0.8"/>
<rect x="106.1" y="402.6" width="0.6" height="52" fill="#8cc0de" opacity="0.7"/>
<rect x="93.2" y="288.6" width="0.6" height="72" fill="#485963" opacity="0.45"/>
<rect x="101.8" y="295.6" width="0.6" height="64" fill="#485963" opacity="0.45"/>
<path d="M781 348.6 L782.5 355.6 L786 356.6 L789 354.6 L791 350.6 L795 350.1" stroke="#9ccbe8" stroke-width="0.6" opacity="0.8" fill="none"/>
<path d="M114.5 352.6 L116 357.6 L117 348.6 L118.5 347.6 L119.5 354.6 L120.5 351.6" stroke="#9ccbe8" stroke-width="0.6" opacity="0.8" fill="none"/>
<path d="M146 352.6 L148.5 347.6 L150 356.6 L152 353.6 L154 349.6 L156 351.6" stroke="#9ccbe8" stroke-width="0.6" opacity="0.8" fill="none"/>
<rect x="996" y="-4" width="34" height="476" fill="#6c7f9a"/>
<rect x="994.7" y="17" width="1.1" height="444" fill="#36404a" opacity="0.75"/>
<rect x="995.8" y="2" width="1.3" height="464" fill="#a9b8c8"/>
<rect x="1021.8" y="15.5" width="8" height="456" fill="#464d59"/>
<rect x="1020.9" y="15.5" width="0.7" height="451" fill="#76879b"/>
<rect x="997" y="24.4" width="4.6" height="0.9" fill="#c3ced9"/>
<text x="1004" y="27.0" font-size="6.2" fill="#a2b3c8">0</text>
<rect x="997" y="229.7" width="4.6" height="0.9" fill="#c3ced9"/>
<text x="1004" y="232.3" font-size="6.2" fill="#a2b3c8">0</text>
<rect x="997" y="45.8" width="4.6" height="0.9" fill="#c3ced9"/>
<text x="1004" y="48.4" font-size="6.2" fill="#a2b3c8">-2</text>
<rect x="997" y="208.4" width="4.6" height="0.9" fill="#c3ced9"/>
<text x="1004" y="211.0" font-size="6.2" fill="#a2b3c8">-2</text>
<rect x="997" y="62.1" width="4.6" height="0.9" fill="#c3ced9"/>
<text x="1004" y="64.8" font-size="6.2" fill="#a2b3c8">-4</text>
<rect x="997" y="192.0" width="4.6" height="0.9" fill="#c3ced9"/>
<text x="1004" y="194.6" font-size="6.2" fill="#a2b3c8">-4</text>
<rect x="997" y="75.8" width="4.6" height="0.9" fill="#c3ced9"/>
<text x="1004" y="78.5" font-size="6.2" fill="#a2b3c8">-6</text>
<rect x="997" y="178.2" width="4.6" height="0.9" fill="#c3ced9"/>
<text x="1004" y="180.9" font-size="6.2" fill="#a2b3c8">-6</text>
<rect x="997" y="95.2" width="4.6" height="0.9" fill="#c3ced9"/>
<text x="1004" y="97.9" font-size="6.2" fill="#a2b3c8">-10</text>
<rect x="997" y="158.9" width="4.6" height="0.9" fill="#c3ced9"/>
<text x="1004" y="161.5" font-size="6.2" fill="#a2b3c8">-10</text>
<rect x="997" y="111.8" width="4.6" height="0.9" fill="#c3ced9"/>
<text x="1004" y="114.5" font-size="6.2" fill="#a2b3c8">-16</text>
<rect x="997" y="142.2" width="4.6" height="0.9" fill="#c3ced9"/>
<text x="1004" y="144.9" font-size="6.2" fill="#a2b3c8">-16</text>
<rect x="997" y="126.5" width="4.6" height="0.9" fill="#c3ced9"/>
<text x="1004" y="129.2" font-size="6.2" fill="#a2b3c8">-∞</text>
<rect x="997" y="35.1" width="2.2" height="0.7" fill="#9fb0c1"/>
<rect x="997" y="219.1" width="2.2" height="0.7" fill="#9fb0c1"/>
<rect x="997" y="54.1" width="2.2" height="0.7" fill="#9fb0c1"/>
<rect x="997" y="200.1" width="2.2" height="0.7" fill="#9fb0c1"/>
<rect x="997" y="69.1" width="2.2" height="0.7" fill="#9fb0c1"/>
<rect x="997" y="185.1" width="2.2" height="0.7" fill="#9fb0c1"/>
<rect x="997" y="82.6" width="2.2" height="0.7" fill="#9fb0c1"/>
<rect x="997" y="171.6" width="2.2" height="0.7" fill="#9fb0c1"/>
<rect x="997" y="89.1" width="2.2" height="0.7" fill="#9fb0c1"/>
<rect x="997" y="165.1" width="2.2" height="0.7" fill="#9fb0c1"/>
<rect x="997" y="101.6" width="2.2" height="0.7" fill="#9fb0c1"/>
<rect x="997" y="152.6" width="2.2" height="0.7" fill="#9fb0c1"/>
<rect x="997" y="106.6" width="2.2" height="0.7" fill="#9fb0c1"/>
<rect x="997" y="147.6" width="2.2" height="0.7" fill="#9fb0c1"/>
<rect x="997" y="117.1" width="2.2" height="0.7" fill="#9fb0c1"/>
<rect x="997" y="137.1" width="2.2" height="0.7" fill="#9fb0c1"/>
<rect x="997" y="121.6" width="2.2" height="0.7" fill="#9fb0c1"/>
<rect x="997" y="132.6" width="2.2" height="0.7" fill="#9fb0c1"/>
<rect x="997" y="248.7" width="4.6" height="0.9" fill="#c3ced9"/>
<text x="1004" y="251.3" font-size="6.2" fill="#a2b3c8">0</text>
<rect x="997" y="454.0" width="4.6" height="0.9" fill="#c3ced9"/>
<text x="1004" y="456.7" font-size="6.2" fill="#a2b3c8">0</text>
<rect x="997" y="270.1" width="4.6" height="0.9" fill="#c3ced9"/>
<text x="1004" y="272.7" font-size="6.2" fill="#a2b3c8">-2</text>
<rect x="997" y="432.7" width="4.6" height="0.9" fill="#c3ced9"/>
<text x="1004" y="435.3" font-size="6.2" fill="#a2b3c8">-2</text>
<rect x="997" y="286.4" width="4.6" height="0.9" fill="#c3ced9"/>
<text x="1004" y="289.1" font-size="6.2" fill="#a2b3c8">-4</text>
<rect x="997" y="416.3" width="4.6" height="0.9" fill="#c3ced9"/>
<text x="1004" y="418.9" font-size="6.2" fill="#a2b3c8">-4</text>
<rect x="997" y="300.2" width="4.6" height="0.9" fill="#c3ced9"/>
<text x="1004" y="302.8" font-size="6.2" fill="#a2b3c8">-6</text>
<rect x="997" y="402.6" width="4.6" height="0.9" fill="#c3ced9"/>
<text x="1004" y="405.2" font-size="6.2" fill="#a2b3c8">-6</text>
<rect x="997" y="319.6" width="4.6" height="0.9" fill="#c3ced9"/>
<text x="1004" y="322.2" font-size="6.2" fill="#a2b3c8">-10</text>
<rect x="997" y="383.2" width="4.6" height="0.9" fill="#c3ced9"/>
<text x="1004" y="385.8" font-size="6.2" fill="#a2b3c8">-10</text>
<rect x="997" y="336.2" width="4.6" height="0.9" fill="#c3ced9"/>
<text x="1004" y="338.8" font-size="6.2" fill="#a2b3c8">-16</text>
<rect x="997" y="366.6" width="4.6" height="0.9" fill="#c3ced9"/>
<text x="1004" y="369.2" font-size="6.2" fill="#a2b3c8">-16</text>
<rect x="997" y="350.9" width="4.6" height="0.9" fill="#c3ced9"/>
<text x="1004" y="353.5" font-size="6.2" fill="#a2b3c8">-∞</text>
<rect x="997" y="259.4" width="2.2" height="0.7" fill="#9fb0c1"/>
<rect x="997" y="443.4" width="2.2" height="0.7" fill="#9fb0c1"/>
<rect x="997" y="278.4" width="2.2" height="0.7" fill="#9fb0c1"/>
<rect x="997" y="424.4" width="2.2" height="0.7" fill="#9fb0c1"/>
<rect x="997" y="293.4" width="2.2" height="0.7" fill="#9fb0c1"/>
<rect x="997" y="409.4" width="2.2" height="0.7" fill="#9fb0c1"/>
<rect x="997" y="306.9" width="2.2" height="0.7" fill="#9fb0c1"/>
<rect x="997" y="395.9" width="2.2" height="0.7" fill="#9fb0c1"/>
<rect x="997" y="313.4" width="2.2" height="0.7" fill="#9fb0c1"/>
<rect x="997" y="389.4" width="2.2" height="0.7" fill="#9fb0c1"/>
<rect x="997" y="325.9" width="2.2" height="0.7" fill="#9fb0c1"/>
<rect x="997" y="376.9" width="2.2" height="0.7" fill="#9fb0c1"/>
<rect x="997" y="330.9" width="2.2" height="0.7" fill="#9fb0c1"/>
<rect x="997" y="371.9" width="2.2" height="0.7" fill="#9fb0c1"/>
<rect x="997" y="341.4" width="2.2" height="0.7" fill="#9fb0c1"/>
<rect x="997" y="361.4" width="2.2" height="0.7" fill="#9fb0c1"/>
<rect x="997" y="345.9" width="2.2" height="0.7" fill="#9fb0c1"/>
<rect x="997" y="356.9" width="2.2" height="0.7" fill="#9fb0c1"/>
<text x="1005" y="8.6" font-size="6" fill="#a2b3c8">dB</text>
<g id="dialog" opacity="0.999">
<rect x="194.60" y="75.90" width="510.80" height="320.70" fill="#2f3942" opacity="0.5"/>
<rect x="195.30" y="76.50" width="509.40" height="319.20" fill="#36404a" opacity="0.75"/>
<rect x="196.00" y="77.50" width="508.00" height="317.10" fill="#e9ecf5"/>
<rect x="196.00" y="77.50" width="508.00" height="15.50" fill="#ffffff"/>
<text x="198.30" y="87.60" font-size="8.4" fill="#202020" stroke="#202020" stroke-width="0.18" textLength="49.30" lengthAdjust="spacingAndGlyphs">Noise Removal</text>
<path d="M690.9 81.5 L697.3 87.9 M697.3 81.5 L690.9 87.9" stroke="#2a2a2a" stroke-width="0.9" fill="none"/>
<rect x="196.00" y="93.00" width="508.00" height="53.70" fill="#4d5464"/>
<text x="201.40" y="105.30" font-size="7.4" fill="#ffffff" font-weight="bold" stroke="#ffffff" stroke-width="0.22" textLength="61.80" lengthAdjust="spacingAndGlyphs">Effect Description</text>
<text x="200.80" y="127.70" font-size="7.2" fill="#f2f3f6" stroke="#f2f3f6" stroke-width="0.18" textLength="403.80" lengthAdjust="spacingAndGlyphs">Reduces noise making the sound clearer. Select a noise sample and try different parameters to achieve optimal results for your music.</text>
<text x="662.40" y="140.60" font-size="7.2" fill="#ffffff" stroke="#ffffff" stroke-width="0.18" textLength="33.80" lengthAdjust="spacingAndGlyphs">Learn More</text>
<rect x="662.40" y="141.60" width="33.80" height="0.7" fill="#ffffff"/>
<text x="200.80" y="158.50" font-size="7.2" fill="#1e1e1e" stroke="#1e1e1e" stroke-width="0.18" textLength="22.20" lengthAdjust="spacingAndGlyphs">Presets</text>
<rect x="200.80" y="164.00" width="104.20" height="180.00" fill="#ffffff" stroke="#dfe3ec" stroke-width="0.6"/>
<text x="204.60" y="173.80" font-size="7.2" fill="#1e1e1e" stroke="#1e1e1e" stroke-width="0.18" textLength="22.20" lengthAdjust="spacingAndGlyphs">Default</text>
<text x="204.60" y="185.70" font-size="7.2" fill="#1e1e1e" stroke="#1e1e1e" stroke-width="0.18" textLength="45.10" lengthAdjust="spacingAndGlyphs">Hum Reduction</text>
<text x="204.60" y="197.60" font-size="7.2" fill="#1e1e1e" stroke="#1e1e1e" stroke-width="0.18" textLength="44.10" lengthAdjust="spacingAndGlyphs">Hiss Reduction</text>
<rect x="200.00" y="349.00" width="50.80" height="15.40" fill="#d9e1f1" stroke="#cbd3e3" stroke-width="0.8"/>
<text x="219.60" y="359.80" font-size="7.2" fill="#1e1e1e" stroke="#1e1e1e" stroke-width="0.18" textLength="12.00" lengthAdjust="spacingAndGlyphs">Add</text>
<rect x="219.60" y="361.00" width="4.60" height="0.7" fill="#1e1e1e"/>
<rect x="255.00" y="349.00" width="50.80" height="15.40" fill="#d9e1f1" stroke="#cbd3e3" stroke-width="0.8"/>
<text x="270.60" y="359.80" font-size="7.2" fill="#1e1e1e" stroke="#1e1e1e" stroke-width="0.18" textLength="19.80" lengthAdjust="spacingAndGlyphs">Delete</text>
<rect x="270.60" y="361.00" width="4.60" height="0.7" fill="#1e1e1e"/>
<rect x="196.00" y="369.30" width="508.00" height="0.80" fill="#f7f8fb"/>
<rect x="196.00" y="368.60" width="508.00" height="0.70" fill="#dde1ea"/>
<rect x="196.00" y="370.10" width="508.00" height="24.50" fill="#eef0f7"/>
<rect x="200.00" y="375.00" width="50.80" height="15.20" fill="#d9e1f1" stroke="#cbd3e3" stroke-width="0.8"/>
<text x="207.30" y="385.40" font-size="7.2" fill="#1e1e1e" stroke="#1e1e1e" stroke-width="0.18" textLength="37.80" lengthAdjust="spacingAndGlyphs">To Favorites</text>
<rect x="216.60" y="386.60" width="3.60" height="0.7" fill="#1e1e1e"/>
<rect x="255.00" y="375.00" width="50.80" height="15.20" fill="#d9e1f1" stroke="#cbd3e3" stroke-width="0.8"/>
<text x="273.90" y="385.40" font-size="7.2" fill="#1e1e1e" stroke="#1e1e1e" stroke-width="0.18" textLength="13.10" lengthAdjust="spacingAndGlyphs">Help</text>
<rect x="273.90" y="386.60" width="4.40" height="0.7" fill="#1e1e1e"/>
<rect x="310.60" y="149.40" width="384.80" height="213.60" fill="#eef0f7" stroke="#d9dde8" stroke-width="0.7"/>
<rect x="311.00" y="149.80" width="384.00" height="13.80" fill="#dfe3ee"/>
<rect x="311.00" y="163.40" width="384.00" height="0.70" fill="#d3d8e4"/>
<text x="315.60" y="159.80" font-size="7.4" fill="#1a1a1a" font-weight="bold" stroke="#1a1a1a" stroke-width="0.22" textLength="41.70" lengthAdjust="spacingAndGlyphs">Parameters</text>
<text x="320.30" y="176.90" font-size="7.4" fill="#1a1a1a" font-weight="bold" stroke="#1a1a1a" stroke-width="0.22" textLength="50.30" lengthAdjust="spacingAndGlyphs">Noise Settings</text>
<rect x="320.00" y="184.00" width="104.40" height="15.80" fill="#d9e1f1" stroke="#cbd3e3" stroke-width="0.8"/>
<text x="346.90" y="194.50" font-size="7.2" fill="#1e1e1e" stroke="#1e1e1e" stroke-width="0.18" textLength="50.00" lengthAdjust="spacingAndGlyphs">Get Noise Profile</text>
<text x="319.40" y="217.50" font-size="7.2" fill="#1e1e1e" stroke="#1e1e1e" stroke-width="0.18" textLength="24.60" lengthAdjust="spacingAndGlyphs">FFT Size</text>
<rect x="358.50" y="209.00" width="65.30" height="12.00" fill="#ffffff" stroke="#e0e4ec" stroke-width="0.6"/>
<text x="361.30" y="217.10" font-size="7.0" fill="#1e1e1e" stroke="#1e1e1e" stroke-width="0.18" textLength="14.70" lengthAdjust="spacingAndGlyphs">4096</text>
<polygon points="415.1,214 419.9,214 417.5,216.7" fill="#1a1a1a"/>
<rect x="320.00" y="230.00" width="49.80" height="15.30" fill="#d9e1f1" stroke="#cbd3e3" stroke-width="0.8"/>
<text x="326.50" y="240.30" font-size="7.2" fill="#1e1e1e" stroke="#1e1e1e" stroke-width="0.18" textLength="36.40" lengthAdjust="spacingAndGlyphs">Save Profile</text>
<rect x="374.00" y="230.00" width="50.40" height="15.30" fill="#d9e1f1" stroke="#cbd3e3" stroke-width="0.8"/>
<text x="381.50" y="240.30" font-size="7.2" fill="#1e1e1e" stroke="#1e1e1e" stroke-width="0.18" textLength="35.60" lengthAdjust="spacingAndGlyphs">Load Profile</text>
<text x="435.30" y="188.50" font-size="7.0" fill="#1e1e1e" stroke="#1e1e1e" stroke-width="0.18" textLength="246.40" lengthAdjust="spacingAndGlyphs">For correct filter functioning it is necessary to set a noise profile. You may click on</text>
<text x="435.30" y="196.70" font-size="7.0" fill="#1e1e1e" stroke="#1e1e1e" stroke-width="0.18" textLength="235.50" lengthAdjust="spacingAndGlyphs">Get Noise Profile and select the part of the edited file that contains noise. The</text>
<text x="435.30" y="204.90" font-size="7.0" fill="#1e1e1e" stroke="#1e1e1e" stroke-width="0.18" textLength="248.20" lengthAdjust="spacingAndGlyphs">resulting profile can be saved to a file. You may also load a previously saved noise</text>
<text x="435.30" y="213.10" font-size="7.0" fill="#1e1e1e" stroke="#1e1e1e" stroke-width="0.18" textLength="99.10" lengthAdjust="spacingAndGlyphs">profile by clicking on Load Profile.</text>
<text x="436.30" y="244.10" font-size="8.2" fill="#2b9a2e" font-weight="bold" stroke="#2b9a2e" stroke-width="0.22" textLength="101.80" lengthAdjust="spacingAndGlyphs">The noise profile is loaded.</text>
<rect x="311.00" y="255.00" width="384.00" height="0.90" fill="#d4d9e5"/>
<rect x="311.00" y="255.90" width="384.00" height="0.60" fill="#f2f4f9"/>
<text x="320.60" y="270.60" font-size="7.4" fill="#1a1a1a" font-weight="bold" stroke="#1a1a1a" stroke-width="0.22" textLength="62.50" lengthAdjust="spacingAndGlyphs">Removal Settings</text>
<text x="319.80" y="285.00" font-size="7.2" fill="#1e1e1e" stroke="#1e1e1e" stroke-width="0.18" textLength="33.00" lengthAdjust="spacingAndGlyphs">Smoothing:</text>
<rect x="320.00" y="294.00" width="104.40" height="3.80" fill="#4a5161"/>
<rect x="320.00" y="294.00" width="2.20" height="3.80" fill="#3a7fe0"/>
<rect x="321.80" y="291.30" width="16.70" height="8.40" fill="#8994a3" rx="0.8"/>
<polygon points="324.0,295.5 326.2,293.9 326.2,297.1" fill="#f4f6fa"/>
<polygon points="336.3,295.5 334.1,293.9 334.1,297.1" fill="#f4f6fa"/>
<rect x="328.80" y="292.60" width="2.20" height="6.20" fill="#7882ad"/>
<polygon points="328.3,299.6 331.5,299.6 329.9,301.7" fill="#111111"/>
<text x="319.40" y="327.80" font-size="7.2" fill="#1e1e1e" stroke="#1e1e1e" stroke-width="0.18" textLength="50.40" lengthAdjust="spacingAndGlyphs">Noise Reduction:</text>
<rect x="320.00" y="334.90" width="104.40" height="4.10" fill="#4a5161"/>
<rect x="320.00" y="335.00" width="17.00" height="3.90" fill="#2c72da"/>
<rect x="336.20" y="332.10" width="16.50" height="8.30" fill="#8994a3" rx="0.8"/>
<polygon points="338.3,336.4 340.4,334.8 340.4,338.0" fill="#f4f6fa"/>
<polygon points="350.6,336.4 348.5,334.8 348.5,338.0" fill="#f4f6fa"/>
<polygon points="341.9,332.4 346.9,332.4 346.4,339 344.4,342.4 342.4,339" fill="#2f6fd2"/>
<rect x="343.80" y="332.80" width="1.20" height="7.20" fill="#9cc6f6"/>
<polygon points="343.0,340.0 345.8,340.0 344.4,342.5" fill="#0f1b4e"/>
<rect x="319.65" y="303.20" width="0.7" height="1.5" fill="#6c7283" opacity="0.75"/>
<rect x="323.83" y="303.20" width="0.7" height="0.9" fill="#6c7283" opacity="0.45"/>
<rect x="328.00" y="303.20" width="0.7" height="0.9" fill="#6c7283" opacity="0.45"/>
<rect x="332.18" y="303.20" width="0.7" height="0.9" fill="#6c7283" opacity="0.45"/>
<rect x="336.35" y="303.20" width="0.7" height="0.9" fill="#6c7283" opacity="0.45"/>
<rect x="340.53" y="303.20" width="0.7" height="1.5" fill="#6c7283" opacity="0.75"/>
<rect x="344.71" y="303.20" width="0.7" height="0.9" fill="#6c7283" opacity="0.45"/>
<rect x="348.88" y="303.20" width="0.7" height="0.9" fill="#6c7283" opacity="0.45"/>
<rect x="353.06" y="303.20" width="0.7" height="0.9" fill="#6c7283" opacity="0.45"/>
<rect x="357.23" y="303.20" width="0.7" height="0.9" fill="#6c7283" opacity="0.45"/>
<rect x="361.41" y="303.20" width="0.7" height="1.5" fill="#6c7283" opacity="0.75"/>
<rect x="365.59" y="303.20" width="0.7" height="0.9" fill="#6c7283" opacity="0.45"/>
<rect x="369.76" y="303.20" width="0.7" height="0.9" fill="#6c7283" opacity="0.45"/>
<rect x="373.94" y="303.20" width="0.7" height="0.9" fill="#6c7283" opacity="0.45"/>
<rect x="378.11" y="303.20" width="0.7" height="0.9" fill="#6c7283" opacity="0.45"/>
<rect x="382.29" y="303.20" width="0.7" height="1.5" fill="#6c7283" opacity="0.75"/>
<rect x="386.47" y="303.20" width="0.7" height="0.9" fill="#6c7283" opacity="0.45"/>
<rect x="390.64" y="303.20" width="0.7" height="0.9" fill="#6c7283" opacity="0.45"/>
<rect x="394.82" y="303.20" width="0.7" height="0.9" fill="#6c7283" opacity="0.45"/>
<rect x="398.99" y="303.20" width="0.7" height="0.9" fill="#6c7283" opacity="0.45"/>
<rect x="403.17" y="303.20" width="0.7" height="1.5" fill="#6c7283" opacity="0.75"/>
<rect x="407.35" y="303.20" width="0.7" height="0.9" fill="#6c7283" opacity="0.45"/>
<rect x="411.52" y="303.20" width="0.7" height="0.9" fill="#6c7283" opacity="0.45"/>
<rect x="415.70" y="303.20" width="0.7" height="0.9" fill="#6c7283" opacity="0.45"/>
<rect x="419.87" y="303.20" width="0.7" height="0.9" fill="#6c7283" opacity="0.45"/>
<rect x="424.05" y="303.20" width="0.7" height="1.5" fill="#6c7283" opacity="0.75"/>
<rect x="319.65" y="344.20" width="0.7" height="1.5" fill="#6c7283" opacity="0.75"/>
<rect x="323.83" y="344.20" width="0.7" height="0.9" fill="#6c7283" opacity="0.45"/>
<rect x="328.00" y="344.20" width="0.7" height="0.9" fill="#6c7283" opacity="0.45"/>
<rect x="332.18" y="344.20" width="0.7" height="0.9" fill="#6c7283" opacity="0.45"/>
<rect x="336.35" y="344.20" width="0.7" height="0.9" fill="#6c7283" opacity="0.45"/>
<rect x="340.53" y="344.20" width="0.7" height="1.5" fill="#6c7283" opacity="0.75"/>
<rect x="344.71" y="344.20" width="0.7" height="0.9" fill="#6c7283" opacity="0.45"/>
<rect x="348.88" y="344.20" width="0.7" height="0.9" fill="#6c7283" opacity="0.45"/>
<rect x="353.06" y="344.20" width="0.7" height="0.9" fill="#6c7283" opacity="0.45"/>
<rect x="357.23" y="344.20" width="0.7" height="0.9" fill="#6c7283" opacity="0.45"/>
<rect x="361.41" y="344.20" width="0.7" height="1.5" fill="#6c7283" opacity="0.75"/>
<rect x="365.59" y="344.20" width="0.7" height="0.9" fill="#6c7283" opacity="0.45"/>
<rect x="369.76" y="344.20" width="0.7" height="0.9" fill="#6c7283" opacity="0.45"/>
<rect x="373.94" y="344.20" width="0.7" height="0.9" fill="#6c7283" opacity="0.45"/>
<rect x="378.11" y="344.20" width="0.7" height="0.9" fill="#6c7283" opacity="0.45"/>
<rect x="382.29" y="344.20" width="0.7" height="1.5" fill="#6c7283" opacity="0.75"/>
<rect x="386.47" y="344.20" width="0.7" height="0.9" fill="#6c7283" opacity="0.45"/>
<rect x="390.64" y="344.20" width="0.7" height="0.9" fill="#6c7283" opacity="0.45"/>
<rect x="394.82" y="344.20" width="0.7" height="0.9" fill="#6c7283" opacity="0.45"/>
<rect x="398.99" y="344.20" width="0.7" height="0.9" fill="#6c7283" opacity="0.45"/>
<rect x="403.17" y="344.20" width="0.7" height="1.5" fill="#6c7283" opacity="0.75"/>
<rect x="407.35" y="344.20" width="0.7" height="0.9" fill="#6c7283" opacity="0.45"/>
<rect x="411.52" y="344.20" width="0.7" height="0.9" fill="#6c7283" opacity="0.45"/>
<rect x="415.70" y="344.20" width="0.7" height="0.9" fill="#6c7283" opacity="0.45"/>
<rect x="419.87" y="344.20" width="0.7" height="0.9" fill="#6c7283" opacity="0.45"/>
<rect x="424.05" y="344.20" width="0.7" height="1.5" fill="#6c7283" opacity="0.75"/>
<text x="318.35" y="312.20" font-size="6.0" fill="#2a2a2a" stroke="#2a2a2a" stroke-width="0.18" textLength="3.30" lengthAdjust="spacingAndGlyphs">0</text>
<text x="337.30" y="312.20" font-size="6.0" fill="#2a2a2a" stroke="#2a2a2a" stroke-width="0.18" textLength="6.60" lengthAdjust="spacingAndGlyphs">20</text>
<text x="358.00" y="312.20" font-size="6.0" fill="#2a2a2a" stroke="#2a2a2a" stroke-width="0.18" textLength="6.60" lengthAdjust="spacingAndGlyphs">40</text>
<text x="378.60" y="312.20" font-size="6.0" fill="#2a2a2a" stroke="#2a2a2a" stroke-width="0.18" textLength="6.60" lengthAdjust="spacingAndGlyphs">60</text>
<text x="399.50" y="312.20" font-size="6.0" fill="#2a2a2a" stroke="#2a2a2a" stroke-width="0.18" textLength="6.60" lengthAdjust="spacingAndGlyphs">80</text>
<text x="420.05" y="312.20" font-size="6.0" fill="#2a2a2a" stroke="#2a2a2a" stroke-width="0.18" textLength="9.90" lengthAdjust="spacingAndGlyphs">100</text>
<text x="315.55" y="353.10" font-size="6.0" fill="#2a2a2a" stroke="#2a2a2a" stroke-width="0.18" textLength="8.90" lengthAdjust="spacingAndGlyphs">-50</text>
<text x="336.85" y="353.10" font-size="6.0" fill="#2a2a2a" stroke="#2a2a2a" stroke-width="0.18" textLength="8.90" lengthAdjust="spacingAndGlyphs">-40</text>
<text x="357.45" y="353.10" font-size="6.0" fill="#2a2a2a" stroke="#2a2a2a" stroke-width="0.18" textLength="8.90" lengthAdjust="spacingAndGlyphs">-30</text>
<text x="378.05" y="353.10" font-size="6.0" fill="#2a2a2a" stroke="#2a2a2a" stroke-width="0.18" textLength="8.90" lengthAdjust="spacingAndGlyphs">-20</text>
<text x="398.55" y="353.10" font-size="6.0" fill="#2a2a2a" stroke="#2a2a2a" stroke-width="0.18" textLength="8.90" lengthAdjust="spacingAndGlyphs">-10</text>
<text x="422.75" y="353.10" font-size="6.0" fill="#2a2a2a" stroke="#2a2a2a" stroke-width="0.18" textLength="3.30" lengthAdjust="spacingAndGlyphs">0</text>
<rect x="436.90" y="290.00" width="17.90" height="11.80" fill="#ffffff" stroke="#e2e6ee" stroke-width="0.6"/>
<text x="438.50" y="298.70" font-size="7.0" fill="#1e1e1e" stroke="#1e1e1e" stroke-width="0.18" textLength="7.40" lengthAdjust="spacingAndGlyphs">10</text>
<text x="457.00" y="297.80" font-size="7.2" fill="#1e1e1e" stroke="#1e1e1e" stroke-width="0.18" textLength="19.90" lengthAdjust="spacingAndGlyphs">% oct.</text>
<rect x="436.30" y="331.00" width="18.50" height="12.00" fill="#ffffff" stroke="#e2e6ee" stroke-width="0.6"/>
<text x="438.00" y="339.60" font-size="7.0" fill="#1e1e1e" stroke="#1e1e1e" stroke-width="0.18" textLength="10.00" lengthAdjust="spacingAndGlyphs">-38</text>
<text x="457.00" y="338.70" font-size="7.2" fill="#1e1e1e" stroke="#1e1e1e" stroke-width="0.18" textLength="6.80" lengthAdjust="spacingAndGlyphs">dB</text>
<rect x="508.00" y="290.00" width="27.00" height="12.00" fill="#ffffff" stroke="#e2e6ee" stroke-width="0.6"/>
<text x="510.30" y="298.80" font-size="7.0" fill="#1e1e1e" stroke="#1e1e1e" stroke-width="0.18" textLength="11.00" lengthAdjust="spacingAndGlyphs">232</text>
<text x="537.80" y="285.00" font-size="7.2" fill="#1e1e1e" stroke="#1e1e1e" stroke-width="0.18" textLength="51.60" lengthAdjust="spacingAndGlyphs">Noise Bandwidth:</text>
<rect x="547.00" y="292.80" width="99.00" height="3.80" fill="#2c70d8"/>
<rect x="545.00" y="302.10" width="99.40" height="0.70" fill="#6f8fbc"/>
<rect x="543.60" y="290.30" width="5.40" height="8.60" fill="#8994a3" rx="0.8"/>
<rect x="645.20" y="290.40" width="5.30" height="8.40" fill="#8b94a8" rx="0.8"/>
<polygon points="544.6,294.6 547.2,292.8 547.2,296.4" fill="#e8ecf6"/>
<polygon points="649.4,294.6 646.8,292.8 646.8,296.4" fill="#f1f3d8"/>
<polygon points="546.6,299 549.4,299 548.6,301.2" fill="#111111"/>
<polygon points="644.6,299 647.4,299 645.4,301.2" fill="#111111"/>
<rect x="544.65" y="304.00" width="0.7" height="1.5" fill="#6c7283" opacity="0.75"/>
<rect x="548.67" y="304.00" width="0.7" height="0.9" fill="#6c7283" opacity="0.45"/>
<rect x="552.70" y="304.00" width="0.7" height="0.9" fill="#6c7283" opacity="0.45"/>
<rect x="556.72" y="304.00" width="0.7" height="0.9" fill="#6c7283" opacity="0.45"/>
<rect x="560.75" y="304.00" width="0.7" height="0.9" fill="#6c7283" opacity="0.45"/>
<rect x="564.77" y="304.00" width="0.7" height="1.5" fill="#6c7283" opacity="0.75"/>
<rect x="568.79" y="304.00" width="0.7" height="0.9" fill="#6c7283" opacity="0.45"/>
<rect x="572.82" y="304.00" width="0.7" height="0.9" fill="#6c7283" opacity="0.45"/>
<rect x="576.84" y="304.00" width="0.7" height="0.9" fill="#6c7283" opacity="0.45"/>
<rect x="580.87" y="304.00" width="0.7" height="0.9" fill="#6c7283" opacity="0.45"/>
<rect x="584.89" y="304.00" width="0.7" height="1.5" fill="#6c7283" opacity="0.75"/>
<rect x="588.91" y="304.00" width="0.7" height="0.9" fill="#6c7283" opacity="0.45"/>
<rect x="592.94" y="304.00" width="0.7" height="0.9" fill="#6c7283" opacity="0.45"/>
<rect x="596.96" y="304.00" width="0.7" height="0.9" fill="#6c7283" opacity="0.45"/>
<rect x="600.99" y="304.00" width="0.7" height="0.9" fill="#6c7283" opacity="0.45"/>
<rect x="605.01" y="304.00" width="0.7" height="1.5" fill="#6c7283" opacity="0.75"/>
<rect x="609.03" y="304.00" width="0.7" height="0.9" fill="#6c7283" opacity="0.45"/>
<rect x="613.06" y="304.00" width="0.7" height="0.9" fill="#6c7283" opacity="0.45"/>
<rect x="617.08" y="304.00" width="0.7" height="0.9" fill="#6c7283" opacity="0.45"/>
<rect x="621.11" y="304.00" width="0.7" height="0.9" fill="#6c7283" opacity="0.45"/>
<rect x="625.13" y="304.00" width="0.7" height="1.5" fill="#6c7283" opacity="0.75"/>
<rect x="629.15" y="304.00" width="0.7" height="0.9" fill="#6c7283" opacity="0.45"/>
<rect x="633.18" y="304.00" width="0.7" height="0.9" fill="#6c7283" opacity="0.45"/>
<rect x="637.20" y="304.00" width="0.7" height="0.9" fill="#6c7283" opacity="0.45"/>
<rect x="641.23" y="304.00" width="0.7" height="0.9" fill="#6c7283" opacity="0.45"/>
<rect x="645.25" y="304.00" width="0.7" height="1.5" fill="#6c7283" opacity="0.75"/>
<text x="541.60" y="313.40" font-size="6.0" fill="#2a2a2a" stroke="#2a2a2a" stroke-width="0.18" textLength="6.40" lengthAdjust="spacingAndGlyphs">20</text>
<text x="558.20" y="313.40" font-size="6.0" fill="#2a2a2a" stroke="#2a2a2a" stroke-width="0.18" textLength="12.80" lengthAdjust="spacingAndGlyphs">1183</text>
<text x="578.00" y="313.40" font-size="6.0" fill="#2a2a2a" stroke="#2a2a2a" stroke-width="0.18" textLength="12.80" lengthAdjust="spacingAndGlyphs">2631</text>
<text x="598.00" y="313.40" font-size="6.0" fill="#2a2a2a" stroke="#2a2a2a" stroke-width="0.18" textLength="12.80" lengthAdjust="spacingAndGlyphs">4503</text>
<text x="618.20" y="313.40" font-size="6.0" fill="#2a2a2a" stroke="#2a2a2a" stroke-width="0.18" textLength="12.80" lengthAdjust="spacingAndGlyphs">7295</text>
<text x="637.60" y="313.40" font-size="6.0" fill="#2a2a2a" stroke="#2a2a2a" stroke-width="0.18" textLength="16.00" lengthAdjust="spacingAndGlyphs">22050</text>
<rect x="656.60" y="289.40" width="26.90" height="12.30" fill="#ffffff" stroke="#e2e6ee" stroke-width="0.6"/>
<text x="658.10" y="298.80" font-size="7.0" fill="#1e1e1e" stroke="#1e1e1e" stroke-width="0.18" textLength="18.80" lengthAdjust="spacingAndGlyphs">22050</text>
<circle cx="543.1" cy="333" r="3.9" fill="#f4f5fa" stroke="#e0e3ec" stroke-width="0.6"/>
<circle cx="543.1" cy="333" r="2.0" fill="#15171c"/>
<circle cx="543.1" cy="348" r="3.9" fill="#ffffff" stroke="#dfe2ea" stroke-width="0.7"/>
<text x="550.00" y="335.60" font-size="7.2" fill="#1e1e1e" stroke="#1e1e1e" stroke-width="0.18" textLength="41.90" lengthAdjust="spacingAndGlyphs">Remove noise</text>
<text x="550.00" y="350.60" font-size="7.2" fill="#1e1e1e" stroke="#1e1e1e" stroke-width="0.18" textLength="47.50" lengthAdjust="spacingAndGlyphs">Keep only noise</text>
<rect x="485.10" y="377.90" width="7.50" height="8.40" fill="#ffffff" stroke="#dcdfe8" stroke-width="0.7"/>
<text x="496.10" y="385.00" font-size="7.2" fill="#1e1e1e" stroke="#1e1e1e" stroke-width="0.18" textLength="20.90" lengthAdjust="spacingAndGlyphs">Bypass</text>
<rect x="539.00" y="375.00" width="50.60" height="15.20" fill="#d9e1f1" stroke="#cbd3e3" stroke-width="0.8"/>
<text x="552.50" y="385.40" font-size="7.2" fill="#1e1e1e" stroke="#1e1e1e" stroke-width="0.18" textLength="24.40" lengthAdjust="spacingAndGlyphs">Preview</text>
<rect x="594.00" y="375.00" width="50.60" height="15.20" fill="#d9e1f1" stroke="#cbd3e3" stroke-width="0.8"/>
<text x="609.00" y="385.40" font-size="7.2" fill="#1e1e1e" stroke="#1e1e1e" stroke-width="0.18" textLength="20.60" lengthAdjust="spacingAndGlyphs">Cancel</text>
<rect x="609.00" y="386.60" width="4.80" height="0.7" fill="#1e1e1e"/>
<rect x="649.00" y="375.00" width="49.80" height="15.20" fill="#d9e1f1" stroke="#cbd3e3" stroke-width="0.8"/>
<text x="670.30" y="385.40" font-size="7.2" fill="#1e1e1e" stroke="#1e1e1e" stroke-width="0.18" textLength="8.70" lengthAdjust="spacingAndGlyphs">OK</text>
<rect x="670.30" y="386.60" width="4.90" height="0.7" fill="#1e1e1e"/>
</g>
</g></svg></body></html>
